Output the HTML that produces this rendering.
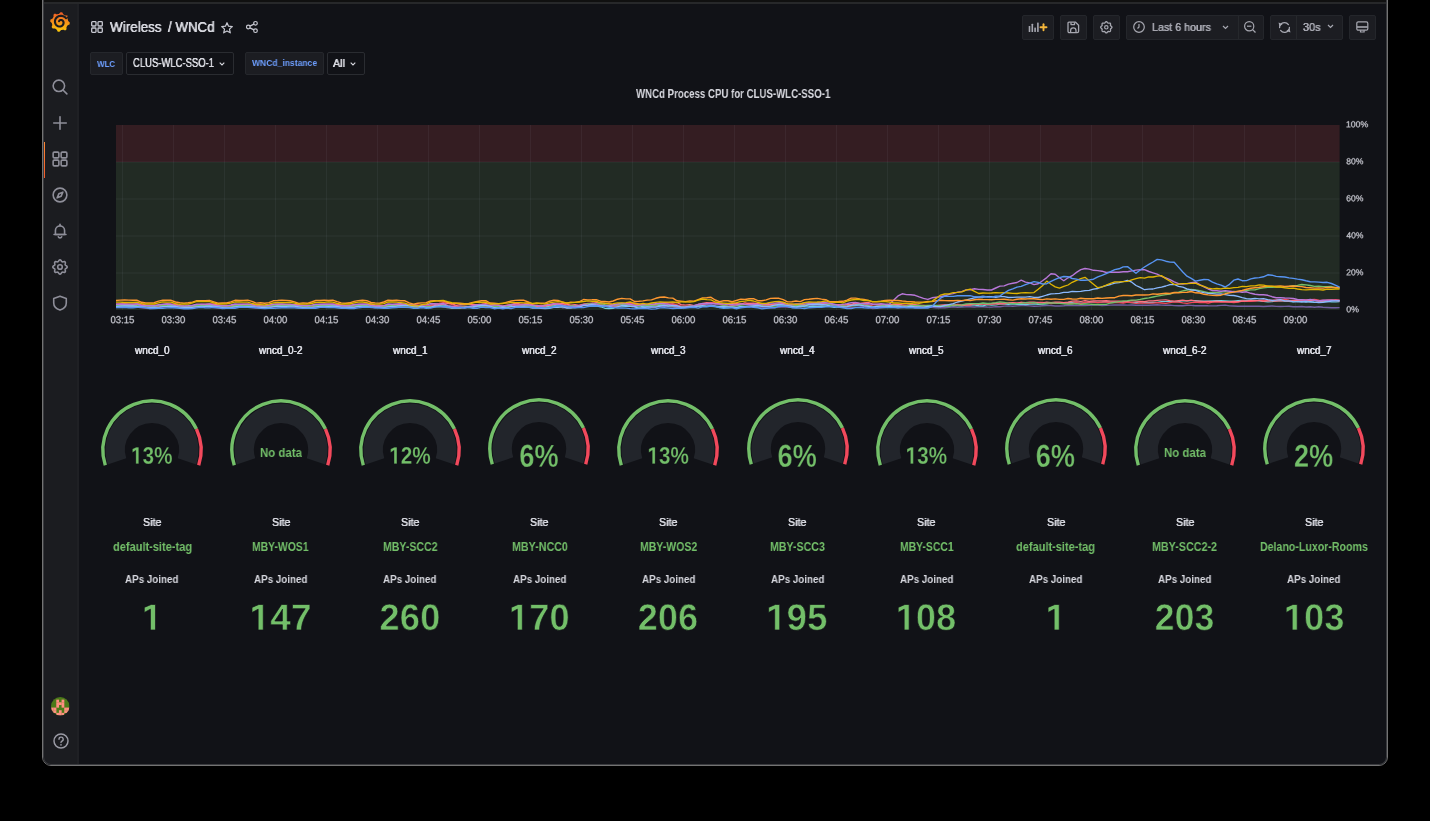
<!DOCTYPE html><html><head><meta charset="utf-8"><style>
*{margin:0;padding:0;box-sizing:border-box}
html,body{width:1430px;height:821px;background:#000;overflow:hidden;font-family:"Liberation Sans",sans-serif;color:#ccccdc}
#win{position:absolute;left:42px;top:-20px;width:1346px;height:786px;border:1px solid #737373;border-radius:9px;background:#111217;overflow:hidden}
#pg{position:absolute;left:-43px;top:19px;width:1430px;height:821px}
.t{position:absolute;white-space:nowrap;transform-origin:0 0;will-change:transform}
.bx{position:absolute;border-radius:2px}
svg{position:absolute;overflow:visible}
</style></head><body>
<div id="win"><div id="pg"><div class='bx' style='left:43px;top:0px;width:1344px;height:2px;background:#101010;border-radius:0px;'></div><div class='bx' style='left:43px;top:2px;width:1344px;height:2px;background:#27282a;border-radius:0px;'></div><div class='bx' style='left:43px;top:4px;width:34px;height:762px;background:#1b1c20;border-radius:0px;'></div><div class='bx' style='left:77px;top:4px;width:2px;height:762px;background:#1f2024;border-radius:0px;'></div><div class='bx' style='left:43px;top:142px;width:2px;height:36px;border-radius:0;background:linear-gradient(#ff8833,#f05a28)'></div><svg style='left:50px;top:12px' width='20' height='20' viewBox='0 0 20 20'><defs><linearGradient id='lg' x1='0' y1='0' x2='0' y2='1'><stop offset='0' stop-color='#f05a28'/><stop offset='1' stop-color='#fbca0a'/></linearGradient></defs><polygon points='11.46,0.31 12.41,0.50 12.95,1.84 13.53,2.60 14.23,2.98 14.90,3.43 15.85,3.58 17.28,3.44 17.89,4.18 18.42,4.98 17.86,6.31 17.73,7.26 17.96,8.03 18.11,8.82 18.67,9.60 19.79,10.51 19.69,11.46 19.50,12.41 18.16,12.95 17.40,13.53 17.02,14.23 16.57,14.90 16.42,15.85 16.56,17.28 15.82,17.89 15.02,18.42 13.69,17.86 12.74,17.73 11.97,17.96 11.18,18.11 10.40,18.67 9.49,19.79 8.54,19.69 7.59,19.50 7.05,18.16 6.47,17.40 5.77,17.02 5.10,16.57 4.15,16.42 2.72,16.56 2.11,15.82 1.58,15.02 2.14,13.69 2.27,12.74 2.04,11.97 1.89,11.18 1.33,10.40 0.21,9.49 0.31,8.54 0.50,7.59 1.84,7.05 2.60,6.47 2.98,5.77 3.43,5.10 3.58,4.15 3.44,2.72 4.18,2.11 4.98,1.58 6.31,2.14 7.26,2.27 8.03,2.04 8.82,1.89 9.60,1.33 10.51,0.21' fill='url(#lg)'/><polyline points='16.03,6.18 15.53,5.65 14.98,5.18 14.39,4.78 13.76,4.44 13.11,4.17 12.44,3.98 11.76,3.86 11.08,3.81 10.41,3.83 9.75,3.92 9.11,4.08 8.50,4.31 7.92,4.59 7.38,4.93 6.89,5.33 6.44,5.76 6.05,6.24 5.72,6.75 5.44,7.28 5.22,7.83 5.07,8.40 4.98,8.97 4.95,9.54 4.98,10.11 5.07,10.66 5.22,11.19 5.41,11.69 5.66,12.17 5.95,12.61 6.29,13.01 6.65,13.37 7.05,13.68 7.48,13.95 7.92,14.16 8.38,14.32 8.84,14.44 9.31,14.50 9.77,14.51 10.23,14.47 10.67,14.38 11.09,14.25 11.49,14.08 11.86,13.87 12.20,13.63 12.51,13.35 12.78,13.05 13.01,12.73 13.21,12.39 13.36,12.04 13.47,11.68 13.54,11.32 13.57,10.96 13.57,10.60 13.52,10.26 13.44,9.93 13.32,9.61 13.18,9.32 13.01,9.05 12.81,8.81 12.59,8.59 12.36,8.41 12.11,8.25 11.86,8.13 11.60,8.04 11.34,7.98 11.07,7.95 10.82,7.95 10.57,7.98 10.34,8.03 10.12,8.11 9.91,8.21 9.73,8.33 9.56,8.46 9.42,8.61 9.30,8.77 9.20,8.93 9.12,9.10 9.07,9.27' fill='none' stroke='#1b1c20' stroke-width='2.1' stroke-linecap='round'/><path d='M16.5 5 L19 3.5 L18.5 8 Z' fill='#1b1c20'/></svg><svg style='left:52px;top:79px' width='16' height='16' viewBox='0 0 14 14'><circle cx='6' cy='6' r='5' fill='none' stroke='#8e8e99' stroke-width='1.4' stroke-linecap='round' stroke-linejoin='round'/><line x1='9.8' y1='9.8' x2='13' y2='13' fill='none' stroke='#8e8e99' stroke-width='1.4' stroke-linecap='round' stroke-linejoin='round'/></svg><svg style='left:52px;top:115px' width='16' height='16' viewBox='0 0 14 14'><line x1='7' y1='1.5' x2='7' y2='12.5' fill='none' stroke='#8e8e99' stroke-width='1.4' stroke-linecap='round' stroke-linejoin='round'/><line x1='1.5' y1='7' x2='12.5' y2='7' fill='none' stroke='#8e8e99' stroke-width='1.4' stroke-linecap='round' stroke-linejoin='round'/></svg><svg style='left:52px;top:151px' width='16' height='16' viewBox='0 0 14 14'><rect x='1' y='1' width='5' height='5' rx='1' fill='none' stroke='#8e8e99' stroke-width='1.4' stroke-linecap='round' stroke-linejoin='round' stroke='#c8c8d2'/><rect x='8' y='1' width='5' height='5' rx='1' fill='none' stroke='#8e8e99' stroke-width='1.4' stroke-linecap='round' stroke-linejoin='round' stroke='#c8c8d2'/><rect x='1' y='8' width='5' height='5' rx='1' fill='none' stroke='#8e8e99' stroke-width='1.4' stroke-linecap='round' stroke-linejoin='round' stroke='#c8c8d2'/><rect x='8' y='8' width='5' height='5' rx='1' fill='none' stroke='#8e8e99' stroke-width='1.4' stroke-linecap='round' stroke-linejoin='round' stroke='#c8c8d2'/></svg><svg style='left:52px;top:187px' width='16' height='16' viewBox='0 0 14 14'><circle cx='7' cy='7' r='6' fill='none' stroke='#8e8e99' stroke-width='1.4' stroke-linecap='round' stroke-linejoin='round'/><path d='M9.5 4.5 L8 8 L4.5 9.5 L6 6 Z' fill='none' stroke='#8e8e99' stroke-width='1.4' stroke-linecap='round' stroke-linejoin='round' stroke-width='1.1'/></svg><svg style='left:52px;top:223px' width='16' height='16' viewBox='0 0 14 14'><path d='M3 10 V6.5 A4 4 0 0 1 11 6.5 V10 Z' fill='none' stroke='#8e8e99' stroke-width='1.4' stroke-linecap='round' stroke-linejoin='round'/><line x1='1.8' y1='10' x2='12.2' y2='10' fill='none' stroke='#8e8e99' stroke-width='1.4' stroke-linecap='round' stroke-linejoin='round'/><path d='M5.5 12 A1.6 1.6 0 0 0 8.5 12' fill='none' stroke='#8e8e99' stroke-width='1.4' stroke-linecap='round' stroke-linejoin='round'/><line x1='7' y1='1.2' x2='7' y2='2.4' fill='none' stroke='#8e8e99' stroke-width='1.4' stroke-linecap='round' stroke-linejoin='round'/></svg><svg style='left:52px;top:259px' width='16' height='16' viewBox='0 0 14 14'><polygon points='13.30,7.00 13.19,7.41 12.90,7.78 12.49,8.09 12.07,8.36 11.73,8.61 11.53,8.88 11.48,9.21 11.55,9.62 11.66,10.11 11.72,10.62 11.67,11.09 11.45,11.45 11.09,11.67 10.62,11.72 10.11,11.66 9.62,11.55 9.21,11.48 8.88,11.53 8.61,11.73 8.36,12.07 8.09,12.49 7.78,12.90 7.41,13.19 7.00,13.30 6.59,13.19 6.22,12.90 5.91,12.49 5.64,12.07 5.39,11.73 5.12,11.53 4.79,11.48 4.38,11.55 3.89,11.66 3.38,11.72 2.91,11.67 2.55,11.45 2.33,11.09 2.28,10.62 2.34,10.11 2.45,9.62 2.52,9.21 2.47,8.88 2.27,8.61 1.93,8.36 1.51,8.09 1.10,7.78 0.81,7.41 0.70,7.00 0.81,6.59 1.10,6.22 1.51,5.91 1.93,5.64 2.27,5.39 2.47,5.12 2.52,4.79 2.45,4.38 2.34,3.89 2.28,3.38 2.33,2.91 2.55,2.55 2.91,2.33 3.38,2.28 3.89,2.34 4.37,2.45 4.79,2.52 5.12,2.47 5.39,2.27 5.64,1.93 5.91,1.51 6.22,1.10 6.59,0.81 7.00,0.70 7.41,0.81 7.78,1.10 8.09,1.51 8.36,1.93 8.61,2.27 8.88,2.47 9.21,2.52 9.62,2.45 10.11,2.34 10.62,2.28 11.09,2.33 11.45,2.55 11.67,2.91 11.72,3.38 11.66,3.89 11.55,4.37 11.48,4.79 11.53,5.12 11.73,5.39 12.07,5.64 12.49,5.91 12.90,6.22 13.19,6.59' fill='none' stroke='#8e8e99' stroke-width='1.4' stroke-linecap='round' stroke-linejoin='round' stroke-width='1.2'/><circle cx='7' cy='7' r='2' fill='none' stroke='#8e8e99' stroke-width='1.4' stroke-linecap='round' stroke-linejoin='round'/></svg><svg style='left:52px;top:295px' width='16' height='16' viewBox='0 0 14 14'><path d='M7 1 L12.5 3 V7 C12.5 10 10 12.2 7 13.2 C4 12.2 1.5 10 1.5 7 V3 Z' fill='none' stroke='#8e8e99' stroke-width='1.4' stroke-linecap='round' stroke-linejoin='round'/></svg><svg style='left:51px;top:697px' width='18.5' height='18.5' viewBox='0 0 18.2 18.2'><defs><clipPath id='avc'><circle cx='9.1' cy='9.1' r='9.1'/></clipPath></defs><g clip-path='url(#avc)'><rect width='18.2' height='18.2' fill='#4b7a18'/><rect x='0.0' y='0.0' width='2.7' height='2.7' fill='#ff8f82'/><rect x='15.6' y='0.0' width='2.7' height='2.7' fill='#ff8f82'/><rect x='5.2' y='2.6' width='2.7' height='2.7' fill='#ff8f82'/><rect x='10.4' y='2.6' width='2.7' height='2.7' fill='#ff8f82'/><rect x='5.2' y='5.2' width='2.7' height='2.7' fill='#ff8f82'/><rect x='7.8' y='5.2' width='2.7' height='2.7' fill='#ff8f82'/><rect x='10.4' y='5.2' width='2.7' height='2.7' fill='#ff8f82'/><rect x='5.2' y='7.8' width='2.7' height='2.7' fill='#ff8f82'/><rect x='10.4' y='7.8' width='2.7' height='2.7' fill='#ff8f82'/><rect x='0.0' y='10.4' width='2.7' height='2.7' fill='#ff8f82'/><rect x='2.6' y='10.4' width='2.7' height='2.7' fill='#ff8f82'/><rect x='13.0' y='10.4' width='2.7' height='2.7' fill='#ff8f82'/><rect x='15.6' y='10.4' width='2.7' height='2.7' fill='#ff8f82'/><rect x='0.0' y='13.0' width='2.7' height='2.7' fill='#ff8f82'/><rect x='2.6' y='13.0' width='2.7' height='2.7' fill='#ff8f82'/><rect x='7.8' y='13.0' width='2.7' height='2.7' fill='#ff8f82'/><rect x='13.0' y='13.0' width='2.7' height='2.7' fill='#ff8f82'/><rect x='15.6' y='13.0' width='2.7' height='2.7' fill='#ff8f82'/><rect x='5.2' y='15.6' width='2.7' height='2.7' fill='#ff8f82'/><rect x='7.8' y='15.6' width='2.7' height='2.7' fill='#ff8f82'/><rect x='10.4' y='15.6' width='2.7' height='2.7' fill='#ff8f82'/></g></svg><svg style='left:52.5px;top:733px' width='16' height='16' viewBox='0 0 16 16'><circle cx='8' cy='8' r='7' fill='none' stroke='#9a9aa4' stroke-width='1.5'/><path d='M6 6.3 A2.1 2.1 0 1 1 8.6 8.3 C8.1 8.5 8 8.9 8 9.6' fill='none' stroke='#9a9aa4' stroke-width='1.4' stroke-linecap='round'/><circle cx='8' cy='11.8' r='0.85' fill='#9a9aa4'/></svg><svg style='left:91px;top:21px' width='12' height='12' viewBox='0 0 12 12'><rect x='0.7' y='0.7' width='4.3' height='4.3' rx='0.8' fill='none' stroke='#c8c9d2' stroke-width='1.3'/><rect x='7' y='0.7' width='4.3' height='4.3' rx='0.8' fill='none' stroke='#c8c9d2' stroke-width='1.3'/><rect x='0.7' y='7' width='4.3' height='4.3' rx='0.8' fill='none' stroke='#c8c9d2' stroke-width='1.3'/><rect x='7' y='7' width='4.3' height='4.3' rx='0.8' fill='none' stroke='#c8c9d2' stroke-width='1.3'/></svg><svg style='left:221px;top:22px' width='12' height='12' viewBox='0 0 12 12'><polygon points='6.00,0.70 7.53,4.20 11.33,4.57 8.47,7.10 9.29,10.83 6.00,8.90 2.71,10.83 3.53,7.10 0.67,4.57 4.47,4.20' fill='none' stroke='#c8c9d2' stroke-width='1.2' stroke-linejoin='round'/></svg><svg style='left:246px;top:21px' width='12' height='12' viewBox='0 0 12 12'><g fill='none' stroke='#c8c9d2' stroke-width='1.2'><circle cx='9.5' cy='2.3' r='1.8'/><circle cx='2.3' cy='6' r='1.8'/><circle cx='9.5' cy='9.7' r='1.8'/><line x1='3.9' y1='5.1' x2='7.9' y2='3.1'/><line x1='3.9' y1='6.9' x2='7.9' y2='8.9'/></g></svg><div class='bx' style='left:1022px;top:15px;width:32px;height:24.5px;background:#1c1d22;border:1px solid #24262b;border-radius:2px;'></div><div class='bx' style='left:1059.5px;top:15px;width:27.5px;height:24.5px;background:#1c1d22;border:1px solid #24262b;border-radius:2px;'></div><div class='bx' style='left:1092.5px;top:15px;width:27.5px;height:24.5px;background:#1c1d22;border:1px solid #24262b;border-radius:2px;'></div><div class='bx' style='left:1125.5px;top:15px;width:138.5px;height:24.5px;background:#1c1d22;border:1px solid #24262b;border-radius:2px;'></div><div class='bx' style='left:1270px;top:15px;width:73px;height:24.5px;background:#1c1d22;border:1px solid #24262b;border-radius:2px;'></div><div class='bx' style='left:1348.5px;top:15px;width:27.5px;height:24.5px;background:#1c1d22;border:1px solid #24262b;border-radius:2px;'></div><div class='bx' style='left:1237.5px;top:15.5px;width:1.0px;height:23.5px;background:#26282c;border-radius:0px;'></div><div class='bx' style='left:1296px;top:15.5px;width:1px;height:23.5px;background:#26282c;border-radius:0px;'></div><svg style='left:1028px;top:21px' width='20' height='12' viewBox='0 0 20 12'><g fill='#a6a7b0'><rect x='0.7' y='5' width='1.6' height='6' rx='0.5'/><rect x='3.5' y='2.8' width='1.6' height='8.2' rx='0.5'/><rect x='6.3' y='6.5' width='1.6' height='4.5' rx='0.5'/><rect x='9.1' y='1.5' width='1.6' height='9.5' rx='0.5'/></g><g stroke='#f5b73b' stroke-width='1.9' stroke-linecap='round'><line x1='15.5' y1='3.2' x2='15.5' y2='9.2'/><line x1='12.5' y1='6.2' x2='18.5' y2='6.2'/></g></svg><svg style='left:1067px;top:21px' width='13' height='13' viewBox='0 0 13 13'><g fill='none' stroke='#a6a7b0' stroke-width='1.3' stroke-linejoin='round'><path d='M2 1.2 H8.6 L11.6 4.2 V10.2 Q11.6 11.6 10.2 11.6 H2.4 Q1 11.6 1 10.2 V2.4 Q1 1.2 2 1.2 Z'/><path d='M4 1.5 V3.6 H7.5 V1.5'/><path d='M3.6 11.4 V9.6 A2.7 2.7 0 0 1 9 9.6 V11.4'/></g></svg><svg style='left:1100px;top:21px' width='13' height='13' viewBox='0 0 13 13'><polygon points='11.65,6.00 11.56,6.36 11.33,6.70 11.00,6.99 10.66,7.25 10.38,7.49 10.20,7.74 10.15,8.05 10.18,8.41 10.24,8.83 10.26,9.27 10.19,9.68 10.00,10.00 9.68,10.19 9.27,10.26 8.83,10.24 8.41,10.18 8.05,10.15 7.74,10.20 7.49,10.38 7.25,10.66 6.99,11.00 6.70,11.33 6.36,11.56 6.00,11.65 5.64,11.56 5.30,11.33 5.01,11.00 4.75,10.66 4.51,10.38 4.26,10.20 3.95,10.15 3.59,10.18 3.17,10.24 2.73,10.26 2.32,10.19 2.00,10.00 1.81,9.68 1.74,9.27 1.76,8.83 1.82,8.41 1.85,8.05 1.80,7.74 1.62,7.49 1.34,7.25 1.00,6.99 0.67,6.70 0.44,6.36 0.35,6.00 0.44,5.64 0.67,5.30 1.00,5.01 1.34,4.75 1.62,4.51 1.80,4.26 1.85,3.95 1.82,3.59 1.76,3.17 1.74,2.73 1.81,2.32 2.00,2.00 2.32,1.81 2.73,1.74 3.17,1.76 3.59,1.82 3.95,1.85 4.26,1.80 4.51,1.62 4.75,1.34 5.01,1.00 5.30,0.67 5.64,0.44 6.00,0.35 6.36,0.44 6.70,0.67 6.99,1.00 7.25,1.34 7.49,1.62 7.74,1.80 8.05,1.85 8.41,1.82 8.83,1.76 9.27,1.74 9.68,1.81 10.00,2.00 10.19,2.32 10.26,2.73 10.24,3.17 10.18,3.59 10.15,3.95 10.20,4.26 10.38,4.51 10.66,4.75 11.00,5.01 11.33,5.30 11.56,5.64' fill='none' stroke='#a6a7b0' stroke-width='1.3' stroke-linejoin='round' transform='translate(0.3,0.3)'/><circle cx='6.3' cy='6.3' r='1.7' fill='none' stroke='#a6a7b0' stroke-width='1.2'/></svg><svg style='left:1133px;top:21px' width='12' height='12' viewBox='0 0 12 12'><circle cx='6' cy='6' r='5.3' fill='none' stroke='#a6a7b0' stroke-width='1.2'/><path d='M6 3 V6 L4.5 7.5' fill='none' stroke='#a6a7b0' stroke-width='1.2'/></svg><svg style='left:1221.5px;top:24.5px' width='7' height='5' viewBox='0 0 7 5'><path d='M1 1 L3.5 3.5 L6 1' fill='none' stroke='#a6a7b0' stroke-width='1.2'/></svg><svg style='left:1244px;top:21px' width='12' height='12' viewBox='0 0 12 12'><circle cx='5.2' cy='5.2' r='4.6' fill='none' stroke='#a6a7b0' stroke-width='1.2'/><line x1='3' y1='5.2' x2='7.4' y2='5.2' stroke='#a6a7b0' stroke-width='1.2'/><line x1='8.6' y1='8.6' x2='11.5' y2='11.5' stroke='#a6a7b0' stroke-width='1.3'/></svg><svg style='left:1277.5px;top:21px' width='13' height='13' viewBox='0 0 13 13'><g fill='none' stroke='#a6a7b0' stroke-width='1.3' stroke-linecap='round'><path d='M1.6 6.5 A4.9 4.9 0 0 1 10.4 3.6'/><path d='M11.4 6.5 A4.9 4.9 0 0 1 2.6 9.4'/></g><path d='M0.6 1.6 L4.6 3.2 L1.4 5.6 Z' fill='#a6a7b0'/><path d='M12.4 11.4 L8.4 9.8 L11.6 7.4 Z' fill='#a6a7b0'/></svg><svg style='left:1327px;top:24px' width='7' height='5' viewBox='0 0 7 5'><path d='M1 1 L3.5 3.5 L6 1' fill='none' stroke='#a6a7b0' stroke-width='1.2'/></svg><svg style='left:1356px;top:21px' width='13' height='13' viewBox='0 0 13 13'><g fill='none' stroke='#a6a7b0' stroke-width='1.2'><rect x='0.8' y='0.8' width='11' height='8.4' rx='1.5'/><path d='M4.5 9.2 V11 H8.1 V9.2'/></g><rect x='1' y='5.2' width='10.6' height='1.6' fill='#a6a7b0'/></svg><div class='bx' style='left:90px;top:52px;width:33px;height:23px;background:#1c1d22;border:1px solid #25272c;border-radius:2px;'></div><div class='bx' style='left:126px;top:52px;width:108px;height:23px;background:#111217;border:1px solid #2a2c31;border-radius:2px;'></div><div class='bx' style='left:245px;top:52px;width:79px;height:23px;background:#1c1d22;border:1px solid #25272c;border-radius:2px;'></div><div class='bx' style='left:327px;top:52px;width:38px;height:23px;background:#111217;border:1px solid #2a2c31;border-radius:2px;'></div><svg style='left:219px;top:61.5px' width='6' height='4' viewBox='0 0 6 4'><path d='M0.7 0.7 L3 3 L5.3 0.7' fill='none' stroke='#d8d9e0' stroke-width='1.1'/></svg><svg style='left:350px;top:61.5px' width='6' height='4' viewBox='0 0 6 4'><path d='M0.7 0.7 L3 3 L5.3 0.7' fill='none' stroke='#d8d9e0' stroke-width='1.1'/></svg><svg style='left:116px;top:124.7px' width='1223.6' height='185.0'><rect x='0' y='0' width='1223.6' height='37.0' fill='#341d22'/><rect x='0' y='37.0' width='1223.6' height='148.0' fill='#222b24'/><line x1='0' y1='148.0' x2='1223.6' y2='148.0' stroke='rgba(204,204,220,0.07)' stroke-width='1'/><line x1='0' y1='111.0' x2='1223.6' y2='111.0' stroke='rgba(204,204,220,0.07)' stroke-width='1'/><line x1='0' y1='74.0' x2='1223.6' y2='74.0' stroke='rgba(204,204,220,0.07)' stroke-width='1'/><line x1='0' y1='37.0' x2='1223.6' y2='37.0' stroke='rgba(204,204,220,0.07)' stroke-width='1'/><line x1='6.4' y1='0' x2='6.4' y2='185.0' stroke='rgba(204,204,220,0.07)' stroke-width='1'/><line x1='57.4' y1='0' x2='57.4' y2='185.0' stroke='rgba(204,204,220,0.07)' stroke-width='1'/><line x1='108.4' y1='0' x2='108.4' y2='185.0' stroke='rgba(204,204,220,0.07)' stroke-width='1'/><line x1='159.4' y1='0' x2='159.4' y2='185.0' stroke='rgba(204,204,220,0.07)' stroke-width='1'/><line x1='210.4' y1='0' x2='210.4' y2='185.0' stroke='rgba(204,204,220,0.07)' stroke-width='1'/><line x1='261.4' y1='0' x2='261.4' y2='185.0' stroke='rgba(204,204,220,0.07)' stroke-width='1'/><line x1='312.4' y1='0' x2='312.4' y2='185.0' stroke='rgba(204,204,220,0.07)' stroke-width='1'/><line x1='363.4' y1='0' x2='363.4' y2='185.0' stroke='rgba(204,204,220,0.07)' stroke-width='1'/><line x1='414.4' y1='0' x2='414.4' y2='185.0' stroke='rgba(204,204,220,0.07)' stroke-width='1'/><line x1='465.4' y1='0' x2='465.4' y2='185.0' stroke='rgba(204,204,220,0.07)' stroke-width='1'/><line x1='516.4' y1='0' x2='516.4' y2='185.0' stroke='rgba(204,204,220,0.07)' stroke-width='1'/><line x1='567.4' y1='0' x2='567.4' y2='185.0' stroke='rgba(204,204,220,0.07)' stroke-width='1'/><line x1='618.4' y1='0' x2='618.4' y2='185.0' stroke='rgba(204,204,220,0.07)' stroke-width='1'/><line x1='669.4' y1='0' x2='669.4' y2='185.0' stroke='rgba(204,204,220,0.07)' stroke-width='1'/><line x1='720.4' y1='0' x2='720.4' y2='185.0' stroke='rgba(204,204,220,0.07)' stroke-width='1'/><line x1='771.4' y1='0' x2='771.4' y2='185.0' stroke='rgba(204,204,220,0.07)' stroke-width='1'/><line x1='822.4' y1='0' x2='822.4' y2='185.0' stroke='rgba(204,204,220,0.07)' stroke-width='1'/><line x1='873.4' y1='0' x2='873.4' y2='185.0' stroke='rgba(204,204,220,0.07)' stroke-width='1'/><line x1='924.4' y1='0' x2='924.4' y2='185.0' stroke='rgba(204,204,220,0.07)' stroke-width='1'/><line x1='975.4' y1='0' x2='975.4' y2='185.0' stroke='rgba(204,204,220,0.07)' stroke-width='1'/><line x1='1026.4' y1='0' x2='1026.4' y2='185.0' stroke='rgba(204,204,220,0.07)' stroke-width='1'/><line x1='1077.4' y1='0' x2='1077.4' y2='185.0' stroke='rgba(204,204,220,0.07)' stroke-width='1'/><line x1='1128.4' y1='0' x2='1128.4' y2='185.0' stroke='rgba(204,204,220,0.07)' stroke-width='1'/><line x1='1179.4' y1='0' x2='1179.4' y2='185.0' stroke='rgba(204,204,220,0.07)' stroke-width='1'/><polyline points='0.0,181.9 4.2,181.9 8.5,182.0 12.8,182.0 17.0,181.9 21.2,182.1 25.5,182.9 29.8,183.3 34.0,183.5 38.2,183.4 42.5,182.6 46.8,182.0 51.0,181.6 55.2,181.8 59.5,182.8 63.8,182.8 68.0,182.6 72.2,182.8 76.5,182.3 80.8,181.5 85.0,181.9 89.2,181.9 93.5,182.1 97.8,182.5 102.0,183.2 106.2,183.3 110.5,183.3 114.8,182.6 119.0,182.1 123.2,182.1 127.5,182.1 131.8,182.2 136.0,182.6 140.2,183.3 144.5,183.0 148.8,182.9 153.0,182.3 157.2,181.7 161.5,181.7 165.8,181.9 170.0,181.9 174.2,182.0 178.5,182.4 182.8,183.0 187.0,182.7 191.2,182.8 195.5,182.8 199.8,182.4 204.0,182.3 208.2,181.7 212.5,181.8 216.8,182.2 221.0,182.5 225.2,182.9 229.5,182.8 233.8,182.9 238.0,182.0 242.2,181.7 246.5,181.3 250.8,181.5 255.0,182.5 259.2,182.8 263.5,182.3 267.8,182.2 272.0,181.5 276.2,181.7 280.5,181.7 284.8,181.6 289.0,182.3 293.2,182.6 297.5,182.2 301.8,181.8 306.0,182.5 310.2,181.6 314.5,181.1 318.8,180.9 323.0,180.7 327.2,181.6 331.5,182.8 335.8,183.2 340.0,182.3 344.2,183.0 348.5,182.7 352.8,182.4 357.0,181.8 361.2,182.0 365.5,181.7 369.8,181.4 374.0,182.1 378.2,183.1 382.5,182.6 386.8,182.8 391.0,182.4 395.2,181.1 399.5,180.4 403.8,180.7 408.0,181.1 412.2,181.0 416.5,181.9 420.8,181.4 425.0,182.0 429.2,181.4 433.5,181.0 437.8,181.5 442.0,181.2 446.2,182.7 450.5,182.8 454.8,182.3 459.0,182.2 463.2,181.4 467.5,180.4 471.8,180.6 476.0,180.5 480.2,180.6 484.5,180.6 488.8,180.8 493.0,181.3 497.2,181.2 501.5,179.9 505.8,179.6 510.0,179.8 514.2,180.1 518.5,181.7 522.8,182.1 527.0,182.4 531.2,182.0 535.5,181.9 539.8,181.8 544.0,181.5 548.2,181.3 552.5,181.7 556.8,182.0 561.0,182.8 565.2,182.4 569.5,181.8 573.8,182.3 578.0,181.8 582.2,180.7 586.5,179.8 590.8,179.7 595.0,179.5 599.2,181.1 603.5,182.6 607.8,181.6 612.0,181.8 616.2,181.8 620.5,182.3 624.8,181.4 629.0,182.0 633.2,180.8 637.5,181.8 641.8,182.3 646.0,182.4 650.2,183.1 654.5,182.8 658.8,182.5 663.0,182.3 667.2,181.7 671.5,182.4 675.8,182.2 680.0,182.6 684.2,182.1 688.5,180.8 692.8,180.2 697.0,180.3 701.2,180.6 705.5,180.3 709.8,179.8 714.0,180.6 718.2,181.3 722.5,181.2 726.8,182.3 731.0,182.3 735.2,182.1 739.5,182.2 743.8,182.0 748.0,181.1 752.2,182.4 756.5,183.5 760.8,183.4 765.0,182.8 769.2,182.3 773.5,182.4 777.8,182.4 782.0,182.8 786.2,182.6 790.5,182.4 794.8,182.2 799.0,182.6 803.2,182.9 807.5,182.6 811.8,182.4 816.0,182.4 820.2,182.9 824.5,182.7 828.8,182.8 833.0,182.3 837.2,181.8 841.5,182.3 845.8,182.1 850.0,181.8 854.2,181.7 858.5,182.0 862.8,181.5 867.0,181.7 871.2,182.0 875.5,182.1 879.8,181.6 884.0,181.7 888.2,181.1 892.5,180.9 896.8,181.3 901.0,180.9 905.2,180.5 909.5,180.5 913.8,180.9 918.0,181.3 922.2,181.1 926.5,180.7 930.8,180.6 935.0,180.5 939.2,181.0 943.5,181.0 947.8,180.7 952.0,180.3 956.2,180.6 960.5,180.2 964.8,180.5 969.0,180.6 973.2,180.4 977.5,180.1 981.8,180.0 986.0,180.6 990.2,180.4 994.5,180.1 998.8,180.0 1003.0,180.0 1007.2,180.0 1011.5,180.1 1015.8,180.0 1020.0,180.3 1024.2,180.2 1028.5,180.1 1032.8,180.3 1037.0,180.0 1041.2,179.8 1045.5,180.1 1049.8,180.3 1054.0,180.1 1058.2,180.6 1062.5,180.7 1066.8,180.7 1071.0,180.3 1075.2,180.4 1079.5,180.8 1083.8,180.8 1088.0,180.6 1092.2,180.8 1096.5,180.9 1100.8,180.8 1105.0,180.4 1109.2,180.1 1113.5,180.9 1117.8,181.0 1122.0,181.2 1126.2,181.3 1130.5,181.3 1134.8,181.1 1139.0,181.3 1143.2,181.2 1147.5,181.5 1151.8,181.2 1156.0,181.0 1160.2,181.4 1164.5,181.5 1168.8,181.4 1173.0,181.3 1177.2,181.8 1181.5,181.7 1185.8,181.5 1190.0,182.0 1194.2,181.8 1198.5,182.2 1202.8,181.7 1207.0,182.3 1211.2,182.5 1215.5,182.8 1219.8,182.8 1223.6,182.6' fill='none' stroke='#705da0' stroke-width='1.4' stroke-linejoin='round'/><polyline points='0.0,180.8 4.2,180.7 8.5,180.8 12.8,180.7 17.0,180.6 21.2,181.1 25.5,181.5 29.8,181.9 34.0,182.2 38.2,182.3 42.5,181.8 46.8,180.6 51.0,180.8 55.2,180.7 59.5,181.2 63.8,182.3 68.0,182.2 72.2,182.0 76.5,182.0 80.8,180.8 85.0,180.7 89.2,180.4 93.5,180.4 97.8,180.6 102.0,181.6 106.2,181.8 110.5,182.1 114.8,181.8 119.0,181.0 123.2,180.4 127.5,180.7 131.8,180.6 136.0,180.7 140.2,181.9 144.5,182.0 148.8,182.1 153.0,182.0 157.2,181.2 161.5,180.7 165.8,180.7 170.0,180.7 174.2,180.8 178.5,180.8 182.8,181.9 187.0,181.9 191.2,181.9 195.5,181.8 199.8,180.7 204.0,180.6 208.2,180.9 212.5,180.5 216.8,180.5 221.0,181.3 225.2,182.1 229.5,181.9 233.8,182.1 238.0,181.6 242.2,180.7 246.5,180.8 250.8,180.5 255.0,181.4 259.2,181.9 263.5,181.9 267.8,181.6 272.0,181.0 276.2,180.6 280.5,180.6 284.8,180.9 289.0,180.0 293.2,180.2 297.5,181.6 301.8,182.2 306.0,181.8 310.2,181.4 314.5,180.1 318.8,179.3 323.0,180.5 327.2,180.2 331.5,181.0 335.8,182.1 340.0,182.0 344.2,181.2 348.5,181.3 352.8,181.4 357.0,181.6 361.2,181.2 365.5,181.4 369.8,181.6 374.0,181.2 378.2,182.0 382.5,181.3 386.8,181.3 391.0,181.0 395.2,180.4 399.5,179.9 403.8,179.8 408.0,180.3 412.2,179.8 416.5,181.1 420.8,181.5 425.0,181.0 429.2,181.8 433.5,181.1 437.8,180.7 442.0,180.0 446.2,180.1 450.5,181.5 454.8,181.2 459.0,181.3 463.2,181.7 467.5,180.2 471.8,180.9 476.0,181.1 480.2,181.0 484.5,181.8 488.8,183.3 493.0,183.6 497.2,183.4 501.5,181.2 505.8,181.2 510.0,181.4 514.2,181.4 518.5,181.7 522.8,182.0 527.0,181.3 531.2,180.8 535.5,180.4 539.8,181.0 544.0,180.1 548.2,180.3 552.5,180.1 556.8,179.8 561.0,181.3 565.2,182.2 569.5,182.3 573.8,181.8 578.0,182.1 582.2,181.2 586.5,181.2 590.8,181.4 595.0,180.8 599.2,181.3 603.5,182.5 607.8,182.6 612.0,182.8 616.2,182.2 620.5,182.5 624.8,181.5 629.0,181.5 633.2,181.7 637.5,181.0 641.8,180.8 646.0,180.7 650.2,180.3 654.5,180.5 658.8,180.0 663.0,180.2 667.2,180.6 671.5,181.4 675.8,182.2 680.0,182.2 684.2,181.5 688.5,181.9 692.8,181.6 697.0,181.2 701.2,181.4 705.5,181.1 709.8,181.4 714.0,181.6 718.2,182.4 722.5,181.7 726.8,181.9 731.0,180.9 735.2,179.7 739.5,179.4 743.8,178.8 748.0,179.4 752.2,180.5 756.5,181.8 760.8,181.7 765.0,181.3 769.2,181.4 773.5,181.2 777.8,182.0 782.0,181.8 786.2,181.4 790.5,181.9 794.8,181.7 799.0,182.3 803.2,182.5 807.5,182.1 811.8,181.4 816.0,181.5 820.2,181.1 824.5,181.4 828.8,180.8 833.0,181.0 837.2,180.5 841.5,180.7 845.8,181.0 850.0,180.1 854.2,180.0 858.5,180.2 862.8,180.7 867.0,180.9 871.2,179.6 875.5,180.2 879.8,180.0 884.0,179.2 888.2,179.1 892.5,179.3 896.8,178.8 901.0,179.5 905.2,179.2 909.5,179.7 913.8,179.1 918.0,178.9 922.2,179.4 926.5,179.2 930.8,178.9 935.0,178.2 939.2,177.9 943.5,178.0 947.8,178.4 952.0,177.6 956.2,177.5 960.5,178.2 964.8,178.2 969.0,178.0 973.2,177.3 977.5,177.0 981.8,177.4 986.0,177.1 990.2,176.7 994.5,177.3 998.8,177.2 1003.0,177.3 1007.2,177.4 1011.5,177.5 1015.8,177.7 1020.0,177.7 1024.2,177.0 1028.5,177.3 1032.8,177.6 1037.0,177.3 1041.2,177.3 1045.5,176.5 1049.8,176.5 1054.0,176.5 1058.2,176.6 1062.5,176.6 1066.8,175.6 1071.0,175.9 1075.2,175.7 1079.5,175.6 1083.8,176.1 1088.0,176.0 1092.2,176.1 1096.5,175.9 1100.8,175.7 1105.0,175.7 1109.2,175.9 1113.5,176.2 1117.8,176.2 1122.0,175.5 1126.2,175.3 1130.5,175.3 1134.8,175.1 1139.0,175.3 1143.2,175.8 1147.5,176.4 1151.8,176.9 1156.0,176.6 1160.2,176.0 1164.5,175.6 1168.8,176.2 1173.0,176.5 1177.2,176.9 1181.5,176.2 1185.8,176.9 1190.0,176.5 1194.2,176.9 1198.5,177.4 1202.8,176.8 1207.0,176.4 1211.2,176.3 1215.5,177.0 1219.8,177.0 1223.6,176.6' fill='none' stroke='#6ed0e0' stroke-width='1.2' stroke-linejoin='round'/><polyline points='0.0,179.6 4.2,179.7 8.5,179.5 12.8,179.7 17.0,179.6 21.2,179.7 25.5,179.8 29.8,181.0 34.0,181.2 38.2,181.5 42.5,181.3 46.8,180.2 51.0,179.9 55.2,179.8 59.5,179.7 63.8,181.1 68.0,181.5 72.2,181.3 76.5,181.0 80.8,180.3 85.0,179.6 89.2,179.3 93.5,179.3 97.8,179.2 102.0,180.5 106.2,181.3 110.5,181.4 114.8,181.3 119.0,180.6 123.2,179.8 127.5,179.5 131.8,179.8 136.0,179.3 140.2,180.3 144.5,181.3 148.8,181.5 153.0,181.7 157.2,180.9 161.5,180.0 165.8,179.8 170.0,179.8 174.2,179.6 178.5,179.8 182.8,180.4 187.0,181.3 191.2,181.4 195.5,181.6 199.8,180.4 204.0,179.8 208.2,180.0 212.5,179.9 216.8,179.5 221.0,179.6 225.2,180.9 229.5,181.5 233.8,181.5 238.0,181.4 242.2,180.3 246.5,180.1 250.8,180.0 255.0,180.2 259.2,181.2 263.5,181.2 267.8,181.4 272.0,180.7 276.2,179.6 280.5,180.0 284.8,180.1 289.0,179.5 293.2,179.4 297.5,180.0 301.8,179.9 306.0,180.9 310.2,180.8 314.5,180.6 318.8,178.9 323.0,178.5 327.2,177.7 331.5,177.8 335.8,179.5 340.0,180.9 344.2,181.7 348.5,181.2 352.8,181.9 357.0,181.2 361.2,180.2 365.5,180.3 369.8,181.1 374.0,180.5 378.2,181.4 382.5,182.0 386.8,181.8 391.0,182.2 395.2,181.5 399.5,179.6 403.8,179.3 408.0,179.2 412.2,178.7 416.5,180.2 420.8,180.8 425.0,180.5 429.2,180.8 433.5,180.2 437.8,178.6 442.0,178.3 446.2,178.9 450.5,179.8 454.8,180.9 459.0,180.8 463.2,180.4 467.5,179.5 471.8,178.4 476.0,178.2 480.2,179.1 484.5,179.5 488.8,180.4 493.0,181.3 497.2,181.6 501.5,180.9 505.8,179.4 510.0,179.0 514.2,178.2 518.5,179.0 522.8,179.7 527.0,180.1 531.2,179.6 535.5,179.5 539.8,180.2 544.0,178.8 548.2,178.7 552.5,179.5 556.8,179.0 561.0,179.8 565.2,181.1 569.5,181.1 573.8,181.0 578.0,180.9 582.2,180.8 586.5,179.8 590.8,178.2 595.0,177.7 599.2,178.0 603.5,179.1 607.8,180.4 612.0,181.4 616.2,180.5 620.5,179.7 624.8,178.9 629.0,179.2 633.2,178.1 637.5,178.6 641.8,178.6 646.0,179.8 650.2,180.1 654.5,180.7 658.8,179.2 663.0,179.3 667.2,179.3 671.5,180.3 675.8,181.3 680.0,180.7 684.2,180.3 688.5,180.2 692.8,179.3 697.0,179.2 701.2,178.6 705.5,178.9 709.8,178.4 714.0,179.3 718.2,181.0 722.5,181.6 726.8,180.8 731.0,181.2 735.2,180.9 739.5,179.0 743.8,179.1 748.0,179.2 752.2,179.8 756.5,180.9 760.8,181.2 765.0,180.4 769.2,181.0 773.5,180.1 777.8,180.6 782.0,180.1 786.2,180.2 790.5,180.8 794.8,181.4 799.0,181.6 803.2,180.8 807.5,181.1 811.8,180.6 816.0,181.2 820.2,181.1 824.5,180.7 828.8,180.5 833.0,180.3 837.2,180.3 841.5,179.3 845.8,179.9 850.0,180.0 854.2,180.0 858.5,178.9 862.8,178.7 867.0,178.8 871.2,179.0 875.5,179.1 879.8,178.9 884.0,178.7 888.2,178.9 892.5,178.2 896.8,177.8 901.0,178.1 905.2,177.5 909.5,178.2 913.8,178.4 918.0,177.8 922.2,177.4 926.5,177.4 930.8,178.2 935.0,178.5 939.2,178.2 943.5,177.9 947.8,177.7 952.0,178.4 956.2,178.4 960.5,177.7 964.8,178.3 969.0,177.4 973.2,177.0 977.5,177.1 981.8,177.6 986.0,177.1 990.2,177.0 994.5,177.6 998.8,177.4 1003.0,177.7 1007.2,178.0 1011.5,177.1 1015.8,177.7 1020.0,178.3 1024.2,178.0 1028.5,178.2 1032.8,178.2 1037.0,178.1 1041.2,177.6 1045.5,178.0 1049.8,178.4 1054.0,177.6 1058.2,176.9 1062.5,177.2 1066.8,177.9 1071.0,178.3 1075.2,177.6 1079.5,177.2 1083.8,177.5 1088.0,177.4 1092.2,178.0 1096.5,177.2 1100.8,177.2 1105.0,177.2 1109.2,176.8 1113.5,177.2 1117.8,177.5 1122.0,177.0 1126.2,176.0 1130.5,176.3 1134.8,176.4 1139.0,176.1 1143.2,175.3 1147.5,175.2 1151.8,175.5 1156.0,175.3 1160.2,175.0 1164.5,174.7 1168.8,174.5 1173.0,175.1 1177.2,175.5 1181.5,175.1 1185.8,174.9 1190.0,175.0 1194.2,174.7 1198.5,174.5 1202.8,175.2 1207.0,175.5 1211.2,175.1 1215.5,175.1 1219.8,174.6 1223.6,175.1' fill='none' stroke='#f2495c' stroke-width='1.3' stroke-linejoin='round'/><polyline points='0.0,179.0 4.2,178.9 8.5,178.8 12.8,179.0 17.0,179.2 21.2,178.8 25.5,178.8 29.8,180.0 34.0,180.3 38.2,180.4 42.5,180.5 46.8,179.6 51.0,178.9 55.2,179.0 59.5,179.0 63.8,180.5 68.0,180.9 72.2,181.1 76.5,181.1 80.8,180.6 85.0,179.4 89.2,179.5 93.5,179.2 97.8,179.1 102.0,179.8 106.2,180.7 110.5,180.4 114.8,180.8 119.0,180.1 123.2,179.4 127.5,179.3 131.8,179.2 136.0,179.4 140.2,179.7 144.5,180.9 148.8,180.9 153.0,181.0 157.2,180.7 161.5,179.5 165.8,179.4 170.0,179.6 174.2,179.7 178.5,179.5 182.8,179.7 187.0,180.7 191.2,180.9 195.5,180.8 199.8,179.9 204.0,179.3 208.2,179.0 212.5,179.1 216.8,179.0 221.0,179.2 225.2,179.8 229.5,180.6 233.8,180.3 238.0,180.4 242.2,179.4 246.5,179.1 250.8,179.1 255.0,178.9 259.2,180.1 263.5,180.4 267.8,180.7 272.0,180.4 276.2,179.6 280.5,179.6 284.8,179.4 289.0,180.1 293.2,179.3 297.5,181.3 301.8,182.3 306.0,182.4 310.2,182.5 314.5,182.4 318.8,180.3 323.0,179.7 327.2,179.4 331.5,178.5 335.8,178.7 340.0,180.3 344.2,179.6 348.5,179.5 352.8,179.4 357.0,179.7 361.2,179.5 365.5,179.2 369.8,178.7 374.0,178.9 378.2,180.0 382.5,180.2 386.8,181.0 391.0,180.2 395.2,179.5 399.5,178.1 403.8,178.8 408.0,179.0 412.2,178.2 416.5,179.8 420.8,181.3 425.0,180.9 429.2,180.6 433.5,180.3 437.8,179.3 442.0,179.3 446.2,178.4 450.5,179.1 454.8,180.2 459.0,179.7 463.2,180.4 467.5,179.1 471.8,178.7 476.0,178.3 480.2,177.7 484.5,177.6 488.8,178.4 493.0,178.9 497.2,179.8 501.5,180.1 505.8,178.8 510.0,178.4 514.2,177.5 518.5,178.0 522.8,178.8 527.0,179.7 531.2,180.5 535.5,179.5 539.8,179.3 544.0,178.2 548.2,177.7 552.5,177.9 556.8,177.9 561.0,177.5 565.2,179.6 569.5,180.0 573.8,179.5 578.0,180.5 582.2,179.6 586.5,178.3 590.8,177.5 595.0,178.4 599.2,178.3 603.5,178.5 607.8,178.9 612.0,179.0 616.2,178.7 620.5,178.5 624.8,179.1 629.0,177.8 633.2,178.7 637.5,178.0 641.8,178.7 646.0,179.3 650.2,179.6 654.5,179.7 658.8,179.0 663.0,179.0 667.2,178.4 671.5,179.2 675.8,180.8 680.0,180.7 684.2,179.6 688.5,179.5 692.8,178.5 697.0,178.1 701.2,178.8 705.5,178.4 709.8,179.1 714.0,178.9 718.2,180.1 722.5,179.7 726.8,180.1 731.0,179.7 735.2,179.6 739.5,177.9 743.8,178.3 748.0,177.8 752.2,177.3 756.5,179.0 760.8,179.4 765.0,179.9 769.2,179.7 773.5,179.5 777.8,179.4 782.0,179.4 786.2,179.8 790.5,180.0 794.8,179.7 799.0,179.6 803.2,180.2 807.5,180.3 811.8,180.5 816.0,180.7 820.2,180.5 824.5,180.1 828.8,179.9 833.0,180.2 837.2,180.0 841.5,180.2 845.8,180.3 850.0,179.9 854.2,179.6 858.5,178.7 862.8,179.3 867.0,178.9 871.2,178.9 875.5,178.7 879.8,178.3 884.0,178.0 888.2,178.1 892.5,177.9 896.8,177.6 901.0,178.2 905.2,177.4 909.5,177.6 913.8,177.2 918.0,177.0 922.2,177.7 926.5,177.8 930.8,177.2 935.0,177.5 939.2,177.0 943.5,177.2 947.8,177.6 952.0,177.2 956.2,176.2 960.5,175.8 964.8,176.5 969.0,175.7 973.2,176.3 977.5,175.9 981.8,175.9 986.0,175.9 990.2,175.6 994.5,176.1 998.8,176.1 1003.0,176.0 1007.2,176.5 1011.5,176.4 1015.8,175.6 1020.0,176.2 1024.2,176.3 1028.5,176.6 1032.8,175.8 1037.0,175.8 1041.2,175.4 1045.5,175.0 1049.8,174.8 1054.0,175.7 1058.2,176.0 1062.5,175.6 1066.8,175.2 1071.0,175.8 1075.2,175.2 1079.5,176.0 1083.8,176.1 1088.0,176.5 1092.2,176.3 1096.5,176.6 1100.8,176.2 1105.0,176.6 1109.2,176.7 1113.5,176.8 1117.8,176.4 1122.0,176.6 1126.2,176.2 1130.5,176.0 1134.8,175.3 1139.0,175.6 1143.2,175.6 1147.5,176.3 1151.8,175.9 1156.0,175.8 1160.2,176.2 1164.5,175.7 1168.8,176.0 1173.0,176.2 1177.2,175.6 1181.5,175.4 1185.8,175.0 1190.0,175.4 1194.2,175.1 1198.5,175.5 1202.8,176.1 1207.0,176.0 1211.2,175.3 1215.5,175.1 1219.8,175.5 1223.6,175.8' fill='none' stroke='#ff7383' stroke-width='1.2' stroke-linejoin='round'/><polyline points='0.0,180.4 4.2,180.7 8.5,180.6 12.8,180.5 17.0,180.8 21.2,180.4 25.5,180.9 29.8,181.6 34.0,181.6 38.2,181.6 42.5,180.7 46.8,180.0 51.0,180.3 55.2,180.0 59.5,180.9 63.8,181.2 68.0,181.3 72.2,181.4 76.5,181.0 80.8,180.5 85.0,180.3 89.2,180.6 93.5,180.8 97.8,180.7 102.0,181.7 106.2,181.7 110.5,182.0 114.8,181.6 119.0,180.7 123.2,180.4 127.5,180.7 131.8,180.3 136.0,181.0 140.2,181.3 144.5,181.4 148.8,181.4 153.0,181.8 157.2,180.7 161.5,180.5 165.8,180.6 170.0,180.4 174.2,180.4 178.5,180.9 182.8,181.4 187.0,181.6 191.2,181.8 195.5,181.2 199.8,180.4 204.0,180.8 208.2,180.3 212.5,180.6 216.8,180.7 221.0,181.2 225.2,181.9 229.5,181.9 233.8,181.8 238.0,180.8 242.2,180.4 246.5,180.5 250.8,180.5 255.0,181.3 259.2,181.7 263.5,181.4 267.8,181.6 272.0,180.7 276.2,180.7 280.5,180.7 284.8,180.9 289.0,181.0 293.2,181.2 297.5,182.4 301.8,181.5 306.0,182.3 310.2,181.7 314.5,181.6 318.8,181.8 323.0,181.6 327.2,180.9 331.5,182.1 335.8,183.2 340.0,182.5 344.2,182.9 348.5,181.7 352.8,182.6 357.0,182.5 361.2,181.0 365.5,181.2 369.8,180.7 374.0,181.4 378.2,181.2 382.5,181.7 386.8,182.4 391.0,181.7 395.2,181.6 399.5,181.3 403.8,180.8 408.0,181.1 412.2,180.7 416.5,181.9 420.8,182.6 425.0,182.7 429.2,182.7 433.5,182.3 437.8,181.1 442.0,181.7 446.2,181.9 450.5,181.8 454.8,180.9 459.0,180.7 463.2,181.1 467.5,179.6 471.8,178.8 476.0,178.4 480.2,178.8 484.5,178.5 488.8,179.7 493.0,180.6 497.2,180.1 501.5,179.9 505.8,179.4 510.0,179.7 514.2,180.4 518.5,180.3 522.8,180.9 527.0,180.2 531.2,180.3 535.5,180.3 539.8,180.2 544.0,179.4 548.2,180.0 552.5,180.6 556.8,181.4 561.0,182.1 565.2,181.7 569.5,181.8 573.8,181.0 578.0,181.1 582.2,181.1 586.5,181.1 590.8,181.3 595.0,181.4 599.2,181.6 603.5,181.4 607.8,180.6 612.0,181.1 616.2,181.3 620.5,180.8 624.8,180.1 629.0,179.9 633.2,179.7 637.5,179.8 641.8,180.4 646.0,181.2 650.2,181.3 654.5,181.4 658.8,181.1 663.0,180.8 667.2,180.4 671.5,181.0 675.8,180.9 680.0,180.5 684.2,180.5 688.5,180.4 692.8,179.5 697.0,178.7 701.2,178.7 705.5,179.6 709.8,179.4 714.0,179.6 718.2,180.2 722.5,181.0 726.8,181.0 731.0,181.4 735.2,180.9 739.5,180.5 743.8,179.5 748.0,180.1 752.2,180.5 756.5,181.8 760.8,181.1 765.0,180.8 769.2,180.1 773.5,180.3 777.8,180.5 782.0,181.2 786.2,181.1 790.5,180.9 794.8,180.5 799.0,180.7 803.2,180.5 807.5,181.0 811.8,180.5 816.0,180.5 820.2,180.4 824.5,180.8 828.8,181.0 833.0,181.0 837.2,179.9 841.5,180.3 845.8,179.8 850.0,178.9 854.2,178.6 858.5,178.7 862.8,178.6 867.0,178.0 871.2,178.5 875.5,178.2 879.8,177.6 884.0,176.9 888.2,177.4 892.5,178.1 896.8,178.6 901.0,178.7 905.2,178.4 909.5,177.6 913.8,177.9 918.0,177.7 922.2,178.6 926.5,178.9 930.8,178.1 935.0,177.8 939.2,178.2 943.5,178.3 947.8,178.8 952.0,179.0 956.2,179.0 960.5,178.7 964.8,179.3 969.0,179.0 973.2,179.1 977.5,179.5 981.8,179.5 986.0,179.3 990.2,179.4 994.5,178.0 998.8,177.3 1003.0,176.6 1007.2,175.9 1011.5,175.7 1015.8,175.2 1020.0,175.1 1024.2,174.4 1028.5,173.5 1032.8,172.9 1037.0,172.0 1041.2,171.2 1045.5,170.3 1049.8,169.6 1054.0,169.2 1058.2,167.7 1062.5,167.1 1066.8,165.9 1071.0,165.0 1075.2,164.5 1079.5,164.8 1083.8,165.6 1088.0,166.6 1092.2,167.6 1096.5,167.5 1100.8,167.6 1105.0,167.2 1109.2,166.7 1113.5,167.3 1117.8,166.4 1122.0,166.6 1126.2,165.9 1130.5,165.5 1134.8,164.9 1139.0,164.8 1143.2,163.6 1147.5,162.8 1151.8,162.4 1156.0,162.3 1160.2,162.1 1164.5,162.2 1168.8,162.2 1173.0,161.5 1177.2,160.6 1181.5,160.3 1185.8,159.5 1190.0,159.8 1194.2,160.5 1198.5,161.3 1202.8,161.1 1207.0,161.6 1211.2,161.6 1215.5,161.5 1219.8,162.8 1223.6,162.7' fill='none' stroke='#73bf69' stroke-width='1.3' stroke-linejoin='round'/><polyline points='0.0,179.2 4.2,179.3 8.5,179.3 12.8,179.2 17.0,179.1 21.2,179.0 25.5,180.5 29.8,180.8 34.0,180.6 38.2,180.7 42.5,179.8 46.8,179.3 51.0,179.0 55.2,179.3 59.5,180.7 63.8,180.9 68.0,181.1 72.2,180.8 76.5,180.2 80.8,179.3 85.0,179.1 89.2,179.1 93.5,179.0 97.8,180.1 102.0,180.8 106.2,180.6 110.5,180.9 114.8,180.0 119.0,179.0 123.2,179.2 127.5,179.1 131.8,179.1 136.0,179.8 140.2,181.1 144.5,181.1 148.8,180.9 153.0,180.3 157.2,179.2 161.5,179.0 165.8,178.9 170.0,179.1 174.2,179.1 178.5,179.9 182.8,180.6 187.0,180.5 191.2,180.6 195.5,180.1 199.8,179.3 204.0,179.3 208.2,179.3 212.5,179.2 216.8,179.2 221.0,180.7 225.2,180.8 229.5,180.9 233.8,180.6 238.0,179.5 242.2,179.3 246.5,179.3 250.8,179.1 255.0,180.5 259.2,181.0 263.5,181.2 267.8,180.6 272.0,179.0 276.2,179.2 280.5,178.9 284.8,178.8 289.0,179.1 293.2,179.9 297.5,179.8 301.8,180.9 306.0,180.1 310.2,179.7 314.5,178.8 318.8,178.7 323.0,179.2 327.2,178.5 331.5,180.6 335.8,181.2 340.0,182.0 344.2,182.4 348.5,182.2 352.8,181.6 357.0,180.7 361.2,179.8 365.5,179.6 369.8,179.9 374.0,180.4 378.2,179.8 382.5,180.4 386.8,181.1 391.0,180.6 395.2,179.4 399.5,180.0 403.8,180.1 408.0,179.8 412.2,179.7 416.5,180.4 420.8,180.4 425.0,181.3 429.2,179.9 433.5,179.4 437.8,178.6 442.0,179.3 446.2,180.2 450.5,181.3 454.8,181.7 459.0,181.3 463.2,180.8 467.5,179.6 471.8,180.1 476.0,179.0 480.2,179.2 484.5,180.6 488.8,181.0 493.0,181.0 497.2,180.0 501.5,179.0 505.8,178.2 510.0,178.9 514.2,179.5 518.5,180.3 522.8,180.3 527.0,179.7 531.2,179.3 535.5,179.2 539.8,178.6 544.0,178.5 548.2,178.9 552.5,179.3 556.8,180.5 561.0,181.8 565.2,182.1 569.5,181.9 573.8,181.5 578.0,180.7 582.2,179.3 586.5,178.7 590.8,178.8 595.0,178.4 599.2,179.0 603.5,179.0 607.8,179.1 612.0,179.6 616.2,179.8 620.5,180.1 624.8,178.9 629.0,179.4 633.2,179.8 637.5,179.5 641.8,179.5 646.0,179.3 650.2,178.7 654.5,177.9 658.8,178.1 663.0,177.7 667.2,177.7 671.5,179.2 675.8,179.8 680.0,179.0 684.2,179.0 688.5,177.9 692.8,178.0 697.0,178.3 701.2,177.7 705.5,177.7 709.8,177.7 714.0,178.3 718.2,179.3 722.5,180.3 726.8,179.4 731.0,178.6 735.2,177.7 739.5,177.4 743.8,178.4 748.0,178.6 752.2,178.8 756.5,179.2 760.8,179.3 765.0,178.8 769.2,179.2 773.5,179.1 777.8,175.0 782.0,170.9 786.2,168.8 790.5,169.6 794.8,169.7 799.0,170.3 803.2,171.9 807.5,173.4 811.8,174.4 816.0,172.8 820.2,172.3 824.5,171.8 828.8,170.8 833.0,169.4 837.2,168.6 841.5,167.1 845.8,166.6 850.0,164.9 854.2,164.8 858.5,163.8 862.8,164.4 867.0,164.5 871.2,165.0 875.5,165.0 879.8,163.0 884.0,161.1 888.2,160.9 892.5,159.1 896.8,158.3 901.0,157.5 905.2,155.2 909.5,157.1 913.8,157.9 918.0,159.6 922.2,158.8 926.5,155.8 930.8,152.6 935.0,148.8 939.2,149.3 943.5,152.7 947.8,155.8 952.0,152.8 956.2,150.7 960.5,147.4 964.8,144.7 969.0,143.5 973.2,144.1 977.5,145.3 981.8,145.6 986.0,146.2 990.2,147.5 994.5,147.3 998.8,147.3 1003.0,147.2 1007.2,146.8 1011.5,146.7 1015.8,145.9 1020.0,145.1 1024.2,144.6 1028.5,144.7 1032.8,146.5 1037.0,147.9 1041.2,149.2 1045.5,151.4 1049.8,153.0 1054.0,154.7 1058.2,156.9 1062.5,158.7 1066.8,159.0 1071.0,158.6 1075.2,157.8 1079.5,157.2 1083.8,159.7 1088.0,161.8 1092.2,164.0 1096.5,165.5 1100.8,165.7 1105.0,166.2 1109.2,165.6 1113.5,166.2 1117.8,166.8 1122.0,166.6 1126.2,167.2 1130.5,166.8 1134.8,168.3 1139.0,169.3 1143.2,169.7 1147.5,169.8 1151.8,170.3 1156.0,171.7 1160.2,172.7 1164.5,172.6 1168.8,173.0 1173.0,173.1 1177.2,173.5 1181.5,174.5 1185.8,174.7 1190.0,175.3 1194.2,174.4 1198.5,175.3 1202.8,175.9 1207.0,175.2 1211.2,175.3 1215.5,175.1 1219.8,175.5 1223.6,175.5' fill='none' stroke='#b877d9' stroke-width='1.4' stroke-linejoin='round'/><polyline points='0.0,181.6 4.2,181.2 8.5,181.0 12.8,181.0 17.0,181.0 21.2,181.4 25.5,181.7 29.8,182.3 34.0,182.7 38.2,182.3 42.5,182.3 46.8,181.6 51.0,181.4 55.2,181.1 59.5,181.3 63.8,182.3 68.0,182.5 72.2,182.3 76.5,182.4 80.8,181.8 85.0,181.3 89.2,181.3 93.5,181.2 97.8,181.4 102.0,182.0 106.2,182.7 110.5,182.6 114.8,182.6 119.0,181.8 123.2,181.3 127.5,181.6 131.8,181.6 136.0,181.6 140.2,182.3 144.5,182.5 148.8,182.4 153.0,182.5 157.2,181.9 161.5,181.2 165.8,181.3 170.0,181.3 174.2,181.2 178.5,181.2 182.8,182.0 187.0,182.6 191.2,182.5 195.5,182.6 199.8,181.8 204.0,181.4 208.2,181.5 212.5,181.5 216.8,181.2 221.0,181.5 225.2,182.4 229.5,182.5 233.8,182.2 238.0,182.3 242.2,181.4 246.5,181.4 250.8,181.5 255.0,182.1 259.2,182.3 263.5,182.4 267.8,182.6 272.0,181.9 276.2,181.4 280.5,181.2 284.8,180.6 289.0,180.4 293.2,180.8 297.5,181.1 301.8,181.1 306.0,181.5 310.2,182.3 314.5,182.3 318.8,181.2 323.0,181.5 327.2,181.9 331.5,181.5 335.8,182.8 340.0,183.1 344.2,182.8 348.5,182.5 352.8,182.1 357.0,181.9 361.2,181.0 365.5,180.4 369.8,180.4 374.0,181.4 378.2,182.7 382.5,182.6 386.8,182.0 391.0,182.7 395.2,181.5 399.5,181.7 403.8,182.0 408.0,181.9 412.2,182.1 416.5,183.1 420.8,183.1 425.0,183.3 429.2,183.6 433.5,183.3 437.8,182.3 442.0,182.3 446.2,181.6 450.5,183.0 454.8,183.1 459.0,182.6 463.2,182.0 467.5,180.7 471.8,180.2 476.0,179.6 480.2,180.3 484.5,180.7 488.8,181.7 493.0,181.5 497.2,182.3 501.5,181.9 505.8,180.5 510.0,180.7 514.2,181.3 518.5,181.6 522.8,183.4 527.0,182.6 531.2,182.0 535.5,181.8 539.8,182.1 544.0,181.1 548.2,180.5 552.5,181.1 556.8,180.5 561.0,180.7 565.2,182.3 569.5,182.2 573.8,181.9 578.0,181.6 582.2,181.2 586.5,180.7 590.8,181.4 595.0,181.2 599.2,181.1 603.5,181.3 607.8,181.6 612.0,181.8 616.2,182.2 620.5,182.9 624.8,181.9 629.0,181.6 633.2,181.6 637.5,181.0 641.8,180.5 646.0,181.3 650.2,181.7 654.5,181.1 658.8,180.1 663.0,179.5 667.2,179.9 671.5,180.6 675.8,181.4 680.0,181.9 684.2,181.2 688.5,181.0 692.8,179.7 697.0,179.3 701.2,179.1 705.5,179.5 709.8,179.8 714.0,180.8 718.2,181.6 722.5,181.9 726.8,182.0 731.0,181.7 735.2,180.3 739.5,179.8 743.8,180.1 748.0,180.9 752.2,181.4 756.5,182.1 760.8,181.4 765.0,181.4 769.2,181.2 773.5,180.7 777.8,181.3 782.0,180.9 786.2,181.7 790.5,182.2 794.8,181.2 799.0,181.8 803.2,181.9 807.5,182.3 811.8,181.5 816.0,181.0 820.2,181.5 824.5,181.6 828.8,180.5 833.0,179.6 837.2,178.7 841.5,177.0 845.8,176.2 850.0,175.1 854.2,173.9 858.5,172.8 862.8,172.2 867.0,172.1 871.2,171.6 875.5,171.6 879.8,172.4 884.0,171.6 888.2,171.6 892.5,172.5 896.8,172.3 901.0,172.1 905.2,172.2 909.5,172.1 913.8,171.7 918.0,172.4 922.2,172.5 926.5,171.3 930.8,170.0 935.0,168.9 939.2,168.7 943.5,168.3 947.8,167.4 952.0,167.4 956.2,166.4 960.5,166.6 964.8,166.4 969.0,165.6 973.2,165.4 977.5,164.1 981.8,163.5 986.0,161.9 990.2,160.7 994.5,159.5 998.8,158.1 1003.0,157.6 1007.2,156.7 1011.5,155.3 1015.8,157.2 1020.0,160.5 1024.2,162.4 1028.5,164.7 1032.8,164.2 1037.0,164.0 1041.2,162.8 1045.5,162.2 1049.8,161.0 1054.0,159.7 1058.2,159.5 1062.5,161.4 1066.8,162.1 1071.0,163.9 1075.2,165.0 1079.5,165.4 1083.8,166.8 1088.0,167.7 1092.2,168.4 1096.5,168.6 1100.8,169.1 1105.0,169.0 1109.2,169.7 1113.5,170.4 1117.8,170.5 1122.0,171.4 1126.2,172.7 1130.5,173.6 1134.8,173.9 1139.0,173.3 1143.2,173.8 1147.5,173.7 1151.8,174.7 1156.0,175.3 1160.2,175.1 1164.5,174.6 1168.8,175.8 1173.0,175.8 1177.2,176.6 1181.5,176.9 1185.8,176.7 1190.0,177.1 1194.2,176.6 1198.5,177.2 1202.8,177.5 1207.0,177.4 1211.2,176.9 1215.5,176.0 1219.8,175.9 1223.6,175.7' fill='none' stroke='#8ab8ff' stroke-width='1.3' stroke-linejoin='round'/><polyline points='0.0,175.5 4.2,175.1 8.5,174.9 12.8,175.1 17.0,175.3 21.2,175.3 25.5,177.3 29.8,177.9 34.0,177.9 38.2,177.7 42.5,176.1 46.8,175.3 51.0,175.2 55.2,175.3 59.5,177.0 63.8,177.7 68.0,178.1 72.2,177.8 76.5,177.1 80.8,175.6 85.0,175.8 89.2,175.8 93.5,175.4 97.8,176.8 102.0,178.2 106.2,178.0 110.5,178.0 114.8,176.9 119.0,175.3 123.2,175.5 127.5,175.4 131.8,175.2 136.0,176.4 140.2,178.1 144.5,177.8 148.8,178.2 153.0,177.6 157.2,175.8 161.5,175.5 165.8,175.1 170.0,175.4 174.2,175.8 178.5,176.9 182.8,178.4 187.0,177.9 191.2,178.3 195.5,177.0 199.8,175.5 204.0,175.4 208.2,175.3 212.5,175.5 216.8,175.2 221.0,176.7 225.2,177.9 229.5,178.2 233.8,177.8 238.0,176.4 242.2,175.6 246.5,175.1 250.8,175.7 255.0,177.5 259.2,177.9 263.5,178.1 267.8,177.0 272.0,175.2 276.2,175.5 280.5,175.3 284.8,175.8 289.0,175.8 293.2,177.9 297.5,179.2 301.8,178.3 306.0,177.9 310.2,177.7 314.5,176.0 318.8,175.6 323.0,176.1 327.2,176.1 331.5,177.3 335.8,178.6 340.0,178.1 344.2,178.3 348.5,178.7 352.8,178.5 357.0,177.5 361.2,176.5 365.5,175.7 369.8,175.7 374.0,178.0 378.2,178.2 382.5,178.8 386.8,178.5 391.0,177.2 395.2,176.0 399.5,175.4 403.8,175.2 408.0,175.3 412.2,177.0 416.5,178.9 420.8,178.5 425.0,178.3 429.2,178.1 433.5,176.2 437.8,175.3 442.0,175.4 446.2,176.8 450.5,178.2 454.8,177.2 459.0,177.4 463.2,176.8 467.5,174.5 471.8,174.9 476.0,174.8 480.2,174.6 484.5,176.2 488.8,176.5 493.0,177.0 497.2,176.0 501.5,174.2 505.8,173.4 510.0,173.9 514.2,173.9 518.5,176.5 522.8,176.3 527.0,175.9 531.2,175.1 535.5,174.9 539.8,173.3 544.0,172.2 548.2,172.0 552.5,172.9 556.8,173.1 561.0,175.8 565.2,176.2 569.5,176.7 573.8,175.9 578.0,176.2 582.2,174.6 586.5,172.9 590.8,172.7 595.0,172.3 599.2,175.0 603.5,176.6 607.8,175.8 612.0,175.8 616.2,176.7 620.5,175.5 624.8,174.2 629.0,174.5 633.2,173.7 637.5,173.7 641.8,175.7 646.0,175.7 650.2,174.9 654.5,173.4 658.8,173.1 663.0,173.3 667.2,174.6 671.5,176.9 675.8,176.8 680.0,176.0 684.2,176.6 688.5,174.6 692.8,174.3 697.0,173.8 701.2,173.4 705.5,174.1 709.8,174.7 714.0,176.8 718.2,176.6 722.5,176.5 726.8,176.3 731.0,175.1 735.2,173.1 739.5,173.1 743.8,173.9 748.0,174.4 752.2,175.4 756.5,176.9 760.8,176.8 765.0,176.3 769.2,175.5 773.5,175.3 777.8,175.5 782.0,175.5 786.2,176.0 790.5,176.4 794.8,176.6 799.0,177.0 803.2,177.1 807.5,177.3 811.8,176.5 816.0,176.6 820.2,175.8 824.5,175.3 828.8,175.6 833.0,175.8 837.2,175.8 841.5,175.5 845.8,175.6 850.0,175.0 854.2,175.5 858.5,174.7 862.8,174.3 867.0,174.5 871.2,174.6 875.5,174.8 879.8,174.4 884.0,174.4 888.2,174.3 892.5,174.8 896.8,175.1 901.0,174.2 905.2,173.8 909.5,174.0 913.8,173.6 918.0,173.8 922.2,174.2 926.5,174.6 930.8,173.9 935.0,174.3 939.2,173.9 943.5,174.4 947.8,174.4 952.0,173.5 956.2,174.0 960.5,174.1 964.8,173.3 969.0,173.8 973.2,173.8 977.5,173.7 981.8,173.0 986.0,173.4 990.2,173.0 994.5,172.8 998.8,172.7 1003.0,171.1 1007.2,170.5 1011.5,170.5 1015.8,170.7 1020.0,170.0 1024.2,170.0 1028.5,170.0 1032.8,169.9 1037.0,168.9 1041.2,169.3 1045.5,168.8 1049.8,168.3 1054.0,168.5 1058.2,167.5 1062.5,167.7 1066.8,167.4 1071.0,167.3 1075.2,166.5 1079.5,167.8 1083.8,168.0 1088.0,169.3 1092.2,169.9 1096.5,170.4 1100.8,170.5 1105.0,170.2 1109.2,168.8 1113.5,167.9 1117.8,167.1 1122.0,166.1 1126.2,165.5 1130.5,164.2 1134.8,163.2 1139.0,162.7 1143.2,162.3 1147.5,161.7 1151.8,161.1 1156.0,161.4 1160.2,161.1 1164.5,160.9 1168.8,161.5 1173.0,161.2 1177.2,161.0 1181.5,161.4 1185.8,161.6 1190.0,162.5 1194.2,162.8 1198.5,163.1 1202.8,162.9 1207.0,163.1 1211.2,162.4 1215.5,162.5 1219.8,162.4 1223.6,163.0' fill='none' stroke='#ff9830' stroke-width='1.4' stroke-linejoin='round'/><polyline points='0.0,177.1 4.2,177.1 8.5,177.5 12.8,177.3 17.0,177.5 21.2,177.2 25.5,178.7 29.8,179.0 34.0,179.0 38.2,179.0 42.5,177.9 46.8,176.9 51.0,177.2 55.2,177.1 59.5,178.7 63.8,179.3 68.0,178.9 72.2,179.1 76.5,177.8 80.8,176.5 85.0,176.5 89.2,176.7 93.5,176.7 97.8,177.8 102.0,179.1 106.2,179.0 110.5,178.9 114.8,178.2 119.0,177.0 123.2,177.0 127.5,177.2 131.8,177.2 136.0,178.5 140.2,179.5 144.5,179.6 148.8,179.9 153.0,179.1 157.2,177.9 161.5,177.5 165.8,177.3 170.0,177.5 174.2,177.3 178.5,178.2 182.8,179.1 187.0,179.1 191.2,179.1 195.5,178.5 199.8,177.3 204.0,177.2 208.2,177.3 212.5,176.9 216.8,177.1 221.0,178.4 225.2,179.2 229.5,178.8 233.8,179.0 238.0,177.9 242.2,177.1 246.5,177.0 250.8,177.6 255.0,179.2 259.2,179.2 263.5,179.0 267.8,178.6 272.0,176.9 276.2,177.0 280.5,177.2 284.8,177.6 289.0,178.2 293.2,179.8 297.5,180.6 301.8,180.8 306.0,179.6 310.2,179.2 314.5,176.9 318.8,176.1 323.0,175.6 327.2,175.3 331.5,176.7 335.8,177.7 340.0,178.1 344.2,178.7 348.5,179.1 352.8,179.2 357.0,177.8 361.2,177.0 365.5,177.3 369.8,177.2 374.0,179.0 378.2,178.9 382.5,178.6 386.8,178.2 391.0,178.2 395.2,177.4 399.5,177.6 403.8,177.7 408.0,177.8 412.2,178.0 416.5,178.4 420.8,178.0 425.0,178.7 429.2,178.9 433.5,177.9 437.8,177.1 442.0,176.6 446.2,177.1 450.5,178.0 454.8,177.9 459.0,177.3 463.2,177.0 467.5,176.5 471.8,175.9 476.0,176.4 480.2,176.1 484.5,177.8 488.8,178.2 493.0,178.9 497.2,178.6 501.5,177.8 505.8,177.9 510.0,177.6 514.2,176.9 518.5,178.5 522.8,179.3 527.0,178.4 531.2,179.2 535.5,178.0 539.8,177.3 544.0,176.9 548.2,177.2 552.5,177.1 556.8,176.9 561.0,177.5 565.2,176.8 569.5,176.8 573.8,177.2 578.0,176.6 582.2,175.2 586.5,174.0 590.8,174.6 595.0,174.9 599.2,177.0 603.5,177.7 607.8,178.1 612.0,178.5 616.2,177.9 620.5,177.7 624.8,176.5 629.0,176.2 633.2,175.3 637.5,176.0 641.8,177.4 646.0,178.5 650.2,178.3 654.5,177.3 658.8,176.7 663.0,176.4 667.2,177.1 671.5,178.9 675.8,178.9 680.0,179.4 684.2,178.9 688.5,177.6 692.8,176.9 697.0,177.1 701.2,177.0 705.5,176.6 709.8,176.0 714.0,177.2 718.2,177.4 722.5,177.1 726.8,177.8 731.0,176.1 735.2,175.0 739.5,174.5 743.8,174.5 748.0,175.5 752.2,175.4 756.5,176.7 760.8,176.7 765.0,176.5 769.2,176.5 773.5,177.1 777.8,178.0 782.0,178.0 786.2,178.3 790.5,178.2 794.8,178.5 799.0,177.8 803.2,178.3 807.5,177.4 811.8,177.1 816.0,176.1 820.2,173.4 824.5,170.1 828.8,169.0 833.0,168.9 837.2,167.7 841.5,167.4 845.8,166.9 850.0,165.1 854.2,164.2 858.5,166.3 862.8,168.5 867.0,168.0 871.2,168.2 875.5,168.0 879.8,167.7 884.0,167.9 888.2,167.7 892.5,168.0 896.8,168.3 901.0,168.5 905.2,167.8 909.5,167.7 913.8,167.8 918.0,167.6 922.2,164.3 926.5,160.7 930.8,156.1 935.0,159.2 939.2,161.9 943.5,163.2 947.8,161.4 952.0,160.0 956.2,157.3 960.5,155.3 964.8,153.6 969.0,152.3 973.2,155.8 977.5,159.2 981.8,162.7 986.0,161.8 990.2,160.2 994.5,158.4 998.8,156.9 1003.0,156.9 1007.2,156.6 1011.5,156.4 1015.8,154.9 1020.0,153.6 1024.2,152.7 1028.5,153.2 1032.8,151.9 1037.0,152.0 1041.2,151.1 1045.5,150.6 1049.8,153.6 1054.0,156.3 1058.2,159.4 1062.5,159.1 1066.8,158.7 1071.0,158.7 1075.2,158.3 1079.5,158.1 1083.8,160.2 1088.0,161.4 1092.2,163.1 1096.5,163.9 1100.8,163.5 1105.0,163.8 1109.2,163.0 1113.5,163.3 1117.8,162.7 1122.0,162.3 1126.2,161.4 1130.5,161.6 1134.8,160.8 1139.0,160.9 1143.2,159.9 1147.5,160.1 1151.8,161.2 1156.0,161.2 1160.2,162.0 1164.5,162.0 1168.8,162.9 1173.0,163.3 1177.2,163.2 1181.5,164.0 1185.8,164.6 1190.0,164.9 1194.2,164.6 1198.5,164.6 1202.8,164.7 1207.0,165.0 1211.2,164.1 1215.5,164.4 1219.8,164.0 1223.6,164.0' fill='none' stroke='#e0b400' stroke-width='1.3' stroke-linejoin='round'/><polyline points='0.0,182.5 4.2,182.5 8.5,182.3 12.8,182.7 17.0,182.7 21.2,182.4 25.5,182.2 29.8,182.6 34.0,183.5 38.2,183.5 42.5,183.2 46.8,183.3 51.0,182.9 55.2,182.7 59.5,182.7 63.8,183.2 68.0,183.8 72.2,183.7 76.5,183.5 80.8,182.9 85.0,182.4 89.2,182.7 93.5,182.9 97.8,182.4 102.0,182.6 106.2,183.5 110.5,183.2 114.8,183.2 119.0,183.3 123.2,182.3 127.5,182.2 131.8,182.4 136.0,182.5 140.2,182.6 144.5,183.4 148.8,183.6 153.0,183.3 157.2,183.4 161.5,183.0 165.8,182.8 170.0,182.8 174.2,182.9 178.5,182.9 182.8,183.0 187.0,183.4 191.2,183.1 195.5,183.3 199.8,183.3 204.0,182.4 208.2,182.3 212.5,182.6 216.8,182.4 221.0,182.8 225.2,183.2 229.5,183.2 233.8,183.5 238.0,183.5 242.2,182.9 246.5,182.3 250.8,182.2 255.0,182.1 259.2,182.9 263.5,183.0 267.8,183.3 272.0,183.2 276.2,182.8 280.5,182.5 284.8,182.1 289.0,182.4 293.2,182.2 297.5,183.2 301.8,183.2 306.0,182.5 310.2,183.2 314.5,183.1 318.8,182.1 323.0,181.6 327.2,181.2 331.5,181.8 335.8,182.6 340.0,183.0 344.2,182.1 348.5,183.0 352.8,182.4 357.0,183.3 361.2,183.3 365.5,182.1 369.8,182.5 374.0,182.5 378.2,183.7 382.5,183.0 386.8,183.8 391.0,183.1 395.2,183.5 399.5,182.3 403.8,182.1 408.0,182.4 412.2,182.3 416.5,182.1 420.8,183.2 425.0,182.7 429.2,182.9 433.5,182.8 437.8,181.7 442.0,180.7 446.2,180.9 450.5,181.1 454.8,181.9 459.0,182.7 463.2,182.6 467.5,182.6 471.8,181.6 476.0,181.0 480.2,180.8 484.5,181.2 488.8,181.1 493.0,182.1 497.2,182.5 501.5,183.0 505.8,182.9 510.0,183.1 514.2,183.6 518.5,183.9 522.8,183.5 527.0,183.4 531.2,183.5 535.5,184.1 539.8,183.9 544.0,182.9 548.2,182.8 552.5,183.1 556.8,183.5 561.0,183.2 565.2,183.2 569.5,183.1 573.8,182.5 578.0,182.2 582.2,183.1 586.5,181.9 590.8,181.7 595.0,181.0 599.2,181.6 603.5,182.6 607.8,183.4 612.0,182.8 616.2,182.9 620.5,183.7 624.8,182.8 629.0,182.2 633.2,181.8 637.5,182.4 641.8,182.8 646.0,183.9 650.2,183.2 654.5,182.8 658.8,182.8 663.0,181.2 667.2,181.1 671.5,181.4 675.8,182.7 680.0,183.0 684.2,183.1 688.5,183.6 692.8,182.8 697.0,182.6 701.2,182.4 705.5,182.4 709.8,181.9 714.0,181.5 718.2,181.3 722.5,182.1 726.8,182.9 731.0,183.5 735.2,183.6 739.5,182.6 743.8,182.4 748.0,182.8 752.2,183.0 756.5,182.3 760.8,183.0 765.0,182.3 769.2,182.5 773.5,182.6 777.8,182.3 782.0,182.9 786.2,182.2 790.5,182.7 794.8,182.6 799.0,183.0 803.2,182.8 807.5,183.0 811.8,183.0 816.0,181.5 820.2,177.1 824.5,173.2 828.8,171.2 833.0,171.4 837.2,171.4 841.5,170.7 845.8,170.6 850.0,170.7 854.2,170.6 858.5,171.8 862.8,172.0 867.0,171.3 871.2,172.0 875.5,172.1 879.8,171.2 884.0,170.9 888.2,168.0 892.5,165.4 896.8,163.8 901.0,162.1 905.2,161.4 909.5,159.7 913.8,158.2 918.0,156.6 922.2,157.4 926.5,159.0 930.8,158.7 935.0,156.4 939.2,154.4 943.5,152.6 947.8,151.5 952.0,151.7 956.2,153.5 960.5,154.1 964.8,155.3 969.0,155.3 973.2,154.9 977.5,154.2 981.8,151.9 986.0,150.3 990.2,148.6 994.5,146.6 998.8,144.6 1003.0,143.8 1007.2,141.9 1011.5,141.6 1015.8,145.0 1020.0,148.3 1024.2,145.0 1028.5,142.0 1032.8,139.4 1037.0,137.0 1041.2,134.4 1045.5,134.9 1049.8,136.2 1054.0,137.1 1058.2,137.3 1062.5,142.1 1066.8,147.0 1071.0,151.2 1075.2,153.4 1079.5,156.1 1083.8,155.2 1088.0,154.5 1092.2,154.6 1096.5,157.1 1100.8,158.9 1105.0,160.2 1109.2,162.0 1113.5,159.3 1117.8,155.2 1122.0,154.0 1126.2,155.7 1130.5,155.6 1134.8,153.9 1139.0,153.0 1143.2,152.6 1147.5,151.8 1151.8,149.8 1156.0,150.2 1160.2,151.4 1164.5,151.7 1168.8,152.0 1173.0,152.9 1177.2,153.4 1181.5,154.1 1185.8,154.7 1190.0,155.8 1194.2,156.7 1198.5,156.9 1202.8,157.1 1207.0,157.5 1211.2,157.3 1215.5,158.5 1219.8,160.3 1223.6,162.1' fill='none' stroke='#5794f2' stroke-width='1.4' stroke-linejoin='round'/></svg><svg style='left:0;top:0' width='1' height='1'><g transform='translate(110.53,323.20) scale(0.00464,-0.00497)' fill='#c7c8d0' stroke='#c7c8d0' stroke-width='0.35' stroke-linejoin='round'><path transform='translate(0,0)' d='M1059 705Q1059 352 934.5 166.0Q810 -20 567 -20Q324 -20 202.0 165.0Q80 350 80 705Q80 1068 198.5 1249.0Q317 1430 573 1430Q822 1430 940.5 1247.0Q1059 1064 1059 705ZM876 705Q876 1010 805.5 1147.0Q735 1284 573 1284Q407 1284 334.5 1149.0Q262 1014 262 705Q262 405 335.5 266.0Q409 127 569 127Q728 127 802.0 269.0Q876 411 876 705Z' vector-effect='non-scaling-stroke'/><path transform='translate(1139,0)' d='M1049 389Q1049 194 925.0 87.0Q801 -20 571 -20Q357 -20 229.5 76.5Q102 173 78 362L264 379Q300 129 571 129Q707 129 784.5 196.0Q862 263 862 395Q862 510 773.5 574.5Q685 639 518 639H416V795H514Q662 795 743.5 859.5Q825 924 825 1038Q825 1151 758.5 1216.5Q692 1282 561 1282Q442 1282 368.5 1221.0Q295 1160 283 1049L102 1063Q122 1236 245.5 1333.0Q369 1430 563 1430Q775 1430 892.5 1331.5Q1010 1233 1010 1057Q1010 922 934.5 837.5Q859 753 715 723V719Q873 702 961.0 613.0Q1049 524 1049 389Z' vector-effect='non-scaling-stroke'/><path transform='translate(2278,0)' d='M187 875V1082H382V875ZM187 0V207H382V0Z' vector-effect='non-scaling-stroke'/><path transform='translate(2847,0)' d='M156 0V153H515V1237L197 1010V1180L530 1409H696V153H1039V0Z' vector-effect='non-scaling-stroke'/><path transform='translate(3986,0)' d='M1053 459Q1053 236 920.5 108.0Q788 -20 553 -20Q356 -20 235.0 66.0Q114 152 82 315L264 336Q321 127 557 127Q702 127 784.0 214.5Q866 302 866 455Q866 588 783.5 670.0Q701 752 561 752Q488 752 425.0 729.0Q362 706 299 651H123L170 1409H971V1256H334L307 809Q424 899 598 899Q806 899 929.5 777.0Q1053 655 1053 459Z' vector-effect='non-scaling-stroke'/></g></svg><svg style='left:0;top:0' width='1' height='1'><g transform='translate(161.53,323.20) scale(0.00463,-0.00497)' fill='#c7c8d0' stroke='#c7c8d0' stroke-width='0.35' stroke-linejoin='round'><path transform='translate(0,0)' d='M1059 705Q1059 352 934.5 166.0Q810 -20 567 -20Q324 -20 202.0 165.0Q80 350 80 705Q80 1068 198.5 1249.0Q317 1430 573 1430Q822 1430 940.5 1247.0Q1059 1064 1059 705ZM876 705Q876 1010 805.5 1147.0Q735 1284 573 1284Q407 1284 334.5 1149.0Q262 1014 262 705Q262 405 335.5 266.0Q409 127 569 127Q728 127 802.0 269.0Q876 411 876 705Z' vector-effect='non-scaling-stroke'/><path transform='translate(1139,0)' d='M1049 389Q1049 194 925.0 87.0Q801 -20 571 -20Q357 -20 229.5 76.5Q102 173 78 362L264 379Q300 129 571 129Q707 129 784.5 196.0Q862 263 862 395Q862 510 773.5 574.5Q685 639 518 639H416V795H514Q662 795 743.5 859.5Q825 924 825 1038Q825 1151 758.5 1216.5Q692 1282 561 1282Q442 1282 368.5 1221.0Q295 1160 283 1049L102 1063Q122 1236 245.5 1333.0Q369 1430 563 1430Q775 1430 892.5 1331.5Q1010 1233 1010 1057Q1010 922 934.5 837.5Q859 753 715 723V719Q873 702 961.0 613.0Q1049 524 1049 389Z' vector-effect='non-scaling-stroke'/><path transform='translate(2278,0)' d='M187 875V1082H382V875ZM187 0V207H382V0Z' vector-effect='non-scaling-stroke'/><path transform='translate(2847,0)' d='M1049 389Q1049 194 925.0 87.0Q801 -20 571 -20Q357 -20 229.5 76.5Q102 173 78 362L264 379Q300 129 571 129Q707 129 784.5 196.0Q862 263 862 395Q862 510 773.5 574.5Q685 639 518 639H416V795H514Q662 795 743.5 859.5Q825 924 825 1038Q825 1151 758.5 1216.5Q692 1282 561 1282Q442 1282 368.5 1221.0Q295 1160 283 1049L102 1063Q122 1236 245.5 1333.0Q369 1430 563 1430Q775 1430 892.5 1331.5Q1010 1233 1010 1057Q1010 922 934.5 837.5Q859 753 715 723V719Q873 702 961.0 613.0Q1049 524 1049 389Z' vector-effect='non-scaling-stroke'/><path transform='translate(3986,0)' d='M1059 705Q1059 352 934.5 166.0Q810 -20 567 -20Q324 -20 202.0 165.0Q80 350 80 705Q80 1068 198.5 1249.0Q317 1430 573 1430Q822 1430 940.5 1247.0Q1059 1064 1059 705ZM876 705Q876 1010 805.5 1147.0Q735 1284 573 1284Q407 1284 334.5 1149.0Q262 1014 262 705Q262 405 335.5 266.0Q409 127 569 127Q728 127 802.0 269.0Q876 411 876 705Z' vector-effect='non-scaling-stroke'/></g></svg><svg style='left:0;top:0' width='1' height='1'><g transform='translate(212.53,323.20) scale(0.00464,-0.00497)' fill='#c7c8d0' stroke='#c7c8d0' stroke-width='0.35' stroke-linejoin='round'><path transform='translate(0,0)' d='M1059 705Q1059 352 934.5 166.0Q810 -20 567 -20Q324 -20 202.0 165.0Q80 350 80 705Q80 1068 198.5 1249.0Q317 1430 573 1430Q822 1430 940.5 1247.0Q1059 1064 1059 705ZM876 705Q876 1010 805.5 1147.0Q735 1284 573 1284Q407 1284 334.5 1149.0Q262 1014 262 705Q262 405 335.5 266.0Q409 127 569 127Q728 127 802.0 269.0Q876 411 876 705Z' vector-effect='non-scaling-stroke'/><path transform='translate(1139,0)' d='M1049 389Q1049 194 925.0 87.0Q801 -20 571 -20Q357 -20 229.5 76.5Q102 173 78 362L264 379Q300 129 571 129Q707 129 784.5 196.0Q862 263 862 395Q862 510 773.5 574.5Q685 639 518 639H416V795H514Q662 795 743.5 859.5Q825 924 825 1038Q825 1151 758.5 1216.5Q692 1282 561 1282Q442 1282 368.5 1221.0Q295 1160 283 1049L102 1063Q122 1236 245.5 1333.0Q369 1430 563 1430Q775 1430 892.5 1331.5Q1010 1233 1010 1057Q1010 922 934.5 837.5Q859 753 715 723V719Q873 702 961.0 613.0Q1049 524 1049 389Z' vector-effect='non-scaling-stroke'/><path transform='translate(2278,0)' d='M187 875V1082H382V875ZM187 0V207H382V0Z' vector-effect='non-scaling-stroke'/><path transform='translate(2847,0)' d='M881 319V0H711V319H47V459L692 1409H881V461H1079V319ZM711 1206Q709 1200 683.0 1153.0Q657 1106 644 1087L283 555L229 481L213 461H711Z' vector-effect='non-scaling-stroke'/><path transform='translate(3986,0)' d='M1053 459Q1053 236 920.5 108.0Q788 -20 553 -20Q356 -20 235.0 66.0Q114 152 82 315L264 336Q321 127 557 127Q702 127 784.0 214.5Q866 302 866 455Q866 588 783.5 670.0Q701 752 561 752Q488 752 425.0 729.0Q362 706 299 651H123L170 1409H971V1256H334L307 809Q424 899 598 899Q806 899 929.5 777.0Q1053 655 1053 459Z' vector-effect='non-scaling-stroke'/></g></svg><svg style='left:0;top:0' width='1' height='1'><g transform='translate(263.53,323.20) scale(0.00463,-0.00497)' fill='#c7c8d0' stroke='#c7c8d0' stroke-width='0.35' stroke-linejoin='round'><path transform='translate(0,0)' d='M1059 705Q1059 352 934.5 166.0Q810 -20 567 -20Q324 -20 202.0 165.0Q80 350 80 705Q80 1068 198.5 1249.0Q317 1430 573 1430Q822 1430 940.5 1247.0Q1059 1064 1059 705ZM876 705Q876 1010 805.5 1147.0Q735 1284 573 1284Q407 1284 334.5 1149.0Q262 1014 262 705Q262 405 335.5 266.0Q409 127 569 127Q728 127 802.0 269.0Q876 411 876 705Z' vector-effect='non-scaling-stroke'/><path transform='translate(1139,0)' d='M881 319V0H711V319H47V459L692 1409H881V461H1079V319ZM711 1206Q709 1200 683.0 1153.0Q657 1106 644 1087L283 555L229 481L213 461H711Z' vector-effect='non-scaling-stroke'/><path transform='translate(2278,0)' d='M187 875V1082H382V875ZM187 0V207H382V0Z' vector-effect='non-scaling-stroke'/><path transform='translate(2847,0)' d='M1059 705Q1059 352 934.5 166.0Q810 -20 567 -20Q324 -20 202.0 165.0Q80 350 80 705Q80 1068 198.5 1249.0Q317 1430 573 1430Q822 1430 940.5 1247.0Q1059 1064 1059 705ZM876 705Q876 1010 805.5 1147.0Q735 1284 573 1284Q407 1284 334.5 1149.0Q262 1014 262 705Q262 405 335.5 266.0Q409 127 569 127Q728 127 802.0 269.0Q876 411 876 705Z' vector-effect='non-scaling-stroke'/><path transform='translate(3986,0)' d='M1059 705Q1059 352 934.5 166.0Q810 -20 567 -20Q324 -20 202.0 165.0Q80 350 80 705Q80 1068 198.5 1249.0Q317 1430 573 1430Q822 1430 940.5 1247.0Q1059 1064 1059 705ZM876 705Q876 1010 805.5 1147.0Q735 1284 573 1284Q407 1284 334.5 1149.0Q262 1014 262 705Q262 405 335.5 266.0Q409 127 569 127Q728 127 802.0 269.0Q876 411 876 705Z' vector-effect='non-scaling-stroke'/></g></svg><svg style='left:0;top:0' width='1' height='1'><g transform='translate(314.53,323.20) scale(0.00464,-0.00497)' fill='#c7c8d0' stroke='#c7c8d0' stroke-width='0.35' stroke-linejoin='round'><path transform='translate(0,0)' d='M1059 705Q1059 352 934.5 166.0Q810 -20 567 -20Q324 -20 202.0 165.0Q80 350 80 705Q80 1068 198.5 1249.0Q317 1430 573 1430Q822 1430 940.5 1247.0Q1059 1064 1059 705ZM876 705Q876 1010 805.5 1147.0Q735 1284 573 1284Q407 1284 334.5 1149.0Q262 1014 262 705Q262 405 335.5 266.0Q409 127 569 127Q728 127 802.0 269.0Q876 411 876 705Z' vector-effect='non-scaling-stroke'/><path transform='translate(1139,0)' d='M881 319V0H711V319H47V459L692 1409H881V461H1079V319ZM711 1206Q709 1200 683.0 1153.0Q657 1106 644 1087L283 555L229 481L213 461H711Z' vector-effect='non-scaling-stroke'/><path transform='translate(2278,0)' d='M187 875V1082H382V875ZM187 0V207H382V0Z' vector-effect='non-scaling-stroke'/><path transform='translate(2847,0)' d='M156 0V153H515V1237L197 1010V1180L530 1409H696V153H1039V0Z' vector-effect='non-scaling-stroke'/><path transform='translate(3986,0)' d='M1053 459Q1053 236 920.5 108.0Q788 -20 553 -20Q356 -20 235.0 66.0Q114 152 82 315L264 336Q321 127 557 127Q702 127 784.0 214.5Q866 302 866 455Q866 588 783.5 670.0Q701 752 561 752Q488 752 425.0 729.0Q362 706 299 651H123L170 1409H971V1256H334L307 809Q424 899 598 899Q806 899 929.5 777.0Q1053 655 1053 459Z' vector-effect='non-scaling-stroke'/></g></svg><svg style='left:0;top:0' width='1' height='1'><g transform='translate(365.53,323.20) scale(0.00463,-0.00497)' fill='#c7c8d0' stroke='#c7c8d0' stroke-width='0.35' stroke-linejoin='round'><path transform='translate(0,0)' d='M1059 705Q1059 352 934.5 166.0Q810 -20 567 -20Q324 -20 202.0 165.0Q80 350 80 705Q80 1068 198.5 1249.0Q317 1430 573 1430Q822 1430 940.5 1247.0Q1059 1064 1059 705ZM876 705Q876 1010 805.5 1147.0Q735 1284 573 1284Q407 1284 334.5 1149.0Q262 1014 262 705Q262 405 335.5 266.0Q409 127 569 127Q728 127 802.0 269.0Q876 411 876 705Z' vector-effect='non-scaling-stroke'/><path transform='translate(1139,0)' d='M881 319V0H711V319H47V459L692 1409H881V461H1079V319ZM711 1206Q709 1200 683.0 1153.0Q657 1106 644 1087L283 555L229 481L213 461H711Z' vector-effect='non-scaling-stroke'/><path transform='translate(2278,0)' d='M187 875V1082H382V875ZM187 0V207H382V0Z' vector-effect='non-scaling-stroke'/><path transform='translate(2847,0)' d='M1049 389Q1049 194 925.0 87.0Q801 -20 571 -20Q357 -20 229.5 76.5Q102 173 78 362L264 379Q300 129 571 129Q707 129 784.5 196.0Q862 263 862 395Q862 510 773.5 574.5Q685 639 518 639H416V795H514Q662 795 743.5 859.5Q825 924 825 1038Q825 1151 758.5 1216.5Q692 1282 561 1282Q442 1282 368.5 1221.0Q295 1160 283 1049L102 1063Q122 1236 245.5 1333.0Q369 1430 563 1430Q775 1430 892.5 1331.5Q1010 1233 1010 1057Q1010 922 934.5 837.5Q859 753 715 723V719Q873 702 961.0 613.0Q1049 524 1049 389Z' vector-effect='non-scaling-stroke'/><path transform='translate(3986,0)' d='M1059 705Q1059 352 934.5 166.0Q810 -20 567 -20Q324 -20 202.0 165.0Q80 350 80 705Q80 1068 198.5 1249.0Q317 1430 573 1430Q822 1430 940.5 1247.0Q1059 1064 1059 705ZM876 705Q876 1010 805.5 1147.0Q735 1284 573 1284Q407 1284 334.5 1149.0Q262 1014 262 705Q262 405 335.5 266.0Q409 127 569 127Q728 127 802.0 269.0Q876 411 876 705Z' vector-effect='non-scaling-stroke'/></g></svg><svg style='left:0;top:0' width='1' height='1'><g transform='translate(416.53,323.20) scale(0.00464,-0.00497)' fill='#c7c8d0' stroke='#c7c8d0' stroke-width='0.35' stroke-linejoin='round'><path transform='translate(0,0)' d='M1059 705Q1059 352 934.5 166.0Q810 -20 567 -20Q324 -20 202.0 165.0Q80 350 80 705Q80 1068 198.5 1249.0Q317 1430 573 1430Q822 1430 940.5 1247.0Q1059 1064 1059 705ZM876 705Q876 1010 805.5 1147.0Q735 1284 573 1284Q407 1284 334.5 1149.0Q262 1014 262 705Q262 405 335.5 266.0Q409 127 569 127Q728 127 802.0 269.0Q876 411 876 705Z' vector-effect='non-scaling-stroke'/><path transform='translate(1139,0)' d='M881 319V0H711V319H47V459L692 1409H881V461H1079V319ZM711 1206Q709 1200 683.0 1153.0Q657 1106 644 1087L283 555L229 481L213 461H711Z' vector-effect='non-scaling-stroke'/><path transform='translate(2278,0)' d='M187 875V1082H382V875ZM187 0V207H382V0Z' vector-effect='non-scaling-stroke'/><path transform='translate(2847,0)' d='M881 319V0H711V319H47V459L692 1409H881V461H1079V319ZM711 1206Q709 1200 683.0 1153.0Q657 1106 644 1087L283 555L229 481L213 461H711Z' vector-effect='non-scaling-stroke'/><path transform='translate(3986,0)' d='M1053 459Q1053 236 920.5 108.0Q788 -20 553 -20Q356 -20 235.0 66.0Q114 152 82 315L264 336Q321 127 557 127Q702 127 784.0 214.5Q866 302 866 455Q866 588 783.5 670.0Q701 752 561 752Q488 752 425.0 729.0Q362 706 299 651H123L170 1409H971V1256H334L307 809Q424 899 598 899Q806 899 929.5 777.0Q1053 655 1053 459Z' vector-effect='non-scaling-stroke'/></g></svg><svg style='left:0;top:0' width='1' height='1'><g transform='translate(467.53,323.20) scale(0.00463,-0.00497)' fill='#c7c8d0' stroke='#c7c8d0' stroke-width='0.35' stroke-linejoin='round'><path transform='translate(0,0)' d='M1059 705Q1059 352 934.5 166.0Q810 -20 567 -20Q324 -20 202.0 165.0Q80 350 80 705Q80 1068 198.5 1249.0Q317 1430 573 1430Q822 1430 940.5 1247.0Q1059 1064 1059 705ZM876 705Q876 1010 805.5 1147.0Q735 1284 573 1284Q407 1284 334.5 1149.0Q262 1014 262 705Q262 405 335.5 266.0Q409 127 569 127Q728 127 802.0 269.0Q876 411 876 705Z' vector-effect='non-scaling-stroke'/><path transform='translate(1139,0)' d='M1053 459Q1053 236 920.5 108.0Q788 -20 553 -20Q356 -20 235.0 66.0Q114 152 82 315L264 336Q321 127 557 127Q702 127 784.0 214.5Q866 302 866 455Q866 588 783.5 670.0Q701 752 561 752Q488 752 425.0 729.0Q362 706 299 651H123L170 1409H971V1256H334L307 809Q424 899 598 899Q806 899 929.5 777.0Q1053 655 1053 459Z' vector-effect='non-scaling-stroke'/><path transform='translate(2278,0)' d='M187 875V1082H382V875ZM187 0V207H382V0Z' vector-effect='non-scaling-stroke'/><path transform='translate(2847,0)' d='M1059 705Q1059 352 934.5 166.0Q810 -20 567 -20Q324 -20 202.0 165.0Q80 350 80 705Q80 1068 198.5 1249.0Q317 1430 573 1430Q822 1430 940.5 1247.0Q1059 1064 1059 705ZM876 705Q876 1010 805.5 1147.0Q735 1284 573 1284Q407 1284 334.5 1149.0Q262 1014 262 705Q262 405 335.5 266.0Q409 127 569 127Q728 127 802.0 269.0Q876 411 876 705Z' vector-effect='non-scaling-stroke'/><path transform='translate(3986,0)' d='M1059 705Q1059 352 934.5 166.0Q810 -20 567 -20Q324 -20 202.0 165.0Q80 350 80 705Q80 1068 198.5 1249.0Q317 1430 573 1430Q822 1430 940.5 1247.0Q1059 1064 1059 705ZM876 705Q876 1010 805.5 1147.0Q735 1284 573 1284Q407 1284 334.5 1149.0Q262 1014 262 705Q262 405 335.5 266.0Q409 127 569 127Q728 127 802.0 269.0Q876 411 876 705Z' vector-effect='non-scaling-stroke'/></g></svg><svg style='left:0;top:0' width='1' height='1'><g transform='translate(518.53,323.20) scale(0.00464,-0.00497)' fill='#c7c8d0' stroke='#c7c8d0' stroke-width='0.35' stroke-linejoin='round'><path transform='translate(0,0)' d='M1059 705Q1059 352 934.5 166.0Q810 -20 567 -20Q324 -20 202.0 165.0Q80 350 80 705Q80 1068 198.5 1249.0Q317 1430 573 1430Q822 1430 940.5 1247.0Q1059 1064 1059 705ZM876 705Q876 1010 805.5 1147.0Q735 1284 573 1284Q407 1284 334.5 1149.0Q262 1014 262 705Q262 405 335.5 266.0Q409 127 569 127Q728 127 802.0 269.0Q876 411 876 705Z' vector-effect='non-scaling-stroke'/><path transform='translate(1139,0)' d='M1053 459Q1053 236 920.5 108.0Q788 -20 553 -20Q356 -20 235.0 66.0Q114 152 82 315L264 336Q321 127 557 127Q702 127 784.0 214.5Q866 302 866 455Q866 588 783.5 670.0Q701 752 561 752Q488 752 425.0 729.0Q362 706 299 651H123L170 1409H971V1256H334L307 809Q424 899 598 899Q806 899 929.5 777.0Q1053 655 1053 459Z' vector-effect='non-scaling-stroke'/><path transform='translate(2278,0)' d='M187 875V1082H382V875ZM187 0V207H382V0Z' vector-effect='non-scaling-stroke'/><path transform='translate(2847,0)' d='M156 0V153H515V1237L197 1010V1180L530 1409H696V153H1039V0Z' vector-effect='non-scaling-stroke'/><path transform='translate(3986,0)' d='M1053 459Q1053 236 920.5 108.0Q788 -20 553 -20Q356 -20 235.0 66.0Q114 152 82 315L264 336Q321 127 557 127Q702 127 784.0 214.5Q866 302 866 455Q866 588 783.5 670.0Q701 752 561 752Q488 752 425.0 729.0Q362 706 299 651H123L170 1409H971V1256H334L307 809Q424 899 598 899Q806 899 929.5 777.0Q1053 655 1053 459Z' vector-effect='non-scaling-stroke'/></g></svg><svg style='left:0;top:0' width='1' height='1'><g transform='translate(569.53,323.20) scale(0.00463,-0.00497)' fill='#c7c8d0' stroke='#c7c8d0' stroke-width='0.35' stroke-linejoin='round'><path transform='translate(0,0)' d='M1059 705Q1059 352 934.5 166.0Q810 -20 567 -20Q324 -20 202.0 165.0Q80 350 80 705Q80 1068 198.5 1249.0Q317 1430 573 1430Q822 1430 940.5 1247.0Q1059 1064 1059 705ZM876 705Q876 1010 805.5 1147.0Q735 1284 573 1284Q407 1284 334.5 1149.0Q262 1014 262 705Q262 405 335.5 266.0Q409 127 569 127Q728 127 802.0 269.0Q876 411 876 705Z' vector-effect='non-scaling-stroke'/><path transform='translate(1139,0)' d='M1053 459Q1053 236 920.5 108.0Q788 -20 553 -20Q356 -20 235.0 66.0Q114 152 82 315L264 336Q321 127 557 127Q702 127 784.0 214.5Q866 302 866 455Q866 588 783.5 670.0Q701 752 561 752Q488 752 425.0 729.0Q362 706 299 651H123L170 1409H971V1256H334L307 809Q424 899 598 899Q806 899 929.5 777.0Q1053 655 1053 459Z' vector-effect='non-scaling-stroke'/><path transform='translate(2278,0)' d='M187 875V1082H382V875ZM187 0V207H382V0Z' vector-effect='non-scaling-stroke'/><path transform='translate(2847,0)' d='M1049 389Q1049 194 925.0 87.0Q801 -20 571 -20Q357 -20 229.5 76.5Q102 173 78 362L264 379Q300 129 571 129Q707 129 784.5 196.0Q862 263 862 395Q862 510 773.5 574.5Q685 639 518 639H416V795H514Q662 795 743.5 859.5Q825 924 825 1038Q825 1151 758.5 1216.5Q692 1282 561 1282Q442 1282 368.5 1221.0Q295 1160 283 1049L102 1063Q122 1236 245.5 1333.0Q369 1430 563 1430Q775 1430 892.5 1331.5Q1010 1233 1010 1057Q1010 922 934.5 837.5Q859 753 715 723V719Q873 702 961.0 613.0Q1049 524 1049 389Z' vector-effect='non-scaling-stroke'/><path transform='translate(3986,0)' d='M1059 705Q1059 352 934.5 166.0Q810 -20 567 -20Q324 -20 202.0 165.0Q80 350 80 705Q80 1068 198.5 1249.0Q317 1430 573 1430Q822 1430 940.5 1247.0Q1059 1064 1059 705ZM876 705Q876 1010 805.5 1147.0Q735 1284 573 1284Q407 1284 334.5 1149.0Q262 1014 262 705Q262 405 335.5 266.0Q409 127 569 127Q728 127 802.0 269.0Q876 411 876 705Z' vector-effect='non-scaling-stroke'/></g></svg><svg style='left:0;top:0' width='1' height='1'><g transform='translate(620.53,323.20) scale(0.00464,-0.00497)' fill='#c7c8d0' stroke='#c7c8d0' stroke-width='0.35' stroke-linejoin='round'><path transform='translate(0,0)' d='M1059 705Q1059 352 934.5 166.0Q810 -20 567 -20Q324 -20 202.0 165.0Q80 350 80 705Q80 1068 198.5 1249.0Q317 1430 573 1430Q822 1430 940.5 1247.0Q1059 1064 1059 705ZM876 705Q876 1010 805.5 1147.0Q735 1284 573 1284Q407 1284 334.5 1149.0Q262 1014 262 705Q262 405 335.5 266.0Q409 127 569 127Q728 127 802.0 269.0Q876 411 876 705Z' vector-effect='non-scaling-stroke'/><path transform='translate(1139,0)' d='M1053 459Q1053 236 920.5 108.0Q788 -20 553 -20Q356 -20 235.0 66.0Q114 152 82 315L264 336Q321 127 557 127Q702 127 784.0 214.5Q866 302 866 455Q866 588 783.5 670.0Q701 752 561 752Q488 752 425.0 729.0Q362 706 299 651H123L170 1409H971V1256H334L307 809Q424 899 598 899Q806 899 929.5 777.0Q1053 655 1053 459Z' vector-effect='non-scaling-stroke'/><path transform='translate(2278,0)' d='M187 875V1082H382V875ZM187 0V207H382V0Z' vector-effect='non-scaling-stroke'/><path transform='translate(2847,0)' d='M881 319V0H711V319H47V459L692 1409H881V461H1079V319ZM711 1206Q709 1200 683.0 1153.0Q657 1106 644 1087L283 555L229 481L213 461H711Z' vector-effect='non-scaling-stroke'/><path transform='translate(3986,0)' d='M1053 459Q1053 236 920.5 108.0Q788 -20 553 -20Q356 -20 235.0 66.0Q114 152 82 315L264 336Q321 127 557 127Q702 127 784.0 214.5Q866 302 866 455Q866 588 783.5 670.0Q701 752 561 752Q488 752 425.0 729.0Q362 706 299 651H123L170 1409H971V1256H334L307 809Q424 899 598 899Q806 899 929.5 777.0Q1053 655 1053 459Z' vector-effect='non-scaling-stroke'/></g></svg><svg style='left:0;top:0' width='1' height='1'><g transform='translate(671.53,323.20) scale(0.00463,-0.00497)' fill='#c7c8d0' stroke='#c7c8d0' stroke-width='0.35' stroke-linejoin='round'><path transform='translate(0,0)' d='M1059 705Q1059 352 934.5 166.0Q810 -20 567 -20Q324 -20 202.0 165.0Q80 350 80 705Q80 1068 198.5 1249.0Q317 1430 573 1430Q822 1430 940.5 1247.0Q1059 1064 1059 705ZM876 705Q876 1010 805.5 1147.0Q735 1284 573 1284Q407 1284 334.5 1149.0Q262 1014 262 705Q262 405 335.5 266.0Q409 127 569 127Q728 127 802.0 269.0Q876 411 876 705Z' vector-effect='non-scaling-stroke'/><path transform='translate(1139,0)' d='M1049 461Q1049 238 928.0 109.0Q807 -20 594 -20Q356 -20 230.0 157.0Q104 334 104 672Q104 1038 235.0 1234.0Q366 1430 608 1430Q927 1430 1010 1143L838 1112Q785 1284 606 1284Q452 1284 367.5 1140.5Q283 997 283 725Q332 816 421.0 863.5Q510 911 625 911Q820 911 934.5 789.0Q1049 667 1049 461ZM866 453Q866 606 791.0 689.0Q716 772 582 772Q456 772 378.5 698.5Q301 625 301 496Q301 333 381.5 229.0Q462 125 588 125Q718 125 792.0 212.5Q866 300 866 453Z' vector-effect='non-scaling-stroke'/><path transform='translate(2278,0)' d='M187 875V1082H382V875ZM187 0V207H382V0Z' vector-effect='non-scaling-stroke'/><path transform='translate(2847,0)' d='M1059 705Q1059 352 934.5 166.0Q810 -20 567 -20Q324 -20 202.0 165.0Q80 350 80 705Q80 1068 198.5 1249.0Q317 1430 573 1430Q822 1430 940.5 1247.0Q1059 1064 1059 705ZM876 705Q876 1010 805.5 1147.0Q735 1284 573 1284Q407 1284 334.5 1149.0Q262 1014 262 705Q262 405 335.5 266.0Q409 127 569 127Q728 127 802.0 269.0Q876 411 876 705Z' vector-effect='non-scaling-stroke'/><path transform='translate(3986,0)' d='M1059 705Q1059 352 934.5 166.0Q810 -20 567 -20Q324 -20 202.0 165.0Q80 350 80 705Q80 1068 198.5 1249.0Q317 1430 573 1430Q822 1430 940.5 1247.0Q1059 1064 1059 705ZM876 705Q876 1010 805.5 1147.0Q735 1284 573 1284Q407 1284 334.5 1149.0Q262 1014 262 705Q262 405 335.5 266.0Q409 127 569 127Q728 127 802.0 269.0Q876 411 876 705Z' vector-effect='non-scaling-stroke'/></g></svg><svg style='left:0;top:0' width='1' height='1'><g transform='translate(722.53,323.20) scale(0.00464,-0.00497)' fill='#c7c8d0' stroke='#c7c8d0' stroke-width='0.35' stroke-linejoin='round'><path transform='translate(0,0)' d='M1059 705Q1059 352 934.5 166.0Q810 -20 567 -20Q324 -20 202.0 165.0Q80 350 80 705Q80 1068 198.5 1249.0Q317 1430 573 1430Q822 1430 940.5 1247.0Q1059 1064 1059 705ZM876 705Q876 1010 805.5 1147.0Q735 1284 573 1284Q407 1284 334.5 1149.0Q262 1014 262 705Q262 405 335.5 266.0Q409 127 569 127Q728 127 802.0 269.0Q876 411 876 705Z' vector-effect='non-scaling-stroke'/><path transform='translate(1139,0)' d='M1049 461Q1049 238 928.0 109.0Q807 -20 594 -20Q356 -20 230.0 157.0Q104 334 104 672Q104 1038 235.0 1234.0Q366 1430 608 1430Q927 1430 1010 1143L838 1112Q785 1284 606 1284Q452 1284 367.5 1140.5Q283 997 283 725Q332 816 421.0 863.5Q510 911 625 911Q820 911 934.5 789.0Q1049 667 1049 461ZM866 453Q866 606 791.0 689.0Q716 772 582 772Q456 772 378.5 698.5Q301 625 301 496Q301 333 381.5 229.0Q462 125 588 125Q718 125 792.0 212.5Q866 300 866 453Z' vector-effect='non-scaling-stroke'/><path transform='translate(2278,0)' d='M187 875V1082H382V875ZM187 0V207H382V0Z' vector-effect='non-scaling-stroke'/><path transform='translate(2847,0)' d='M156 0V153H515V1237L197 1010V1180L530 1409H696V153H1039V0Z' vector-effect='non-scaling-stroke'/><path transform='translate(3986,0)' d='M1053 459Q1053 236 920.5 108.0Q788 -20 553 -20Q356 -20 235.0 66.0Q114 152 82 315L264 336Q321 127 557 127Q702 127 784.0 214.5Q866 302 866 455Q866 588 783.5 670.0Q701 752 561 752Q488 752 425.0 729.0Q362 706 299 651H123L170 1409H971V1256H334L307 809Q424 899 598 899Q806 899 929.5 777.0Q1053 655 1053 459Z' vector-effect='non-scaling-stroke'/></g></svg><svg style='left:0;top:0' width='1' height='1'><g transform='translate(773.53,323.20) scale(0.00463,-0.00497)' fill='#c7c8d0' stroke='#c7c8d0' stroke-width='0.35' stroke-linejoin='round'><path transform='translate(0,0)' d='M1059 705Q1059 352 934.5 166.0Q810 -20 567 -20Q324 -20 202.0 165.0Q80 350 80 705Q80 1068 198.5 1249.0Q317 1430 573 1430Q822 1430 940.5 1247.0Q1059 1064 1059 705ZM876 705Q876 1010 805.5 1147.0Q735 1284 573 1284Q407 1284 334.5 1149.0Q262 1014 262 705Q262 405 335.5 266.0Q409 127 569 127Q728 127 802.0 269.0Q876 411 876 705Z' vector-effect='non-scaling-stroke'/><path transform='translate(1139,0)' d='M1049 461Q1049 238 928.0 109.0Q807 -20 594 -20Q356 -20 230.0 157.0Q104 334 104 672Q104 1038 235.0 1234.0Q366 1430 608 1430Q927 1430 1010 1143L838 1112Q785 1284 606 1284Q452 1284 367.5 1140.5Q283 997 283 725Q332 816 421.0 863.5Q510 911 625 911Q820 911 934.5 789.0Q1049 667 1049 461ZM866 453Q866 606 791.0 689.0Q716 772 582 772Q456 772 378.5 698.5Q301 625 301 496Q301 333 381.5 229.0Q462 125 588 125Q718 125 792.0 212.5Q866 300 866 453Z' vector-effect='non-scaling-stroke'/><path transform='translate(2278,0)' d='M187 875V1082H382V875ZM187 0V207H382V0Z' vector-effect='non-scaling-stroke'/><path transform='translate(2847,0)' d='M1049 389Q1049 194 925.0 87.0Q801 -20 571 -20Q357 -20 229.5 76.5Q102 173 78 362L264 379Q300 129 571 129Q707 129 784.5 196.0Q862 263 862 395Q862 510 773.5 574.5Q685 639 518 639H416V795H514Q662 795 743.5 859.5Q825 924 825 1038Q825 1151 758.5 1216.5Q692 1282 561 1282Q442 1282 368.5 1221.0Q295 1160 283 1049L102 1063Q122 1236 245.5 1333.0Q369 1430 563 1430Q775 1430 892.5 1331.5Q1010 1233 1010 1057Q1010 922 934.5 837.5Q859 753 715 723V719Q873 702 961.0 613.0Q1049 524 1049 389Z' vector-effect='non-scaling-stroke'/><path transform='translate(3986,0)' d='M1059 705Q1059 352 934.5 166.0Q810 -20 567 -20Q324 -20 202.0 165.0Q80 350 80 705Q80 1068 198.5 1249.0Q317 1430 573 1430Q822 1430 940.5 1247.0Q1059 1064 1059 705ZM876 705Q876 1010 805.5 1147.0Q735 1284 573 1284Q407 1284 334.5 1149.0Q262 1014 262 705Q262 405 335.5 266.0Q409 127 569 127Q728 127 802.0 269.0Q876 411 876 705Z' vector-effect='non-scaling-stroke'/></g></svg><svg style='left:0;top:0' width='1' height='1'><g transform='translate(824.53,323.20) scale(0.00464,-0.00497)' fill='#c7c8d0' stroke='#c7c8d0' stroke-width='0.35' stroke-linejoin='round'><path transform='translate(0,0)' d='M1059 705Q1059 352 934.5 166.0Q810 -20 567 -20Q324 -20 202.0 165.0Q80 350 80 705Q80 1068 198.5 1249.0Q317 1430 573 1430Q822 1430 940.5 1247.0Q1059 1064 1059 705ZM876 705Q876 1010 805.5 1147.0Q735 1284 573 1284Q407 1284 334.5 1149.0Q262 1014 262 705Q262 405 335.5 266.0Q409 127 569 127Q728 127 802.0 269.0Q876 411 876 705Z' vector-effect='non-scaling-stroke'/><path transform='translate(1139,0)' d='M1049 461Q1049 238 928.0 109.0Q807 -20 594 -20Q356 -20 230.0 157.0Q104 334 104 672Q104 1038 235.0 1234.0Q366 1430 608 1430Q927 1430 1010 1143L838 1112Q785 1284 606 1284Q452 1284 367.5 1140.5Q283 997 283 725Q332 816 421.0 863.5Q510 911 625 911Q820 911 934.5 789.0Q1049 667 1049 461ZM866 453Q866 606 791.0 689.0Q716 772 582 772Q456 772 378.5 698.5Q301 625 301 496Q301 333 381.5 229.0Q462 125 588 125Q718 125 792.0 212.5Q866 300 866 453Z' vector-effect='non-scaling-stroke'/><path transform='translate(2278,0)' d='M187 875V1082H382V875ZM187 0V207H382V0Z' vector-effect='non-scaling-stroke'/><path transform='translate(2847,0)' d='M881 319V0H711V319H47V459L692 1409H881V461H1079V319ZM711 1206Q709 1200 683.0 1153.0Q657 1106 644 1087L283 555L229 481L213 461H711Z' vector-effect='non-scaling-stroke'/><path transform='translate(3986,0)' d='M1053 459Q1053 236 920.5 108.0Q788 -20 553 -20Q356 -20 235.0 66.0Q114 152 82 315L264 336Q321 127 557 127Q702 127 784.0 214.5Q866 302 866 455Q866 588 783.5 670.0Q701 752 561 752Q488 752 425.0 729.0Q362 706 299 651H123L170 1409H971V1256H334L307 809Q424 899 598 899Q806 899 929.5 777.0Q1053 655 1053 459Z' vector-effect='non-scaling-stroke'/></g></svg><svg style='left:0;top:0' width='1' height='1'><g transform='translate(875.53,323.20) scale(0.00463,-0.00497)' fill='#c7c8d0' stroke='#c7c8d0' stroke-width='0.35' stroke-linejoin='round'><path transform='translate(0,0)' d='M1059 705Q1059 352 934.5 166.0Q810 -20 567 -20Q324 -20 202.0 165.0Q80 350 80 705Q80 1068 198.5 1249.0Q317 1430 573 1430Q822 1430 940.5 1247.0Q1059 1064 1059 705ZM876 705Q876 1010 805.5 1147.0Q735 1284 573 1284Q407 1284 334.5 1149.0Q262 1014 262 705Q262 405 335.5 266.0Q409 127 569 127Q728 127 802.0 269.0Q876 411 876 705Z' vector-effect='non-scaling-stroke'/><path transform='translate(1139,0)' d='M1036 1263Q820 933 731.0 746.0Q642 559 597.5 377.0Q553 195 553 0H365Q365 270 479.5 568.5Q594 867 862 1256H105V1409H1036Z' vector-effect='non-scaling-stroke'/><path transform='translate(2278,0)' d='M187 875V1082H382V875ZM187 0V207H382V0Z' vector-effect='non-scaling-stroke'/><path transform='translate(2847,0)' d='M1059 705Q1059 352 934.5 166.0Q810 -20 567 -20Q324 -20 202.0 165.0Q80 350 80 705Q80 1068 198.5 1249.0Q317 1430 573 1430Q822 1430 940.5 1247.0Q1059 1064 1059 705ZM876 705Q876 1010 805.5 1147.0Q735 1284 573 1284Q407 1284 334.5 1149.0Q262 1014 262 705Q262 405 335.5 266.0Q409 127 569 127Q728 127 802.0 269.0Q876 411 876 705Z' vector-effect='non-scaling-stroke'/><path transform='translate(3986,0)' d='M1059 705Q1059 352 934.5 166.0Q810 -20 567 -20Q324 -20 202.0 165.0Q80 350 80 705Q80 1068 198.5 1249.0Q317 1430 573 1430Q822 1430 940.5 1247.0Q1059 1064 1059 705ZM876 705Q876 1010 805.5 1147.0Q735 1284 573 1284Q407 1284 334.5 1149.0Q262 1014 262 705Q262 405 335.5 266.0Q409 127 569 127Q728 127 802.0 269.0Q876 411 876 705Z' vector-effect='non-scaling-stroke'/></g></svg><svg style='left:0;top:0' width='1' height='1'><g transform='translate(926.53,323.20) scale(0.00464,-0.00497)' fill='#c7c8d0' stroke='#c7c8d0' stroke-width='0.35' stroke-linejoin='round'><path transform='translate(0,0)' d='M1059 705Q1059 352 934.5 166.0Q810 -20 567 -20Q324 -20 202.0 165.0Q80 350 80 705Q80 1068 198.5 1249.0Q317 1430 573 1430Q822 1430 940.5 1247.0Q1059 1064 1059 705ZM876 705Q876 1010 805.5 1147.0Q735 1284 573 1284Q407 1284 334.5 1149.0Q262 1014 262 705Q262 405 335.5 266.0Q409 127 569 127Q728 127 802.0 269.0Q876 411 876 705Z' vector-effect='non-scaling-stroke'/><path transform='translate(1139,0)' d='M1036 1263Q820 933 731.0 746.0Q642 559 597.5 377.0Q553 195 553 0H365Q365 270 479.5 568.5Q594 867 862 1256H105V1409H1036Z' vector-effect='non-scaling-stroke'/><path transform='translate(2278,0)' d='M187 875V1082H382V875ZM187 0V207H382V0Z' vector-effect='non-scaling-stroke'/><path transform='translate(2847,0)' d='M156 0V153H515V1237L197 1010V1180L530 1409H696V153H1039V0Z' vector-effect='non-scaling-stroke'/><path transform='translate(3986,0)' d='M1053 459Q1053 236 920.5 108.0Q788 -20 553 -20Q356 -20 235.0 66.0Q114 152 82 315L264 336Q321 127 557 127Q702 127 784.0 214.5Q866 302 866 455Q866 588 783.5 670.0Q701 752 561 752Q488 752 425.0 729.0Q362 706 299 651H123L170 1409H971V1256H334L307 809Q424 899 598 899Q806 899 929.5 777.0Q1053 655 1053 459Z' vector-effect='non-scaling-stroke'/></g></svg><svg style='left:0;top:0' width='1' height='1'><g transform='translate(977.53,323.20) scale(0.00463,-0.00497)' fill='#c7c8d0' stroke='#c7c8d0' stroke-width='0.35' stroke-linejoin='round'><path transform='translate(0,0)' d='M1059 705Q1059 352 934.5 166.0Q810 -20 567 -20Q324 -20 202.0 165.0Q80 350 80 705Q80 1068 198.5 1249.0Q317 1430 573 1430Q822 1430 940.5 1247.0Q1059 1064 1059 705ZM876 705Q876 1010 805.5 1147.0Q735 1284 573 1284Q407 1284 334.5 1149.0Q262 1014 262 705Q262 405 335.5 266.0Q409 127 569 127Q728 127 802.0 269.0Q876 411 876 705Z' vector-effect='non-scaling-stroke'/><path transform='translate(1139,0)' d='M1036 1263Q820 933 731.0 746.0Q642 559 597.5 377.0Q553 195 553 0H365Q365 270 479.5 568.5Q594 867 862 1256H105V1409H1036Z' vector-effect='non-scaling-stroke'/><path transform='translate(2278,0)' d='M187 875V1082H382V875ZM187 0V207H382V0Z' vector-effect='non-scaling-stroke'/><path transform='translate(2847,0)' d='M1049 389Q1049 194 925.0 87.0Q801 -20 571 -20Q357 -20 229.5 76.5Q102 173 78 362L264 379Q300 129 571 129Q707 129 784.5 196.0Q862 263 862 395Q862 510 773.5 574.5Q685 639 518 639H416V795H514Q662 795 743.5 859.5Q825 924 825 1038Q825 1151 758.5 1216.5Q692 1282 561 1282Q442 1282 368.5 1221.0Q295 1160 283 1049L102 1063Q122 1236 245.5 1333.0Q369 1430 563 1430Q775 1430 892.5 1331.5Q1010 1233 1010 1057Q1010 922 934.5 837.5Q859 753 715 723V719Q873 702 961.0 613.0Q1049 524 1049 389Z' vector-effect='non-scaling-stroke'/><path transform='translate(3986,0)' d='M1059 705Q1059 352 934.5 166.0Q810 -20 567 -20Q324 -20 202.0 165.0Q80 350 80 705Q80 1068 198.5 1249.0Q317 1430 573 1430Q822 1430 940.5 1247.0Q1059 1064 1059 705ZM876 705Q876 1010 805.5 1147.0Q735 1284 573 1284Q407 1284 334.5 1149.0Q262 1014 262 705Q262 405 335.5 266.0Q409 127 569 127Q728 127 802.0 269.0Q876 411 876 705Z' vector-effect='non-scaling-stroke'/></g></svg><svg style='left:0;top:0' width='1' height='1'><g transform='translate(1028.53,323.20) scale(0.00464,-0.00497)' fill='#c7c8d0' stroke='#c7c8d0' stroke-width='0.35' stroke-linejoin='round'><path transform='translate(0,0)' d='M1059 705Q1059 352 934.5 166.0Q810 -20 567 -20Q324 -20 202.0 165.0Q80 350 80 705Q80 1068 198.5 1249.0Q317 1430 573 1430Q822 1430 940.5 1247.0Q1059 1064 1059 705ZM876 705Q876 1010 805.5 1147.0Q735 1284 573 1284Q407 1284 334.5 1149.0Q262 1014 262 705Q262 405 335.5 266.0Q409 127 569 127Q728 127 802.0 269.0Q876 411 876 705Z' vector-effect='non-scaling-stroke'/><path transform='translate(1139,0)' d='M1036 1263Q820 933 731.0 746.0Q642 559 597.5 377.0Q553 195 553 0H365Q365 270 479.5 568.5Q594 867 862 1256H105V1409H1036Z' vector-effect='non-scaling-stroke'/><path transform='translate(2278,0)' d='M187 875V1082H382V875ZM187 0V207H382V0Z' vector-effect='non-scaling-stroke'/><path transform='translate(2847,0)' d='M881 319V0H711V319H47V459L692 1409H881V461H1079V319ZM711 1206Q709 1200 683.0 1153.0Q657 1106 644 1087L283 555L229 481L213 461H711Z' vector-effect='non-scaling-stroke'/><path transform='translate(3986,0)' d='M1053 459Q1053 236 920.5 108.0Q788 -20 553 -20Q356 -20 235.0 66.0Q114 152 82 315L264 336Q321 127 557 127Q702 127 784.0 214.5Q866 302 866 455Q866 588 783.5 670.0Q701 752 561 752Q488 752 425.0 729.0Q362 706 299 651H123L170 1409H971V1256H334L307 809Q424 899 598 899Q806 899 929.5 777.0Q1053 655 1053 459Z' vector-effect='non-scaling-stroke'/></g></svg><svg style='left:0;top:0' width='1' height='1'><g transform='translate(1079.53,323.20) scale(0.00463,-0.00497)' fill='#c7c8d0' stroke='#c7c8d0' stroke-width='0.35' stroke-linejoin='round'><path transform='translate(0,0)' d='M1059 705Q1059 352 934.5 166.0Q810 -20 567 -20Q324 -20 202.0 165.0Q80 350 80 705Q80 1068 198.5 1249.0Q317 1430 573 1430Q822 1430 940.5 1247.0Q1059 1064 1059 705ZM876 705Q876 1010 805.5 1147.0Q735 1284 573 1284Q407 1284 334.5 1149.0Q262 1014 262 705Q262 405 335.5 266.0Q409 127 569 127Q728 127 802.0 269.0Q876 411 876 705Z' vector-effect='non-scaling-stroke'/><path transform='translate(1139,0)' d='M1050 393Q1050 198 926.0 89.0Q802 -20 570 -20Q344 -20 216.5 87.0Q89 194 89 391Q89 529 168.0 623.0Q247 717 370 737V741Q255 768 188.5 858.0Q122 948 122 1069Q122 1230 242.5 1330.0Q363 1430 566 1430Q774 1430 894.5 1332.0Q1015 1234 1015 1067Q1015 946 948.0 856.0Q881 766 765 743V739Q900 717 975.0 624.5Q1050 532 1050 393ZM828 1057Q828 1296 566 1296Q439 1296 372.5 1236.0Q306 1176 306 1057Q306 936 374.5 872.5Q443 809 568 809Q695 809 761.5 867.5Q828 926 828 1057ZM863 410Q863 541 785.0 607.5Q707 674 566 674Q429 674 352.0 602.5Q275 531 275 406Q275 115 572 115Q719 115 791.0 185.5Q863 256 863 410Z' vector-effect='non-scaling-stroke'/><path transform='translate(2278,0)' d='M187 875V1082H382V875ZM187 0V207H382V0Z' vector-effect='non-scaling-stroke'/><path transform='translate(2847,0)' d='M1059 705Q1059 352 934.5 166.0Q810 -20 567 -20Q324 -20 202.0 165.0Q80 350 80 705Q80 1068 198.5 1249.0Q317 1430 573 1430Q822 1430 940.5 1247.0Q1059 1064 1059 705ZM876 705Q876 1010 805.5 1147.0Q735 1284 573 1284Q407 1284 334.5 1149.0Q262 1014 262 705Q262 405 335.5 266.0Q409 127 569 127Q728 127 802.0 269.0Q876 411 876 705Z' vector-effect='non-scaling-stroke'/><path transform='translate(3986,0)' d='M1059 705Q1059 352 934.5 166.0Q810 -20 567 -20Q324 -20 202.0 165.0Q80 350 80 705Q80 1068 198.5 1249.0Q317 1430 573 1430Q822 1430 940.5 1247.0Q1059 1064 1059 705ZM876 705Q876 1010 805.5 1147.0Q735 1284 573 1284Q407 1284 334.5 1149.0Q262 1014 262 705Q262 405 335.5 266.0Q409 127 569 127Q728 127 802.0 269.0Q876 411 876 705Z' vector-effect='non-scaling-stroke'/></g></svg><svg style='left:0;top:0' width='1' height='1'><g transform='translate(1130.53,323.20) scale(0.00464,-0.00497)' fill='#c7c8d0' stroke='#c7c8d0' stroke-width='0.35' stroke-linejoin='round'><path transform='translate(0,0)' d='M1059 705Q1059 352 934.5 166.0Q810 -20 567 -20Q324 -20 202.0 165.0Q80 350 80 705Q80 1068 198.5 1249.0Q317 1430 573 1430Q822 1430 940.5 1247.0Q1059 1064 1059 705ZM876 705Q876 1010 805.5 1147.0Q735 1284 573 1284Q407 1284 334.5 1149.0Q262 1014 262 705Q262 405 335.5 266.0Q409 127 569 127Q728 127 802.0 269.0Q876 411 876 705Z' vector-effect='non-scaling-stroke'/><path transform='translate(1139,0)' d='M1050 393Q1050 198 926.0 89.0Q802 -20 570 -20Q344 -20 216.5 87.0Q89 194 89 391Q89 529 168.0 623.0Q247 717 370 737V741Q255 768 188.5 858.0Q122 948 122 1069Q122 1230 242.5 1330.0Q363 1430 566 1430Q774 1430 894.5 1332.0Q1015 1234 1015 1067Q1015 946 948.0 856.0Q881 766 765 743V739Q900 717 975.0 624.5Q1050 532 1050 393ZM828 1057Q828 1296 566 1296Q439 1296 372.5 1236.0Q306 1176 306 1057Q306 936 374.5 872.5Q443 809 568 809Q695 809 761.5 867.5Q828 926 828 1057ZM863 410Q863 541 785.0 607.5Q707 674 566 674Q429 674 352.0 602.5Q275 531 275 406Q275 115 572 115Q719 115 791.0 185.5Q863 256 863 410Z' vector-effect='non-scaling-stroke'/><path transform='translate(2278,0)' d='M187 875V1082H382V875ZM187 0V207H382V0Z' vector-effect='non-scaling-stroke'/><path transform='translate(2847,0)' d='M156 0V153H515V1237L197 1010V1180L530 1409H696V153H1039V0Z' vector-effect='non-scaling-stroke'/><path transform='translate(3986,0)' d='M1053 459Q1053 236 920.5 108.0Q788 -20 553 -20Q356 -20 235.0 66.0Q114 152 82 315L264 336Q321 127 557 127Q702 127 784.0 214.5Q866 302 866 455Q866 588 783.5 670.0Q701 752 561 752Q488 752 425.0 729.0Q362 706 299 651H123L170 1409H971V1256H334L307 809Q424 899 598 899Q806 899 929.5 777.0Q1053 655 1053 459Z' vector-effect='non-scaling-stroke'/></g></svg><svg style='left:0;top:0' width='1' height='1'><g transform='translate(1181.53,323.20) scale(0.00463,-0.00497)' fill='#c7c8d0' stroke='#c7c8d0' stroke-width='0.35' stroke-linejoin='round'><path transform='translate(0,0)' d='M1059 705Q1059 352 934.5 166.0Q810 -20 567 -20Q324 -20 202.0 165.0Q80 350 80 705Q80 1068 198.5 1249.0Q317 1430 573 1430Q822 1430 940.5 1247.0Q1059 1064 1059 705ZM876 705Q876 1010 805.5 1147.0Q735 1284 573 1284Q407 1284 334.5 1149.0Q262 1014 262 705Q262 405 335.5 266.0Q409 127 569 127Q728 127 802.0 269.0Q876 411 876 705Z' vector-effect='non-scaling-stroke'/><path transform='translate(1139,0)' d='M1050 393Q1050 198 926.0 89.0Q802 -20 570 -20Q344 -20 216.5 87.0Q89 194 89 391Q89 529 168.0 623.0Q247 717 370 737V741Q255 768 188.5 858.0Q122 948 122 1069Q122 1230 242.5 1330.0Q363 1430 566 1430Q774 1430 894.5 1332.0Q1015 1234 1015 1067Q1015 946 948.0 856.0Q881 766 765 743V739Q900 717 975.0 624.5Q1050 532 1050 393ZM828 1057Q828 1296 566 1296Q439 1296 372.5 1236.0Q306 1176 306 1057Q306 936 374.5 872.5Q443 809 568 809Q695 809 761.5 867.5Q828 926 828 1057ZM863 410Q863 541 785.0 607.5Q707 674 566 674Q429 674 352.0 602.5Q275 531 275 406Q275 115 572 115Q719 115 791.0 185.5Q863 256 863 410Z' vector-effect='non-scaling-stroke'/><path transform='translate(2278,0)' d='M187 875V1082H382V875ZM187 0V207H382V0Z' vector-effect='non-scaling-stroke'/><path transform='translate(2847,0)' d='M1049 389Q1049 194 925.0 87.0Q801 -20 571 -20Q357 -20 229.5 76.5Q102 173 78 362L264 379Q300 129 571 129Q707 129 784.5 196.0Q862 263 862 395Q862 510 773.5 574.5Q685 639 518 639H416V795H514Q662 795 743.5 859.5Q825 924 825 1038Q825 1151 758.5 1216.5Q692 1282 561 1282Q442 1282 368.5 1221.0Q295 1160 283 1049L102 1063Q122 1236 245.5 1333.0Q369 1430 563 1430Q775 1430 892.5 1331.5Q1010 1233 1010 1057Q1010 922 934.5 837.5Q859 753 715 723V719Q873 702 961.0 613.0Q1049 524 1049 389Z' vector-effect='non-scaling-stroke'/><path transform='translate(3986,0)' d='M1059 705Q1059 352 934.5 166.0Q810 -20 567 -20Q324 -20 202.0 165.0Q80 350 80 705Q80 1068 198.5 1249.0Q317 1430 573 1430Q822 1430 940.5 1247.0Q1059 1064 1059 705ZM876 705Q876 1010 805.5 1147.0Q735 1284 573 1284Q407 1284 334.5 1149.0Q262 1014 262 705Q262 405 335.5 266.0Q409 127 569 127Q728 127 802.0 269.0Q876 411 876 705Z' vector-effect='non-scaling-stroke'/></g></svg><svg style='left:0;top:0' width='1' height='1'><g transform='translate(1232.53,323.20) scale(0.00464,-0.00497)' fill='#c7c8d0' stroke='#c7c8d0' stroke-width='0.35' stroke-linejoin='round'><path transform='translate(0,0)' d='M1059 705Q1059 352 934.5 166.0Q810 -20 567 -20Q324 -20 202.0 165.0Q80 350 80 705Q80 1068 198.5 1249.0Q317 1430 573 1430Q822 1430 940.5 1247.0Q1059 1064 1059 705ZM876 705Q876 1010 805.5 1147.0Q735 1284 573 1284Q407 1284 334.5 1149.0Q262 1014 262 705Q262 405 335.5 266.0Q409 127 569 127Q728 127 802.0 269.0Q876 411 876 705Z' vector-effect='non-scaling-stroke'/><path transform='translate(1139,0)' d='M1050 393Q1050 198 926.0 89.0Q802 -20 570 -20Q344 -20 216.5 87.0Q89 194 89 391Q89 529 168.0 623.0Q247 717 370 737V741Q255 768 188.5 858.0Q122 948 122 1069Q122 1230 242.5 1330.0Q363 1430 566 1430Q774 1430 894.5 1332.0Q1015 1234 1015 1067Q1015 946 948.0 856.0Q881 766 765 743V739Q900 717 975.0 624.5Q1050 532 1050 393ZM828 1057Q828 1296 566 1296Q439 1296 372.5 1236.0Q306 1176 306 1057Q306 936 374.5 872.5Q443 809 568 809Q695 809 761.5 867.5Q828 926 828 1057ZM863 410Q863 541 785.0 607.5Q707 674 566 674Q429 674 352.0 602.5Q275 531 275 406Q275 115 572 115Q719 115 791.0 185.5Q863 256 863 410Z' vector-effect='non-scaling-stroke'/><path transform='translate(2278,0)' d='M187 875V1082H382V875ZM187 0V207H382V0Z' vector-effect='non-scaling-stroke'/><path transform='translate(2847,0)' d='M881 319V0H711V319H47V459L692 1409H881V461H1079V319ZM711 1206Q709 1200 683.0 1153.0Q657 1106 644 1087L283 555L229 481L213 461H711Z' vector-effect='non-scaling-stroke'/><path transform='translate(3986,0)' d='M1053 459Q1053 236 920.5 108.0Q788 -20 553 -20Q356 -20 235.0 66.0Q114 152 82 315L264 336Q321 127 557 127Q702 127 784.0 214.5Q866 302 866 455Q866 588 783.5 670.0Q701 752 561 752Q488 752 425.0 729.0Q362 706 299 651H123L170 1409H971V1256H334L307 809Q424 899 598 899Q806 899 929.5 777.0Q1053 655 1053 459Z' vector-effect='non-scaling-stroke'/></g></svg><svg style='left:0;top:0' width='1' height='1'><g transform='translate(1283.53,323.20) scale(0.00463,-0.00497)' fill='#c7c8d0' stroke='#c7c8d0' stroke-width='0.35' stroke-linejoin='round'><path transform='translate(0,0)' d='M1059 705Q1059 352 934.5 166.0Q810 -20 567 -20Q324 -20 202.0 165.0Q80 350 80 705Q80 1068 198.5 1249.0Q317 1430 573 1430Q822 1430 940.5 1247.0Q1059 1064 1059 705ZM876 705Q876 1010 805.5 1147.0Q735 1284 573 1284Q407 1284 334.5 1149.0Q262 1014 262 705Q262 405 335.5 266.0Q409 127 569 127Q728 127 802.0 269.0Q876 411 876 705Z' vector-effect='non-scaling-stroke'/><path transform='translate(1139,0)' d='M1042 733Q1042 370 909.5 175.0Q777 -20 532 -20Q367 -20 267.5 49.5Q168 119 125 274L297 301Q351 125 535 125Q690 125 775.0 269.0Q860 413 864 680Q824 590 727.0 535.5Q630 481 514 481Q324 481 210.0 611.0Q96 741 96 956Q96 1177 220.0 1303.5Q344 1430 565 1430Q800 1430 921.0 1256.0Q1042 1082 1042 733ZM846 907Q846 1077 768.0 1180.5Q690 1284 559 1284Q429 1284 354.0 1195.5Q279 1107 279 956Q279 802 354.0 712.5Q429 623 557 623Q635 623 702.0 658.5Q769 694 807.5 759.0Q846 824 846 907Z' vector-effect='non-scaling-stroke'/><path transform='translate(2278,0)' d='M187 875V1082H382V875ZM187 0V207H382V0Z' vector-effect='non-scaling-stroke'/><path transform='translate(2847,0)' d='M1059 705Q1059 352 934.5 166.0Q810 -20 567 -20Q324 -20 202.0 165.0Q80 350 80 705Q80 1068 198.5 1249.0Q317 1430 573 1430Q822 1430 940.5 1247.0Q1059 1064 1059 705ZM876 705Q876 1010 805.5 1147.0Q735 1284 573 1284Q407 1284 334.5 1149.0Q262 1014 262 705Q262 405 335.5 266.0Q409 127 569 127Q728 127 802.0 269.0Q876 411 876 705Z' vector-effect='non-scaling-stroke'/><path transform='translate(3986,0)' d='M1059 705Q1059 352 934.5 166.0Q810 -20 567 -20Q324 -20 202.0 165.0Q80 350 80 705Q80 1068 198.5 1249.0Q317 1430 573 1430Q822 1430 940.5 1247.0Q1059 1064 1059 705ZM876 705Q876 1010 805.5 1147.0Q735 1284 573 1284Q407 1284 334.5 1149.0Q262 1014 262 705Q262 405 335.5 266.0Q409 127 569 127Q728 127 802.0 269.0Q876 411 876 705Z' vector-effect='non-scaling-stroke'/></g></svg><svg style='left:0;top:0' width='1' height='1'><g transform='translate(1345.94,127.30) scale(0.00425,-0.00426)' fill='#c7c8d0' stroke='#c7c8d0' stroke-width='0.35' stroke-linejoin='round'><path transform='translate(0,0)' d='M156 0V153H515V1237L197 1010V1180L530 1409H696V153H1039V0Z' vector-effect='non-scaling-stroke'/><path transform='translate(1139,0)' d='M1059 705Q1059 352 934.5 166.0Q810 -20 567 -20Q324 -20 202.0 165.0Q80 350 80 705Q80 1068 198.5 1249.0Q317 1430 573 1430Q822 1430 940.5 1247.0Q1059 1064 1059 705ZM876 705Q876 1010 805.5 1147.0Q735 1284 573 1284Q407 1284 334.5 1149.0Q262 1014 262 705Q262 405 335.5 266.0Q409 127 569 127Q728 127 802.0 269.0Q876 411 876 705Z' vector-effect='non-scaling-stroke'/><path transform='translate(2278,0)' d='M1059 705Q1059 352 934.5 166.0Q810 -20 567 -20Q324 -20 202.0 165.0Q80 350 80 705Q80 1068 198.5 1249.0Q317 1430 573 1430Q822 1430 940.5 1247.0Q1059 1064 1059 705ZM876 705Q876 1010 805.5 1147.0Q735 1284 573 1284Q407 1284 334.5 1149.0Q262 1014 262 705Q262 405 335.5 266.0Q409 127 569 127Q728 127 802.0 269.0Q876 411 876 705Z' vector-effect='non-scaling-stroke'/><path transform='translate(3417,0)' d='M1748 434Q1748 219 1667.0 103.5Q1586 -12 1428 -12Q1272 -12 1192.5 100.5Q1113 213 1113 434Q1113 662 1189.5 773.5Q1266 885 1432 885Q1596 885 1672.0 770.5Q1748 656 1748 434ZM527 0H372L1294 1409H1451ZM394 1421Q553 1421 630.0 1309.0Q707 1197 707 975Q707 758 627.5 641.0Q548 524 390 524Q232 524 152.5 640.0Q73 756 73 975Q73 1198 150.0 1309.5Q227 1421 394 1421ZM1600 434Q1600 613 1561.5 693.5Q1523 774 1432 774Q1341 774 1300.5 695.0Q1260 616 1260 434Q1260 263 1299.5 180.5Q1339 98 1430 98Q1518 98 1559.0 181.5Q1600 265 1600 434ZM560 975Q560 1151 522.0 1232.0Q484 1313 394 1313Q300 1313 260.0 1233.5Q220 1154 220 975Q220 802 260.0 719.5Q300 637 392 637Q479 637 519.5 721.0Q560 805 560 975Z' vector-effect='non-scaling-stroke'/></g></svg><svg style='left:0;top:0' width='1' height='1'><g transform='translate(1346.23,164.30) scale(0.00419,-0.00426)' fill='#c7c8d0' stroke='#c7c8d0' stroke-width='0.35' stroke-linejoin='round'><path transform='translate(0,0)' d='M1050 393Q1050 198 926.0 89.0Q802 -20 570 -20Q344 -20 216.5 87.0Q89 194 89 391Q89 529 168.0 623.0Q247 717 370 737V741Q255 768 188.5 858.0Q122 948 122 1069Q122 1230 242.5 1330.0Q363 1430 566 1430Q774 1430 894.5 1332.0Q1015 1234 1015 1067Q1015 946 948.0 856.0Q881 766 765 743V739Q900 717 975.0 624.5Q1050 532 1050 393ZM828 1057Q828 1296 566 1296Q439 1296 372.5 1236.0Q306 1176 306 1057Q306 936 374.5 872.5Q443 809 568 809Q695 809 761.5 867.5Q828 926 828 1057ZM863 410Q863 541 785.0 607.5Q707 674 566 674Q429 674 352.0 602.5Q275 531 275 406Q275 115 572 115Q719 115 791.0 185.5Q863 256 863 410Z' vector-effect='non-scaling-stroke'/><path transform='translate(1139,0)' d='M1059 705Q1059 352 934.5 166.0Q810 -20 567 -20Q324 -20 202.0 165.0Q80 350 80 705Q80 1068 198.5 1249.0Q317 1430 573 1430Q822 1430 940.5 1247.0Q1059 1064 1059 705ZM876 705Q876 1010 805.5 1147.0Q735 1284 573 1284Q407 1284 334.5 1149.0Q262 1014 262 705Q262 405 335.5 266.0Q409 127 569 127Q728 127 802.0 269.0Q876 411 876 705Z' vector-effect='non-scaling-stroke'/><path transform='translate(2278,0)' d='M1748 434Q1748 219 1667.0 103.5Q1586 -12 1428 -12Q1272 -12 1192.5 100.5Q1113 213 1113 434Q1113 662 1189.5 773.5Q1266 885 1432 885Q1596 885 1672.0 770.5Q1748 656 1748 434ZM527 0H372L1294 1409H1451ZM394 1421Q553 1421 630.0 1309.0Q707 1197 707 975Q707 758 627.5 641.0Q548 524 390 524Q232 524 152.5 640.0Q73 756 73 975Q73 1198 150.0 1309.5Q227 1421 394 1421ZM1600 434Q1600 613 1561.5 693.5Q1523 774 1432 774Q1341 774 1300.5 695.0Q1260 616 1260 434Q1260 263 1299.5 180.5Q1339 98 1430 98Q1518 98 1559.0 181.5Q1600 265 1600 434ZM560 975Q560 1151 522.0 1232.0Q484 1313 394 1313Q300 1313 260.0 1233.5Q220 1154 220 975Q220 802 260.0 719.5Q300 637 392 637Q479 637 519.5 721.0Q560 805 560 975Z' vector-effect='non-scaling-stroke'/></g></svg><svg style='left:0;top:0' width='1' height='1'><g transform='translate(1346.16,201.30) scale(0.00421,-0.00426)' fill='#c7c8d0' stroke='#c7c8d0' stroke-width='0.35' stroke-linejoin='round'><path transform='translate(0,0)' d='M1049 461Q1049 238 928.0 109.0Q807 -20 594 -20Q356 -20 230.0 157.0Q104 334 104 672Q104 1038 235.0 1234.0Q366 1430 608 1430Q927 1430 1010 1143L838 1112Q785 1284 606 1284Q452 1284 367.5 1140.5Q283 997 283 725Q332 816 421.0 863.5Q510 911 625 911Q820 911 934.5 789.0Q1049 667 1049 461ZM866 453Q866 606 791.0 689.0Q716 772 582 772Q456 772 378.5 698.5Q301 625 301 496Q301 333 381.5 229.0Q462 125 588 125Q718 125 792.0 212.5Q866 300 866 453Z' vector-effect='non-scaling-stroke'/><path transform='translate(1139,0)' d='M1059 705Q1059 352 934.5 166.0Q810 -20 567 -20Q324 -20 202.0 165.0Q80 350 80 705Q80 1068 198.5 1249.0Q317 1430 573 1430Q822 1430 940.5 1247.0Q1059 1064 1059 705ZM876 705Q876 1010 805.5 1147.0Q735 1284 573 1284Q407 1284 334.5 1149.0Q262 1014 262 705Q262 405 335.5 266.0Q409 127 569 127Q728 127 802.0 269.0Q876 411 876 705Z' vector-effect='non-scaling-stroke'/><path transform='translate(2278,0)' d='M1748 434Q1748 219 1667.0 103.5Q1586 -12 1428 -12Q1272 -12 1192.5 100.5Q1113 213 1113 434Q1113 662 1189.5 773.5Q1266 885 1432 885Q1596 885 1672.0 770.5Q1748 656 1748 434ZM527 0H372L1294 1409H1451ZM394 1421Q553 1421 630.0 1309.0Q707 1197 707 975Q707 758 627.5 641.0Q548 524 390 524Q232 524 152.5 640.0Q73 756 73 975Q73 1198 150.0 1309.5Q227 1421 394 1421ZM1600 434Q1600 613 1561.5 693.5Q1523 774 1432 774Q1341 774 1300.5 695.0Q1260 616 1260 434Q1260 263 1299.5 180.5Q1339 98 1430 98Q1518 98 1559.0 181.5Q1600 265 1600 434ZM560 975Q560 1151 522.0 1232.0Q484 1313 394 1313Q300 1313 260.0 1233.5Q220 1154 220 975Q220 802 260.0 719.5Q300 637 392 637Q479 637 519.5 721.0Q560 805 560 975Z' vector-effect='non-scaling-stroke'/></g></svg><svg style='left:0;top:0' width='1' height='1'><g transform='translate(1346.41,238.30) scale(0.00415,-0.00426)' fill='#c7c8d0' stroke='#c7c8d0' stroke-width='0.35' stroke-linejoin='round'><path transform='translate(0,0)' d='M881 319V0H711V319H47V459L692 1409H881V461H1079V319ZM711 1206Q709 1200 683.0 1153.0Q657 1106 644 1087L283 555L229 481L213 461H711Z' vector-effect='non-scaling-stroke'/><path transform='translate(1139,0)' d='M1059 705Q1059 352 934.5 166.0Q810 -20 567 -20Q324 -20 202.0 165.0Q80 350 80 705Q80 1068 198.5 1249.0Q317 1430 573 1430Q822 1430 940.5 1247.0Q1059 1064 1059 705ZM876 705Q876 1010 805.5 1147.0Q735 1284 573 1284Q407 1284 334.5 1149.0Q262 1014 262 705Q262 405 335.5 266.0Q409 127 569 127Q728 127 802.0 269.0Q876 411 876 705Z' vector-effect='non-scaling-stroke'/><path transform='translate(2278,0)' d='M1748 434Q1748 219 1667.0 103.5Q1586 -12 1428 -12Q1272 -12 1192.5 100.5Q1113 213 1113 434Q1113 662 1189.5 773.5Q1266 885 1432 885Q1596 885 1672.0 770.5Q1748 656 1748 434ZM527 0H372L1294 1409H1451ZM394 1421Q553 1421 630.0 1309.0Q707 1197 707 975Q707 758 627.5 641.0Q548 524 390 524Q232 524 152.5 640.0Q73 756 73 975Q73 1198 150.0 1309.5Q227 1421 394 1421ZM1600 434Q1600 613 1561.5 693.5Q1523 774 1432 774Q1341 774 1300.5 695.0Q1260 616 1260 434Q1260 263 1299.5 180.5Q1339 98 1430 98Q1518 98 1559.0 181.5Q1600 265 1600 434ZM560 975Q560 1151 522.0 1232.0Q484 1313 394 1313Q300 1313 260.0 1233.5Q220 1154 220 975Q220 802 260.0 719.5Q300 637 392 637Q479 637 519.5 721.0Q560 805 560 975Z' vector-effect='non-scaling-stroke'/></g></svg><svg style='left:0;top:0' width='1' height='1'><g transform='translate(1346.17,275.30) scale(0.00421,-0.00426)' fill='#c7c8d0' stroke='#c7c8d0' stroke-width='0.35' stroke-linejoin='round'><path transform='translate(0,0)' d='M103 0V127Q154 244 227.5 333.5Q301 423 382.0 495.5Q463 568 542.5 630.0Q622 692 686.0 754.0Q750 816 789.5 884.0Q829 952 829 1038Q829 1154 761.0 1218.0Q693 1282 572 1282Q457 1282 382.5 1219.5Q308 1157 295 1044L111 1061Q131 1230 254.5 1330.0Q378 1430 572 1430Q785 1430 899.5 1329.5Q1014 1229 1014 1044Q1014 962 976.5 881.0Q939 800 865.0 719.0Q791 638 582 468Q467 374 399.0 298.5Q331 223 301 153H1036V0Z' vector-effect='non-scaling-stroke'/><path transform='translate(1139,0)' d='M1059 705Q1059 352 934.5 166.0Q810 -20 567 -20Q324 -20 202.0 165.0Q80 350 80 705Q80 1068 198.5 1249.0Q317 1430 573 1430Q822 1430 940.5 1247.0Q1059 1064 1059 705ZM876 705Q876 1010 805.5 1147.0Q735 1284 573 1284Q407 1284 334.5 1149.0Q262 1014 262 705Q262 405 335.5 266.0Q409 127 569 127Q728 127 802.0 269.0Q876 411 876 705Z' vector-effect='non-scaling-stroke'/><path transform='translate(2278,0)' d='M1748 434Q1748 219 1667.0 103.5Q1586 -12 1428 -12Q1272 -12 1192.5 100.5Q1113 213 1113 434Q1113 662 1189.5 773.5Q1266 885 1432 885Q1596 885 1672.0 770.5Q1748 656 1748 434ZM527 0H372L1294 1409H1451ZM394 1421Q553 1421 630.0 1309.0Q707 1197 707 975Q707 758 627.5 641.0Q548 524 390 524Q232 524 152.5 640.0Q73 756 73 975Q73 1198 150.0 1309.5Q227 1421 394 1421ZM1600 434Q1600 613 1561.5 693.5Q1523 774 1432 774Q1341 774 1300.5 695.0Q1260 616 1260 434Q1260 263 1299.5 180.5Q1339 98 1430 98Q1518 98 1559.0 181.5Q1600 265 1600 434ZM560 975Q560 1151 522.0 1232.0Q484 1313 394 1313Q300 1313 260.0 1233.5Q220 1154 220 975Q220 802 260.0 719.5Q300 637 392 637Q479 637 519.5 721.0Q560 805 560 975Z' vector-effect='non-scaling-stroke'/></g></svg><svg style='left:0;top:0' width='1' height='1'><g transform='translate(1346.26,312.30) scale(0.00428,-0.00426)' fill='#c7c8d0' stroke='#c7c8d0' stroke-width='0.35' stroke-linejoin='round'><path transform='translate(0,0)' d='M1059 705Q1059 352 934.5 166.0Q810 -20 567 -20Q324 -20 202.0 165.0Q80 350 80 705Q80 1068 198.5 1249.0Q317 1430 573 1430Q822 1430 940.5 1247.0Q1059 1064 1059 705ZM876 705Q876 1010 805.5 1147.0Q735 1284 573 1284Q407 1284 334.5 1149.0Q262 1014 262 705Q262 405 335.5 266.0Q409 127 569 127Q728 127 802.0 269.0Q876 411 876 705Z' vector-effect='non-scaling-stroke'/><path transform='translate(1139,0)' d='M1748 434Q1748 219 1667.0 103.5Q1586 -12 1428 -12Q1272 -12 1192.5 100.5Q1113 213 1113 434Q1113 662 1189.5 773.5Q1266 885 1432 885Q1596 885 1672.0 770.5Q1748 656 1748 434ZM527 0H372L1294 1409H1451ZM394 1421Q553 1421 630.0 1309.0Q707 1197 707 975Q707 758 627.5 641.0Q548 524 390 524Q232 524 152.5 640.0Q73 756 73 975Q73 1198 150.0 1309.5Q227 1421 394 1421ZM1600 434Q1600 613 1561.5 693.5Q1523 774 1432 774Q1341 774 1300.5 695.0Q1260 616 1260 434Q1260 263 1299.5 180.5Q1339 98 1430 98Q1518 98 1559.0 181.5Q1600 265 1600 434ZM560 975Q560 1151 522.0 1232.0Q484 1313 394 1313Q300 1313 260.0 1233.5Q220 1154 220 975Q220 802 260.0 719.5Q300 637 392 637Q479 637 519.5 721.0Q560 805 560 975Z' vector-effect='non-scaling-stroke'/></g></svg><svg style='left:102.0px;top:400.3px' width='100' height='100'><path d='M15.00 61.37 A36.8 36.8 0 1 1 85.00 61.37' fill='none' stroke='#22252b' stroke-width='19.5'/><path d='M3.30 65.17 A49.1 49.1 0 0 1 94.43 29.09' fill='none' stroke='#73bf69' stroke-width='3.4'/><path d='M94.43 29.09 A49.1 49.1 0 0 1 96.70 65.17' fill='none' stroke='#f2495c' stroke-width='3.4'/></svg><svg style='left:0;top:0' width='1' height='1'><g transform='translate(131.03,463.70) scale(0.01012,-0.01171)' fill='#73bf69' stroke='#111217' stroke-width='0.25' stroke-linejoin='round'><path transform='translate(0,0)' d='M478 0V1150L140 965V1250L520 1409H759V0Z' vector-effect='non-scaling-stroke'/><path transform='translate(1139,0)' d='M1065 391Q1065 193 935.0 85.0Q805 -23 565 -23Q338 -23 204.0 81.5Q70 186 47 383L333 408Q360 205 564 205Q665 205 721.0 255.0Q777 305 777 408Q777 502 709.0 552.0Q641 602 507 602H409V829H501Q622 829 683.0 878.5Q744 928 744 1020Q744 1107 695.5 1156.5Q647 1206 554 1206Q467 1206 413.5 1158.0Q360 1110 352 1022L71 1042Q93 1224 222.0 1327.0Q351 1430 559 1430Q780 1430 904.5 1330.5Q1029 1231 1029 1055Q1029 923 951.5 838.0Q874 753 728 725V721Q890 702 977.5 614.5Q1065 527 1065 391Z' vector-effect='non-scaling-stroke'/><path transform='translate(2278,0)' d='M1767 432Q1767 214 1677.0 99.0Q1587 -16 1413 -16Q1237 -16 1148.0 98.0Q1059 212 1059 432Q1059 656 1145.0 768.5Q1231 881 1417 881Q1597 881 1682.0 767.5Q1767 654 1767 432ZM552 0H346L1266 1409H1475ZM408 1425Q587 1425 673.5 1312.0Q760 1199 760 977Q760 759 669.5 643.5Q579 528 403 528Q229 528 140.0 642.5Q51 757 51 977Q51 1204 137.0 1314.5Q223 1425 408 1425ZM1552 432Q1552 591 1521.5 659.0Q1491 727 1417 727Q1337 727 1306.5 658.0Q1276 589 1276 432Q1276 272 1308.0 206.5Q1340 141 1415 141Q1488 141 1520.0 209.0Q1552 277 1552 432ZM543 977Q543 1134 512.5 1202.0Q482 1270 408 1270Q328 1270 297.0 1202.5Q266 1135 266 977Q266 819 298.5 751.5Q331 684 406 684Q480 684 511.5 752.0Q543 820 543 977Z' vector-effect='non-scaling-stroke'/></g></svg><svg style='left:0;top:0' width='1' height='1'><g transform='translate(141.76,630.00) scale(0.01810,-0.01810)' fill='#73bf69' stroke='#111217' stroke-width='0.7' stroke-linejoin='round'><path transform='translate(0,0)' d='M478 0V1150L140 965V1250L520 1409H759V0Z' vector-effect='non-scaling-stroke'/></g></svg><svg style='left:231.1px;top:400.3px' width='100' height='100'><path d='M15.00 61.37 A36.8 36.8 0 1 1 85.00 61.37' fill='none' stroke='#22252b' stroke-width='19.5'/><path d='M3.30 65.17 A49.1 49.1 0 0 1 94.43 29.09' fill='none' stroke='#73bf69' stroke-width='3.4'/><path d='M94.43 29.09 A49.1 49.1 0 0 1 96.70 65.17' fill='none' stroke='#f2495c' stroke-width='3.4'/></svg><svg style='left:0;top:0' width='1' height='1'><g transform='translate(249.46,630.00) scale(0.01817,-0.01810)' fill='#73bf69' stroke='#111217' stroke-width='0.7' stroke-linejoin='round'><path transform='translate(0,0)' d='M478 0V1150L140 965V1250L520 1409H759V0Z' vector-effect='non-scaling-stroke'/><path transform='translate(1139,0)' d='M940 287V0H672V287H31V498L626 1409H940V496H1128V287ZM672 957Q672 1011 675.5 1074.0Q679 1137 681 1155Q655 1099 587 993L260 496H672Z' vector-effect='non-scaling-stroke'/><path transform='translate(2278,0)' d='M1049 1186Q954 1036 869.5 895.0Q785 754 722.0 611.5Q659 469 622.5 318.5Q586 168 586 0H293Q293 176 339.0 340.5Q385 505 472.0 675.5Q559 846 788 1178H88V1409H1049Z' vector-effect='non-scaling-stroke'/></g></svg><svg style='left:360.2px;top:400.3px' width='100' height='100'><path d='M15.00 61.37 A36.8 36.8 0 1 1 85.00 61.37' fill='none' stroke='#22252b' stroke-width='19.5'/><path d='M3.30 65.17 A49.1 49.1 0 0 1 94.43 29.09' fill='none' stroke='#73bf69' stroke-width='3.4'/><path d='M94.43 29.09 A49.1 49.1 0 0 1 96.70 65.17' fill='none' stroke='#f2495c' stroke-width='3.4'/></svg><svg style='left:0;top:0' width='1' height='1'><g transform='translate(389.23,463.70) scale(0.01012,-0.01171)' fill='#73bf69' stroke='#111217' stroke-width='0.25' stroke-linejoin='round'><path transform='translate(0,0)' d='M478 0V1150L140 965V1250L520 1409H759V0Z' vector-effect='non-scaling-stroke'/><path transform='translate(1139,0)' d='M71 0V195Q126 316 227.5 431.0Q329 546 483 671Q631 791 690.5 869.0Q750 947 750 1022Q750 1206 565 1206Q475 1206 427.5 1157.5Q380 1109 366 1012L83 1028Q107 1224 229.5 1327.0Q352 1430 563 1430Q791 1430 913.0 1326.0Q1035 1222 1035 1034Q1035 935 996.0 855.0Q957 775 896.0 707.5Q835 640 760.5 581.0Q686 522 616.0 466.0Q546 410 488.5 353.0Q431 296 403 231H1057V0Z' vector-effect='non-scaling-stroke'/><path transform='translate(2278,0)' d='M1767 432Q1767 214 1677.0 99.0Q1587 -16 1413 -16Q1237 -16 1148.0 98.0Q1059 212 1059 432Q1059 656 1145.0 768.5Q1231 881 1417 881Q1597 881 1682.0 767.5Q1767 654 1767 432ZM552 0H346L1266 1409H1475ZM408 1425Q587 1425 673.5 1312.0Q760 1199 760 977Q760 759 669.5 643.5Q579 528 403 528Q229 528 140.0 642.5Q51 757 51 977Q51 1204 137.0 1314.5Q223 1425 408 1425ZM1552 432Q1552 591 1521.5 659.0Q1491 727 1417 727Q1337 727 1306.5 658.0Q1276 589 1276 432Q1276 272 1308.0 206.5Q1340 141 1415 141Q1488 141 1520.0 209.0Q1552 277 1552 432ZM543 977Q543 1134 512.5 1202.0Q482 1270 408 1270Q328 1270 297.0 1202.5Q266 1135 266 977Q266 819 298.5 751.5Q331 684 406 684Q480 684 511.5 752.0Q543 820 543 977Z' vector-effect='non-scaling-stroke'/></g></svg><svg style='left:0;top:0' width='1' height='1'><g transform='translate(379.33,630.00) scale(0.01787,-0.01810)' fill='#73bf69' stroke='#111217' stroke-width='0.7' stroke-linejoin='round'><path transform='translate(0,0)' d='M71 0V195Q126 316 227.5 431.0Q329 546 483 671Q631 791 690.5 869.0Q750 947 750 1022Q750 1206 565 1206Q475 1206 427.5 1157.5Q380 1109 366 1012L83 1028Q107 1224 229.5 1327.0Q352 1430 563 1430Q791 1430 913.0 1326.0Q1035 1222 1035 1034Q1035 935 996.0 855.0Q957 775 896.0 707.5Q835 640 760.5 581.0Q686 522 616.0 466.0Q546 410 488.5 353.0Q431 296 403 231H1057V0Z' vector-effect='non-scaling-stroke'/><path transform='translate(1139,0)' d='M1065 461Q1065 236 939.0 108.0Q813 -20 591 -20Q342 -20 208.5 154.5Q75 329 75 672Q75 1049 210.5 1239.5Q346 1430 598 1430Q777 1430 880.5 1351.0Q984 1272 1027 1106L762 1069Q724 1208 592 1208Q479 1208 414.5 1095.0Q350 982 350 752Q395 827 475.0 867.0Q555 907 656 907Q845 907 955.0 787.0Q1065 667 1065 461ZM783 453Q783 573 727.5 636.5Q672 700 575 700Q482 700 426.0 640.5Q370 581 370 483Q370 360 428.5 279.5Q487 199 582 199Q677 199 730.0 266.5Q783 334 783 453Z' vector-effect='non-scaling-stroke'/><path transform='translate(2278,0)' d='M1055 705Q1055 348 932.5 164.0Q810 -20 565 -20Q81 -20 81 705Q81 958 134.0 1118.0Q187 1278 293.0 1354.0Q399 1430 573 1430Q823 1430 939.0 1249.0Q1055 1068 1055 705ZM773 705Q773 900 754.0 1008.0Q735 1116 693.0 1163.0Q651 1210 571 1210Q486 1210 442.5 1162.5Q399 1115 380.5 1007.5Q362 900 362 705Q362 512 381.5 403.5Q401 295 443.5 248.0Q486 201 567 201Q647 201 690.5 250.5Q734 300 753.5 409.0Q773 518 773 705Z' vector-effect='non-scaling-stroke'/></g></svg><svg style='left:489.3px;top:399.0px' width='100' height='100'><path d='M15.00 61.37 A36.8 36.8 0 1 1 85.00 61.37' fill='none' stroke='#22252b' stroke-width='19.5'/><path d='M3.30 65.17 A49.1 49.1 0 0 1 94.43 29.09' fill='none' stroke='#73bf69' stroke-width='3.4'/><path d='M94.43 29.09 A49.1 49.1 0 0 1 96.70 65.17' fill='none' stroke='#f2495c' stroke-width='3.4'/></svg><svg style='left:0;top:0' width='1' height='1'><g transform='translate(519.30,466.80) scale(0.01328,-0.01554)' fill='#73bf69' stroke='#111217' stroke-width='0.3' stroke-linejoin='round'><path transform='translate(0,0)' d='M1065 461Q1065 236 939.0 108.0Q813 -20 591 -20Q342 -20 208.5 154.5Q75 329 75 672Q75 1049 210.5 1239.5Q346 1430 598 1430Q777 1430 880.5 1351.0Q984 1272 1027 1106L762 1069Q724 1208 592 1208Q479 1208 414.5 1095.0Q350 982 350 752Q395 827 475.0 867.0Q555 907 656 907Q845 907 955.0 787.0Q1065 667 1065 461ZM783 453Q783 573 727.5 636.5Q672 700 575 700Q482 700 426.0 640.5Q370 581 370 483Q370 360 428.5 279.5Q487 199 582 199Q677 199 730.0 266.5Q783 334 783 453Z' vector-effect='non-scaling-stroke'/><path transform='translate(1139,0)' d='M1767 432Q1767 214 1677.0 99.0Q1587 -16 1413 -16Q1237 -16 1148.0 98.0Q1059 212 1059 432Q1059 656 1145.0 768.5Q1231 881 1417 881Q1597 881 1682.0 767.5Q1767 654 1767 432ZM552 0H346L1266 1409H1475ZM408 1425Q587 1425 673.5 1312.0Q760 1199 760 977Q760 759 669.5 643.5Q579 528 403 528Q229 528 140.0 642.5Q51 757 51 977Q51 1204 137.0 1314.5Q223 1425 408 1425ZM1552 432Q1552 591 1521.5 659.0Q1491 727 1417 727Q1337 727 1306.5 658.0Q1276 589 1276 432Q1276 272 1308.0 206.5Q1340 141 1415 141Q1488 141 1520.0 209.0Q1552 277 1552 432ZM543 977Q543 1134 512.5 1202.0Q482 1270 408 1270Q328 1270 297.0 1202.5Q266 1135 266 977Q266 819 298.5 751.5Q331 684 406 684Q480 684 511.5 752.0Q543 820 543 977Z' vector-effect='non-scaling-stroke'/></g></svg><svg style='left:0;top:0' width='1' height='1'><g transform='translate(508.81,630.00) scale(0.01782,-0.01810)' fill='#73bf69' stroke='#111217' stroke-width='0.7' stroke-linejoin='round'><path transform='translate(0,0)' d='M478 0V1150L140 965V1250L520 1409H759V0Z' vector-effect='non-scaling-stroke'/><path transform='translate(1139,0)' d='M1049 1186Q954 1036 869.5 895.0Q785 754 722.0 611.5Q659 469 622.5 318.5Q586 168 586 0H293Q293 176 339.0 340.5Q385 505 472.0 675.5Q559 846 788 1178H88V1409H1049Z' vector-effect='non-scaling-stroke'/><path transform='translate(2278,0)' d='M1055 705Q1055 348 932.5 164.0Q810 -20 565 -20Q81 -20 81 705Q81 958 134.0 1118.0Q187 1278 293.0 1354.0Q399 1430 573 1430Q823 1430 939.0 1249.0Q1055 1068 1055 705ZM773 705Q773 900 754.0 1008.0Q735 1116 693.0 1163.0Q651 1210 571 1210Q486 1210 442.5 1162.5Q399 1115 380.5 1007.5Q362 900 362 705Q362 512 381.5 403.5Q401 295 443.5 248.0Q486 201 567 201Q647 201 690.5 250.5Q734 300 753.5 409.0Q773 518 773 705Z' vector-effect='non-scaling-stroke'/></g></svg><svg style='left:618.4px;top:400.3px' width='100' height='100'><path d='M15.00 61.37 A36.8 36.8 0 1 1 85.00 61.37' fill='none' stroke='#22252b' stroke-width='19.5'/><path d='M3.30 65.17 A49.1 49.1 0 0 1 94.43 29.09' fill='none' stroke='#73bf69' stroke-width='3.4'/><path d='M94.43 29.09 A49.1 49.1 0 0 1 96.70 65.17' fill='none' stroke='#f2495c' stroke-width='3.4'/></svg><svg style='left:0;top:0' width='1' height='1'><g transform='translate(647.43,463.70) scale(0.01012,-0.01171)' fill='#73bf69' stroke='#111217' stroke-width='0.25' stroke-linejoin='round'><path transform='translate(0,0)' d='M478 0V1150L140 965V1250L520 1409H759V0Z' vector-effect='non-scaling-stroke'/><path transform='translate(1139,0)' d='M1065 391Q1065 193 935.0 85.0Q805 -23 565 -23Q338 -23 204.0 81.5Q70 186 47 383L333 408Q360 205 564 205Q665 205 721.0 255.0Q777 305 777 408Q777 502 709.0 552.0Q641 602 507 602H409V829H501Q622 829 683.0 878.5Q744 928 744 1020Q744 1107 695.5 1156.5Q647 1206 554 1206Q467 1206 413.5 1158.0Q360 1110 352 1022L71 1042Q93 1224 222.0 1327.0Q351 1430 559 1430Q780 1430 904.5 1330.5Q1029 1231 1029 1055Q1029 923 951.5 838.0Q874 753 728 725V721Q890 702 977.5 614.5Q1065 527 1065 391Z' vector-effect='non-scaling-stroke'/><path transform='translate(2278,0)' d='M1767 432Q1767 214 1677.0 99.0Q1587 -16 1413 -16Q1237 -16 1148.0 98.0Q1059 212 1059 432Q1059 656 1145.0 768.5Q1231 881 1417 881Q1597 881 1682.0 767.5Q1767 654 1767 432ZM552 0H346L1266 1409H1475ZM408 1425Q587 1425 673.5 1312.0Q760 1199 760 977Q760 759 669.5 643.5Q579 528 403 528Q229 528 140.0 642.5Q51 757 51 977Q51 1204 137.0 1314.5Q223 1425 408 1425ZM1552 432Q1552 591 1521.5 659.0Q1491 727 1417 727Q1337 727 1306.5 658.0Q1276 589 1276 432Q1276 272 1308.0 206.5Q1340 141 1415 141Q1488 141 1520.0 209.0Q1552 277 1552 432ZM543 977Q543 1134 512.5 1202.0Q482 1270 408 1270Q328 1270 297.0 1202.5Q266 1135 266 977Q266 819 298.5 751.5Q331 684 406 684Q480 684 511.5 752.0Q543 820 543 977Z' vector-effect='non-scaling-stroke'/></g></svg><svg style='left:0;top:0' width='1' height='1'><g transform='translate(637.75,630.00) scale(0.01767,-0.01810)' fill='#73bf69' stroke='#111217' stroke-width='0.7' stroke-linejoin='round'><path transform='translate(0,0)' d='M71 0V195Q126 316 227.5 431.0Q329 546 483 671Q631 791 690.5 869.0Q750 947 750 1022Q750 1206 565 1206Q475 1206 427.5 1157.5Q380 1109 366 1012L83 1028Q107 1224 229.5 1327.0Q352 1430 563 1430Q791 1430 913.0 1326.0Q1035 1222 1035 1034Q1035 935 996.0 855.0Q957 775 896.0 707.5Q835 640 760.5 581.0Q686 522 616.0 466.0Q546 410 488.5 353.0Q431 296 403 231H1057V0Z' vector-effect='non-scaling-stroke'/><path transform='translate(1139,0)' d='M1055 705Q1055 348 932.5 164.0Q810 -20 565 -20Q81 -20 81 705Q81 958 134.0 1118.0Q187 1278 293.0 1354.0Q399 1430 573 1430Q823 1430 939.0 1249.0Q1055 1068 1055 705ZM773 705Q773 900 754.0 1008.0Q735 1116 693.0 1163.0Q651 1210 571 1210Q486 1210 442.5 1162.5Q399 1115 380.5 1007.5Q362 900 362 705Q362 512 381.5 403.5Q401 295 443.5 248.0Q486 201 567 201Q647 201 690.5 250.5Q734 300 753.5 409.0Q773 518 773 705Z' vector-effect='non-scaling-stroke'/><path transform='translate(2278,0)' d='M1065 461Q1065 236 939.0 108.0Q813 -20 591 -20Q342 -20 208.5 154.5Q75 329 75 672Q75 1049 210.5 1239.5Q346 1430 598 1430Q777 1430 880.5 1351.0Q984 1272 1027 1106L762 1069Q724 1208 592 1208Q479 1208 414.5 1095.0Q350 982 350 752Q395 827 475.0 867.0Q555 907 656 907Q845 907 955.0 787.0Q1065 667 1065 461ZM783 453Q783 573 727.5 636.5Q672 700 575 700Q482 700 426.0 640.5Q370 581 370 483Q370 360 428.5 279.5Q487 199 582 199Q677 199 730.0 266.5Q783 334 783 453Z' vector-effect='non-scaling-stroke'/></g></svg><svg style='left:747.5px;top:399.0px' width='100' height='100'><path d='M15.00 61.37 A36.8 36.8 0 1 1 85.00 61.37' fill='none' stroke='#22252b' stroke-width='19.5'/><path d='M3.30 65.17 A49.1 49.1 0 0 1 94.43 29.09' fill='none' stroke='#73bf69' stroke-width='3.4'/><path d='M94.43 29.09 A49.1 49.1 0 0 1 96.70 65.17' fill='none' stroke='#f2495c' stroke-width='3.4'/></svg><svg style='left:0;top:0' width='1' height='1'><g transform='translate(777.50,466.80) scale(0.01328,-0.01554)' fill='#73bf69' stroke='#111217' stroke-width='0.3' stroke-linejoin='round'><path transform='translate(0,0)' d='M1065 461Q1065 236 939.0 108.0Q813 -20 591 -20Q342 -20 208.5 154.5Q75 329 75 672Q75 1049 210.5 1239.5Q346 1430 598 1430Q777 1430 880.5 1351.0Q984 1272 1027 1106L762 1069Q724 1208 592 1208Q479 1208 414.5 1095.0Q350 982 350 752Q395 827 475.0 867.0Q555 907 656 907Q845 907 955.0 787.0Q1065 667 1065 461ZM783 453Q783 573 727.5 636.5Q672 700 575 700Q482 700 426.0 640.5Q370 581 370 483Q370 360 428.5 279.5Q487 199 582 199Q677 199 730.0 266.5Q783 334 783 453Z' vector-effect='non-scaling-stroke'/><path transform='translate(1139,0)' d='M1767 432Q1767 214 1677.0 99.0Q1587 -16 1413 -16Q1237 -16 1148.0 98.0Q1059 212 1059 432Q1059 656 1145.0 768.5Q1231 881 1417 881Q1597 881 1682.0 767.5Q1767 654 1767 432ZM552 0H346L1266 1409H1475ZM408 1425Q587 1425 673.5 1312.0Q760 1199 760 977Q760 759 669.5 643.5Q579 528 403 528Q229 528 140.0 642.5Q51 757 51 977Q51 1204 137.0 1314.5Q223 1425 408 1425ZM1552 432Q1552 591 1521.5 659.0Q1491 727 1417 727Q1337 727 1306.5 658.0Q1276 589 1276 432Q1276 272 1308.0 206.5Q1340 141 1415 141Q1488 141 1520.0 209.0Q1552 277 1552 432ZM543 977Q543 1134 512.5 1202.0Q482 1270 408 1270Q328 1270 297.0 1202.5Q266 1135 266 977Q266 819 298.5 751.5Q331 684 406 684Q480 684 511.5 752.0Q543 820 543 977Z' vector-effect='non-scaling-stroke'/></g></svg><svg style='left:0;top:0' width='1' height='1'><g transform='translate(766.08,630.00) scale(0.01798,-0.01810)' fill='#73bf69' stroke='#111217' stroke-width='0.7' stroke-linejoin='round'><path transform='translate(0,0)' d='M478 0V1150L140 965V1250L520 1409H759V0Z' vector-effect='non-scaling-stroke'/><path transform='translate(1139,0)' d='M1063 727Q1063 352 926.0 166.0Q789 -20 537 -20Q351 -20 245.5 59.5Q140 139 96 311L360 348Q399 201 540 201Q658 201 721.5 314.0Q785 427 787 649Q749 574 662.5 531.5Q576 489 476 489Q290 489 180.5 615.5Q71 742 71 958Q71 1180 199.5 1305.0Q328 1430 563 1430Q816 1430 939.5 1254.5Q1063 1079 1063 727ZM766 924Q766 1055 708.5 1132.5Q651 1210 556 1210Q463 1210 409.5 1142.5Q356 1075 356 956Q356 839 409.0 768.5Q462 698 557 698Q647 698 706.5 759.5Q766 821 766 924Z' vector-effect='non-scaling-stroke'/><path transform='translate(2278,0)' d='M1082 469Q1082 245 942.5 112.5Q803 -20 560 -20Q348 -20 220.5 75.5Q93 171 63 352L344 375Q366 285 422.0 244.0Q478 203 563 203Q668 203 730.5 270.0Q793 337 793 463Q793 574 734.0 640.5Q675 707 569 707Q452 707 378 616H104L153 1409H1000V1200H408L385 844Q487 934 640 934Q841 934 961.5 809.0Q1082 684 1082 469Z' vector-effect='non-scaling-stroke'/></g></svg><svg style='left:876.6px;top:400.3px' width='100' height='100'><path d='M15.00 61.37 A36.8 36.8 0 1 1 85.00 61.37' fill='none' stroke='#22252b' stroke-width='19.5'/><path d='M3.30 65.17 A49.1 49.1 0 0 1 94.43 29.09' fill='none' stroke='#73bf69' stroke-width='3.4'/><path d='M94.43 29.09 A49.1 49.1 0 0 1 96.70 65.17' fill='none' stroke='#f2495c' stroke-width='3.4'/></svg><svg style='left:0;top:0' width='1' height='1'><g transform='translate(905.63,463.70) scale(0.01012,-0.01171)' fill='#73bf69' stroke='#111217' stroke-width='0.25' stroke-linejoin='round'><path transform='translate(0,0)' d='M478 0V1150L140 965V1250L520 1409H759V0Z' vector-effect='non-scaling-stroke'/><path transform='translate(1139,0)' d='M1065 391Q1065 193 935.0 85.0Q805 -23 565 -23Q338 -23 204.0 81.5Q70 186 47 383L333 408Q360 205 564 205Q665 205 721.0 255.0Q777 305 777 408Q777 502 709.0 552.0Q641 602 507 602H409V829H501Q622 829 683.0 878.5Q744 928 744 1020Q744 1107 695.5 1156.5Q647 1206 554 1206Q467 1206 413.5 1158.0Q360 1110 352 1022L71 1042Q93 1224 222.0 1327.0Q351 1430 559 1430Q780 1430 904.5 1330.5Q1029 1231 1029 1055Q1029 923 951.5 838.0Q874 753 728 725V721Q890 702 977.5 614.5Q1065 527 1065 391Z' vector-effect='non-scaling-stroke'/><path transform='translate(2278,0)' d='M1767 432Q1767 214 1677.0 99.0Q1587 -16 1413 -16Q1237 -16 1148.0 98.0Q1059 212 1059 432Q1059 656 1145.0 768.5Q1231 881 1417 881Q1597 881 1682.0 767.5Q1767 654 1767 432ZM552 0H346L1266 1409H1475ZM408 1425Q587 1425 673.5 1312.0Q760 1199 760 977Q760 759 669.5 643.5Q579 528 403 528Q229 528 140.0 642.5Q51 757 51 977Q51 1204 137.0 1314.5Q223 1425 408 1425ZM1552 432Q1552 591 1521.5 659.0Q1491 727 1417 727Q1337 727 1306.5 658.0Q1276 589 1276 432Q1276 272 1308.0 206.5Q1340 141 1415 141Q1488 141 1520.0 209.0Q1552 277 1552 432ZM543 977Q543 1134 512.5 1202.0Q482 1270 408 1270Q328 1270 297.0 1202.5Q266 1135 266 977Q266 819 298.5 751.5Q331 684 406 684Q480 684 511.5 752.0Q543 820 543 977Z' vector-effect='non-scaling-stroke'/></g></svg><svg style='left:0;top:0' width='1' height='1'><g transform='translate(895.72,630.00) scale(0.01770,-0.01810)' fill='#73bf69' stroke='#111217' stroke-width='0.7' stroke-linejoin='round'><path transform='translate(0,0)' d='M478 0V1150L140 965V1250L520 1409H759V0Z' vector-effect='non-scaling-stroke'/><path transform='translate(1139,0)' d='M1055 705Q1055 348 932.5 164.0Q810 -20 565 -20Q81 -20 81 705Q81 958 134.0 1118.0Q187 1278 293.0 1354.0Q399 1430 573 1430Q823 1430 939.0 1249.0Q1055 1068 1055 705ZM773 705Q773 900 754.0 1008.0Q735 1116 693.0 1163.0Q651 1210 571 1210Q486 1210 442.5 1162.5Q399 1115 380.5 1007.5Q362 900 362 705Q362 512 381.5 403.5Q401 295 443.5 248.0Q486 201 567 201Q647 201 690.5 250.5Q734 300 753.5 409.0Q773 518 773 705Z' vector-effect='non-scaling-stroke'/><path transform='translate(2278,0)' d='M1076 397Q1076 199 945.0 89.5Q814 -20 571 -20Q330 -20 197.5 89.0Q65 198 65 395Q65 530 143.0 622.5Q221 715 352 737V741Q238 766 168.0 854.0Q98 942 98 1057Q98 1230 220.5 1330.0Q343 1430 567 1430Q796 1430 918.5 1332.5Q1041 1235 1041 1055Q1041 940 971.5 853.0Q902 766 785 743V739Q921 717 998.5 627.5Q1076 538 1076 397ZM752 1040Q752 1140 706.0 1186.5Q660 1233 567 1233Q385 1233 385 1040Q385 838 569 838Q661 838 706.5 885.0Q752 932 752 1040ZM785 420Q785 641 565 641Q463 641 408.5 583.0Q354 525 354 416Q354 292 408.0 235.0Q462 178 573 178Q682 178 733.5 235.0Q785 292 785 420Z' vector-effect='non-scaling-stroke'/></g></svg><svg style='left:1005.7px;top:399.0px' width='100' height='100'><path d='M15.00 61.37 A36.8 36.8 0 1 1 85.00 61.37' fill='none' stroke='#22252b' stroke-width='19.5'/><path d='M3.30 65.17 A49.1 49.1 0 0 1 94.43 29.09' fill='none' stroke='#73bf69' stroke-width='3.4'/><path d='M94.43 29.09 A49.1 49.1 0 0 1 96.70 65.17' fill='none' stroke='#f2495c' stroke-width='3.4'/></svg><svg style='left:0;top:0' width='1' height='1'><g transform='translate(1035.70,466.80) scale(0.01328,-0.01554)' fill='#73bf69' stroke='#111217' stroke-width='0.3' stroke-linejoin='round'><path transform='translate(0,0)' d='M1065 461Q1065 236 939.0 108.0Q813 -20 591 -20Q342 -20 208.5 154.5Q75 329 75 672Q75 1049 210.5 1239.5Q346 1430 598 1430Q777 1430 880.5 1351.0Q984 1272 1027 1106L762 1069Q724 1208 592 1208Q479 1208 414.5 1095.0Q350 982 350 752Q395 827 475.0 867.0Q555 907 656 907Q845 907 955.0 787.0Q1065 667 1065 461ZM783 453Q783 573 727.5 636.5Q672 700 575 700Q482 700 426.0 640.5Q370 581 370 483Q370 360 428.5 279.5Q487 199 582 199Q677 199 730.0 266.5Q783 334 783 453Z' vector-effect='non-scaling-stroke'/><path transform='translate(1139,0)' d='M1767 432Q1767 214 1677.0 99.0Q1587 -16 1413 -16Q1237 -16 1148.0 98.0Q1059 212 1059 432Q1059 656 1145.0 768.5Q1231 881 1417 881Q1597 881 1682.0 767.5Q1767 654 1767 432ZM552 0H346L1266 1409H1475ZM408 1425Q587 1425 673.5 1312.0Q760 1199 760 977Q760 759 669.5 643.5Q579 528 403 528Q229 528 140.0 642.5Q51 757 51 977Q51 1204 137.0 1314.5Q223 1425 408 1425ZM1552 432Q1552 591 1521.5 659.0Q1491 727 1417 727Q1337 727 1306.5 658.0Q1276 589 1276 432Q1276 272 1308.0 206.5Q1340 141 1415 141Q1488 141 1520.0 209.0Q1552 277 1552 432ZM543 977Q543 1134 512.5 1202.0Q482 1270 408 1270Q328 1270 297.0 1202.5Q266 1135 266 977Q266 819 298.5 751.5Q331 684 406 684Q480 684 511.5 752.0Q543 820 543 977Z' vector-effect='non-scaling-stroke'/></g></svg><svg style='left:0;top:0' width='1' height='1'><g transform='translate(1045.51,630.00) scale(0.01810,-0.01810)' fill='#73bf69' stroke='#111217' stroke-width='0.7' stroke-linejoin='round'><path transform='translate(0,0)' d='M478 0V1150L140 965V1250L520 1409H759V0Z' vector-effect='non-scaling-stroke'/></g></svg><svg style='left:1134.8px;top:400.3px' width='100' height='100'><path d='M15.00 61.37 A36.8 36.8 0 1 1 85.00 61.37' fill='none' stroke='#22252b' stroke-width='19.5'/><path d='M3.30 65.17 A49.1 49.1 0 0 1 94.43 29.09' fill='none' stroke='#73bf69' stroke-width='3.4'/><path d='M94.43 29.09 A49.1 49.1 0 0 1 96.70 65.17' fill='none' stroke='#f2495c' stroke-width='3.4'/></svg><svg style='left:0;top:0' width='1' height='1'><g transform='translate(1154.66,630.00) scale(0.01748,-0.01810)' fill='#73bf69' stroke='#111217' stroke-width='0.7' stroke-linejoin='round'><path transform='translate(0,0)' d='M71 0V195Q126 316 227.5 431.0Q329 546 483 671Q631 791 690.5 869.0Q750 947 750 1022Q750 1206 565 1206Q475 1206 427.5 1157.5Q380 1109 366 1012L83 1028Q107 1224 229.5 1327.0Q352 1430 563 1430Q791 1430 913.0 1326.0Q1035 1222 1035 1034Q1035 935 996.0 855.0Q957 775 896.0 707.5Q835 640 760.5 581.0Q686 522 616.0 466.0Q546 410 488.5 353.0Q431 296 403 231H1057V0Z' vector-effect='non-scaling-stroke'/><path transform='translate(1139,0)' d='M1055 705Q1055 348 932.5 164.0Q810 -20 565 -20Q81 -20 81 705Q81 958 134.0 1118.0Q187 1278 293.0 1354.0Q399 1430 573 1430Q823 1430 939.0 1249.0Q1055 1068 1055 705ZM773 705Q773 900 754.0 1008.0Q735 1116 693.0 1163.0Q651 1210 571 1210Q486 1210 442.5 1162.5Q399 1115 380.5 1007.5Q362 900 362 705Q362 512 381.5 403.5Q401 295 443.5 248.0Q486 201 567 201Q647 201 690.5 250.5Q734 300 753.5 409.0Q773 518 773 705Z' vector-effect='non-scaling-stroke'/><path transform='translate(2278,0)' d='M1065 391Q1065 193 935.0 85.0Q805 -23 565 -23Q338 -23 204.0 81.5Q70 186 47 383L333 408Q360 205 564 205Q665 205 721.0 255.0Q777 305 777 408Q777 502 709.0 552.0Q641 602 507 602H409V829H501Q622 829 683.0 878.5Q744 928 744 1020Q744 1107 695.5 1156.5Q647 1206 554 1206Q467 1206 413.5 1158.0Q360 1110 352 1022L71 1042Q93 1224 222.0 1327.0Q351 1430 559 1430Q780 1430 904.5 1330.5Q1029 1231 1029 1055Q1029 923 951.5 838.0Q874 753 728 725V721Q890 702 977.5 614.5Q1065 527 1065 391Z' vector-effect='non-scaling-stroke'/></g></svg><svg style='left:1263.9px;top:399.0px' width='100' height='100'><path d='M15.00 61.37 A36.8 36.8 0 1 1 85.00 61.37' fill='none' stroke='#22252b' stroke-width='19.5'/><path d='M3.30 65.17 A49.1 49.1 0 0 1 94.43 29.09' fill='none' stroke='#73bf69' stroke-width='3.4'/><path d='M94.43 29.09 A49.1 49.1 0 0 1 96.70 65.17' fill='none' stroke='#f2495c' stroke-width='3.4'/></svg><svg style='left:0;top:0' width='1' height='1'><g transform='translate(1293.96,466.80) scale(0.01326,-0.01554)' fill='#73bf69' stroke='#111217' stroke-width='0.3' stroke-linejoin='round'><path transform='translate(0,0)' d='M71 0V195Q126 316 227.5 431.0Q329 546 483 671Q631 791 690.5 869.0Q750 947 750 1022Q750 1206 565 1206Q475 1206 427.5 1157.5Q380 1109 366 1012L83 1028Q107 1224 229.5 1327.0Q352 1430 563 1430Q791 1430 913.0 1326.0Q1035 1222 1035 1034Q1035 935 996.0 855.0Q957 775 896.0 707.5Q835 640 760.5 581.0Q686 522 616.0 466.0Q546 410 488.5 353.0Q431 296 403 231H1057V0Z' vector-effect='non-scaling-stroke'/><path transform='translate(1139,0)' d='M1767 432Q1767 214 1677.0 99.0Q1587 -16 1413 -16Q1237 -16 1148.0 98.0Q1059 212 1059 432Q1059 656 1145.0 768.5Q1231 881 1417 881Q1597 881 1682.0 767.5Q1767 654 1767 432ZM552 0H346L1266 1409H1475ZM408 1425Q587 1425 673.5 1312.0Q760 1199 760 977Q760 759 669.5 643.5Q579 528 403 528Q229 528 140.0 642.5Q51 757 51 977Q51 1204 137.0 1314.5Q223 1425 408 1425ZM1552 432Q1552 591 1521.5 659.0Q1491 727 1417 727Q1337 727 1306.5 658.0Q1276 589 1276 432Q1276 272 1308.0 206.5Q1340 141 1415 141Q1488 141 1520.0 209.0Q1552 277 1552 432ZM543 977Q543 1134 512.5 1202.0Q482 1270 408 1270Q328 1270 297.0 1202.5Q266 1135 266 977Q266 819 298.5 751.5Q331 684 406 684Q480 684 511.5 752.0Q543 820 543 977Z' vector-effect='non-scaling-stroke'/></g></svg><svg style='left:0;top:0' width='1' height='1'><g transform='translate(1283.71,630.00) scale(0.01780,-0.01810)' fill='#73bf69' stroke='#111217' stroke-width='0.7' stroke-linejoin='round'><path transform='translate(0,0)' d='M478 0V1150L140 965V1250L520 1409H759V0Z' vector-effect='non-scaling-stroke'/><path transform='translate(1139,0)' d='M1055 705Q1055 348 932.5 164.0Q810 -20 565 -20Q81 -20 81 705Q81 958 134.0 1118.0Q187 1278 293.0 1354.0Q399 1430 573 1430Q823 1430 939.0 1249.0Q1055 1068 1055 705ZM773 705Q773 900 754.0 1008.0Q735 1116 693.0 1163.0Q651 1210 571 1210Q486 1210 442.5 1162.5Q399 1115 380.5 1007.5Q362 900 362 705Q362 512 381.5 403.5Q401 295 443.5 248.0Q486 201 567 201Q647 201 690.5 250.5Q734 300 753.5 409.0Q773 518 773 705Z' vector-effect='non-scaling-stroke'/><path transform='translate(2278,0)' d='M1065 391Q1065 193 935.0 85.0Q805 -23 565 -23Q338 -23 204.0 81.5Q70 186 47 383L333 408Q360 205 564 205Q665 205 721.0 255.0Q777 305 777 408Q777 502 709.0 552.0Q641 602 507 602H409V829H501Q622 829 683.0 878.5Q744 928 744 1020Q744 1107 695.5 1156.5Q647 1206 554 1206Q467 1206 413.5 1158.0Q360 1110 352 1022L71 1042Q93 1224 222.0 1327.0Q351 1430 559 1430Q780 1430 904.5 1330.5Q1029 1231 1029 1055Q1029 923 951.5 838.0Q874 753 728 725V721Q890 702 977.5 614.5Q1065 527 1065 391Z' vector-effect='non-scaling-stroke'/></g></svg><div class='t' style='left:110.00px;top:19.56px;font-size:14.64px;line-height:14.64px;font-weight:400;color:#d8d9e0;transform:scaleX(0.9184);text-shadow:0.35px 0 0 #d8d9e0,-0.15px 0 0 #d8d9e0;'>Wireless</div><div class='t' style='left:167.60px;top:19.56px;font-size:14.64px;line-height:14.64px;font-weight:400;color:#d8d9e0;transform:scaleX(0.9084);text-shadow:0.35px 0 0 #d8d9e0,-0.15px 0 0 #d8d9e0;'>/ WNCd</div><div class='t' style='left:1152.00px;top:21.51px;font-size:11.16px;line-height:11.16px;font-weight:400;color:#a6a7b0;transform:scaleX(0.9576);text-shadow:0.35px 0 0 #a6a7b0,-0.15px 0 0 #a6a7b0;'>Last 6 hours</div><div class='t' style='left:1302.80px;top:21.51px;font-size:11.16px;line-height:11.16px;font-weight:400;color:#a6a7b0;transform:scaleX(0.9722);text-shadow:0.35px 0 0 #a6a7b0,-0.15px 0 0 #a6a7b0;'>30s</div><div class='t' style='left:97.40px;top:58.75px;font-size:9.71px;line-height:9.71px;font-weight:700;color:#6e9fff;transform:scaleX(0.8238);'>WLC</div><div class='t' style='left:132.50px;top:56.63px;font-size:12.32px;line-height:12.32px;font-weight:400;color:#d8d9e0;transform:scaleX(0.7688);text-shadow:0.35px 0 0 #d8d9e0,-0.15px 0 0 #d8d9e0;'>CLUS-WLC-SSO-1</div><div class='t' style='left:251.80px;top:58.84px;font-size:9.13px;line-height:9.13px;font-weight:700;color:#6e9fff;transform:scaleX(0.9357);'>WNCd_instance</div><div class='t' style='left:333.40px;top:57.54px;font-size:11.59px;line-height:11.59px;font-weight:400;color:#d8d9e0;transform:scaleX(0.9243);text-shadow:0.35px 0 0 #d8d9e0,-0.15px 0 0 #d8d9e0;'>All</div><div class='t' style='left:635.60px;top:87.58px;font-size:12.03px;line-height:12.03px;font-weight:700;color:#d8d9e0;transform:scaleX(0.8040);'>WNCd Process CPU for CLUS-WLC-SSO-1</div><div class='t' style='left:134.77px;top:345.70px;font-size:10.00px;line-height:10.00px;font-weight:400;color:#d8d9e0;transform:scaleX(1.0000);text-shadow:0.35px 0 0 #d8d9e0,-0.15px 0 0 #d8d9e0;'>wncd_0</div><div class='t' style='left:142.80px;top:516.99px;font-size:11.30px;line-height:11.30px;font-weight:400;color:#d8d9e0;transform:scaleX(0.9451);text-shadow:0.35px 0 0 #d8d9e0,-0.15px 0 0 #d8d9e0;'>Site</div><div class='t' style='left:112.60px;top:540.88px;font-size:12.61px;line-height:12.61px;font-weight:700;color:#73bf69;transform:scaleX(0.8741);'>default-site-tag</div><div class='t' style='left:125.25px;top:573.88px;font-size:10.72px;line-height:10.72px;font-weight:700;color:#d8d9e0;transform:scaleX(0.9165);'>APs Joined</div><div class='t' style='left:259.42px;top:345.70px;font-size:10.00px;line-height:10.00px;font-weight:400;color:#d8d9e0;transform:scaleX(1.0000);text-shadow:0.35px 0 0 #d8d9e0,-0.15px 0 0 #d8d9e0;'>wncd_0-2</div><div class='t' style='left:260.10px;top:447.25px;font-size:12.17px;line-height:12.17px;font-weight:700;color:#73bf69;transform:scaleX(0.9422);'>No data</div><div class='t' style='left:271.90px;top:516.99px;font-size:11.30px;line-height:11.30px;font-weight:400;color:#d8d9e0;transform:scaleX(0.9451);text-shadow:0.35px 0 0 #d8d9e0,-0.15px 0 0 #d8d9e0;'>Site</div><div class='t' style='left:252.30px;top:540.88px;font-size:12.61px;line-height:12.61px;font-weight:700;color:#73bf69;transform:scaleX(0.8229);'>MBY-WOS1</div><div class='t' style='left:254.35px;top:573.88px;font-size:10.72px;line-height:10.72px;font-weight:700;color:#d8d9e0;transform:scaleX(0.9165);'>APs Joined</div><div class='t' style='left:392.97px;top:345.70px;font-size:10.00px;line-height:10.00px;font-weight:400;color:#d8d9e0;transform:scaleX(1.0000);text-shadow:0.35px 0 0 #d8d9e0,-0.15px 0 0 #d8d9e0;'>wncd_1</div><div class='t' style='left:401.00px;top:516.99px;font-size:11.30px;line-height:11.30px;font-weight:400;color:#d8d9e0;transform:scaleX(0.9451);text-shadow:0.35px 0 0 #d8d9e0,-0.15px 0 0 #d8d9e0;'>Site</div><div class='t' style='left:382.70px;top:540.88px;font-size:12.61px;line-height:12.61px;font-weight:700;color:#73bf69;transform:scaleX(0.8363);'>MBY-SCC2</div><div class='t' style='left:383.45px;top:573.88px;font-size:10.72px;line-height:10.72px;font-weight:700;color:#d8d9e0;transform:scaleX(0.9165);'>APs Joined</div><div class='t' style='left:522.07px;top:345.70px;font-size:10.00px;line-height:10.00px;font-weight:400;color:#d8d9e0;transform:scaleX(1.0000);text-shadow:0.35px 0 0 #d8d9e0,-0.15px 0 0 #d8d9e0;'>wncd_2</div><div class='t' style='left:530.10px;top:516.99px;font-size:11.30px;line-height:11.30px;font-weight:400;color:#d8d9e0;transform:scaleX(0.9451);text-shadow:0.35px 0 0 #d8d9e0,-0.15px 0 0 #d8d9e0;'>Site</div><div class='t' style='left:511.50px;top:540.88px;font-size:12.61px;line-height:12.61px;font-weight:700;color:#73bf69;transform:scaleX(0.8488);'>MBY-NCC0</div><div class='t' style='left:512.55px;top:573.88px;font-size:10.72px;line-height:10.72px;font-weight:700;color:#d8d9e0;transform:scaleX(0.9165);'>APs Joined</div><div class='t' style='left:651.17px;top:345.70px;font-size:10.00px;line-height:10.00px;font-weight:400;color:#d8d9e0;transform:scaleX(1.0000);text-shadow:0.35px 0 0 #d8d9e0,-0.15px 0 0 #d8d9e0;'>wncd_3</div><div class='t' style='left:659.20px;top:516.99px;font-size:11.30px;line-height:11.30px;font-weight:400;color:#d8d9e0;transform:scaleX(0.9451);text-shadow:0.35px 0 0 #d8d9e0,-0.15px 0 0 #d8d9e0;'>Site</div><div class='t' style='left:639.70px;top:540.88px;font-size:12.61px;line-height:12.61px;font-weight:700;color:#73bf69;transform:scaleX(0.8331);'>MBY-WOS2</div><div class='t' style='left:641.65px;top:573.88px;font-size:10.72px;line-height:10.72px;font-weight:700;color:#d8d9e0;transform:scaleX(0.9165);'>APs Joined</div><div class='t' style='left:780.27px;top:345.70px;font-size:10.00px;line-height:10.00px;font-weight:400;color:#d8d9e0;transform:scaleX(1.0000);text-shadow:0.35px 0 0 #d8d9e0,-0.15px 0 0 #d8d9e0;'>wncd_4</div><div class='t' style='left:788.30px;top:516.99px;font-size:11.30px;line-height:11.30px;font-weight:400;color:#d8d9e0;transform:scaleX(0.9451);text-shadow:0.35px 0 0 #d8d9e0,-0.15px 0 0 #d8d9e0;'>Site</div><div class='t' style='left:770.30px;top:540.88px;font-size:12.61px;line-height:12.61px;font-weight:700;color:#73bf69;transform:scaleX(0.8409);'>MBY-SCC3</div><div class='t' style='left:770.75px;top:573.88px;font-size:10.72px;line-height:10.72px;font-weight:700;color:#d8d9e0;transform:scaleX(0.9165);'>APs Joined</div><div class='t' style='left:909.37px;top:345.70px;font-size:10.00px;line-height:10.00px;font-weight:400;color:#d8d9e0;transform:scaleX(1.0000);text-shadow:0.35px 0 0 #d8d9e0,-0.15px 0 0 #d8d9e0;'>wncd_5</div><div class='t' style='left:917.40px;top:516.99px;font-size:11.30px;line-height:11.30px;font-weight:400;color:#d8d9e0;transform:scaleX(0.9451);text-shadow:0.35px 0 0 #d8d9e0,-0.15px 0 0 #d8d9e0;'>Site</div><div class='t' style='left:899.50px;top:540.88px;font-size:12.61px;line-height:12.61px;font-weight:700;color:#73bf69;transform:scaleX(0.8224);'>MBY-SCC1</div><div class='t' style='left:899.85px;top:573.88px;font-size:10.72px;line-height:10.72px;font-weight:700;color:#d8d9e0;transform:scaleX(0.9165);'>APs Joined</div><div class='t' style='left:1038.47px;top:345.70px;font-size:10.00px;line-height:10.00px;font-weight:400;color:#d8d9e0;transform:scaleX(1.0000);text-shadow:0.35px 0 0 #d8d9e0,-0.15px 0 0 #d8d9e0;'>wncd_6</div><div class='t' style='left:1046.50px;top:516.99px;font-size:11.30px;line-height:11.30px;font-weight:400;color:#d8d9e0;transform:scaleX(0.9451);text-shadow:0.35px 0 0 #d8d9e0,-0.15px 0 0 #d8d9e0;'>Site</div><div class='t' style='left:1016.40px;top:540.88px;font-size:12.61px;line-height:12.61px;font-weight:700;color:#73bf69;transform:scaleX(0.8730);'>default-site-tag</div><div class='t' style='left:1028.95px;top:573.88px;font-size:10.72px;line-height:10.72px;font-weight:700;color:#d8d9e0;transform:scaleX(0.9165);'>APs Joined</div><div class='t' style='left:1163.12px;top:345.70px;font-size:10.00px;line-height:10.00px;font-weight:400;color:#d8d9e0;transform:scaleX(1.0000);text-shadow:0.35px 0 0 #d8d9e0,-0.15px 0 0 #d8d9e0;'>wncd_6-2</div><div class='t' style='left:1163.80px;top:447.25px;font-size:12.17px;line-height:12.17px;font-weight:700;color:#73bf69;transform:scaleX(0.9422);'>No data</div><div class='t' style='left:1175.60px;top:516.99px;font-size:11.30px;line-height:11.30px;font-weight:400;color:#d8d9e0;transform:scaleX(0.9451);text-shadow:0.35px 0 0 #d8d9e0,-0.15px 0 0 #d8d9e0;'>Site</div><div class='t' style='left:1152.40px;top:540.88px;font-size:12.61px;line-height:12.61px;font-weight:700;color:#73bf69;transform:scaleX(0.8511);'>MBY-SCC2-2</div><div class='t' style='left:1158.05px;top:573.88px;font-size:10.72px;line-height:10.72px;font-weight:700;color:#d8d9e0;transform:scaleX(0.9165);'>APs Joined</div><div class='t' style='left:1296.67px;top:345.70px;font-size:10.00px;line-height:10.00px;font-weight:400;color:#d8d9e0;transform:scaleX(1.0000);text-shadow:0.35px 0 0 #d8d9e0,-0.15px 0 0 #d8d9e0;'>wncd_7</div><div class='t' style='left:1304.70px;top:516.99px;font-size:11.30px;line-height:11.30px;font-weight:400;color:#d8d9e0;transform:scaleX(0.9451);text-shadow:0.35px 0 0 #d8d9e0,-0.15px 0 0 #d8d9e0;'>Site</div><div class='t' style='left:1260.10px;top:540.88px;font-size:12.61px;line-height:12.61px;font-weight:700;color:#73bf69;transform:scaleX(0.8409);'>Delano-Luxor-Rooms</div><div class='t' style='left:1287.15px;top:573.88px;font-size:10.72px;line-height:10.72px;font-weight:700;color:#d8d9e0;transform:scaleX(0.9165);'>APs Joined</div><div style='position:absolute;left:43px;top:-19px;width:1344px;height:784px;border-radius:8px;box-shadow:inset 0 0 0 1px #3a3b3f'></div></div></div>
</body></html>
